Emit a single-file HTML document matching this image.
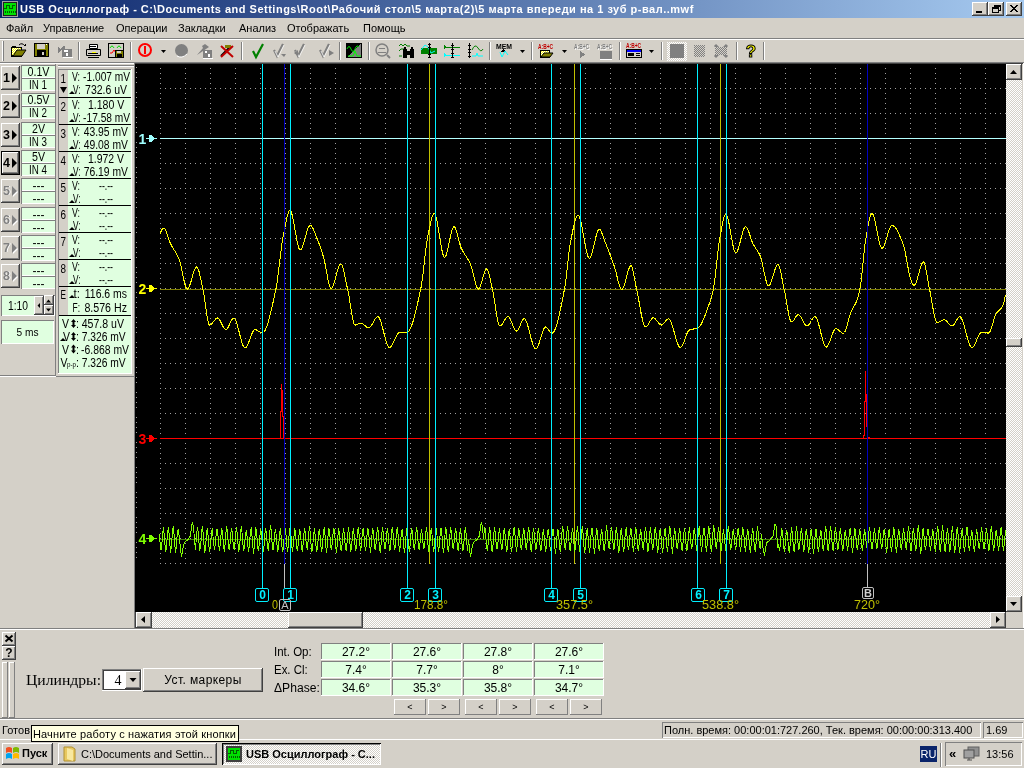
<!DOCTYPE html>
<html><head><meta charset="utf-8"><style>
*{margin:0;padding:0;box-sizing:border-box}
html,body{width:1024px;height:768px;overflow:hidden}
body{background:#D4D0C8;font-family:"Liberation Sans",sans-serif;font-size:11px;color:#000;position:relative}
.a{position:absolute}
.r{position:absolute;background:#D4D0C8;box-shadow:inset -1px -1px #404040,inset 1px 1px #fff,inset -2px -2px #808080}
.s{position:absolute;box-shadow:inset 1px 1px #808080,inset -1px -1px #fff}
.t{position:absolute;white-space:nowrap;line-height:13px}
.chk{background-color:#fff;background-image:conic-gradient(#D4D0C8 25%,#fff 0 50%,#D4D0C8 0 75%,#fff 0);background-size:2px 2px}
svg{overflow:visible}
body>*{will-change:transform}
</style></head><body>
<div class="a" style="left:0px;top:0px;width:1024px;height:18px;background:linear-gradient(to right,#0A246A,#A6CAF0)"></div>
<svg class="a" style="left:2px;top:1px" width="16" height="16" shape-rendering="crispEdges"><rect x="0" y="0" width="16" height="16" fill="#808080"/><rect x="0.5" y="0.5" width="15" height="15" fill="#202020" stroke="#A0A0A0"/><rect x="2" y="2" width="12" height="12" fill="#00E000"/><polyline points="2,7 4,7 4,4 7,4 7,7 10,7 10,4 13,4" fill="none" stroke="#006000"/><path d="M3 12v-2M5 12v-2M7 12v-2M9 12v-2M11 12v-2M13 12v-2" stroke="#006000"/></svg>
<div class="t" style="left:20px;top:2px;color:#fff;font-weight:bold;font-size:11px;line-height:14px;letter-spacing:0.5px">USB Осциллограф - C:\Documents and Settings\Root\Рабочий стол\5 марта(2)\5 марта впереди на 1 зуб р-вал..mwf</div>
<div class="r" style="left:972px;top:2px;width:16px;height:14px;"></div>
<div class="r" style="left:988px;top:2px;width:16px;height:14px;"></div>
<div class="r" style="left:1006px;top:2px;width:16px;height:14px;"></div>
<svg class="a" style="left:972px;top:2px" width="50" height="14" shape-rendering="crispEdges"><rect x="4" y="9" width="6" height="2" fill="#000"/><path d="M20.5 5.5h6v5h-6z M22.5 5.5v-2h6v5h-2" fill="none" stroke="#000"/><rect x="20" y="6" width="6" height="1" fill="#000"/><rect x="22" y="4" width="6" height="1" fill="#000"/><path d="M38 3l7 7M45 3l-7 7M39 3l7 7M46 3l-7 7" stroke="#000" stroke-width="1" fill="none"/></svg>
<div class="t" style="left:6px;top:22px;font-size:11px">Файл</div>
<div class="t" style="left:43px;top:22px;font-size:11px">Управление</div>
<div class="t" style="left:116px;top:22px;font-size:11px">Операции</div>
<div class="t" style="left:178px;top:22px;font-size:11px">Закладки</div>
<div class="t" style="left:239px;top:22px;font-size:11px">Анализ</div>
<div class="t" style="left:287px;top:22px;font-size:11px">Отображать</div>
<div class="t" style="left:363px;top:22px;font-size:11px">Помощь</div>
<div class="a" style="left:0px;top:38px;width:1024px;height:1px;background:#808080"></div>
<div class="a" style="left:0px;top:39px;width:1024px;height:1px;background:#fff"></div>
<div class="a" style="left:0px;top:62px;width:1024px;height:1px;background:#808080"></div>
<div class="a" style="left:0px;top:63px;width:134px;height:1px;background:#fff"></div>
<div class="a" style="left:2px;top:41px;width:1px;height:20px;background:#fff"></div>
<div class="a" style="left:3px;top:41px;width:1px;height:20px;background:#808080"></div>
<div class="a" style="left:78px;top:42px;width:1px;height:18px;background:#808080"></div>
<div class="a" style="left:79px;top:42px;width:1px;height:18px;background:#fff"></div>
<div class="a" style="left:130px;top:42px;width:1px;height:18px;background:#808080"></div>
<div class="a" style="left:131px;top:42px;width:1px;height:18px;background:#fff"></div>
<div class="a" style="left:241px;top:42px;width:1px;height:18px;background:#808080"></div>
<div class="a" style="left:242px;top:42px;width:1px;height:18px;background:#fff"></div>
<div class="a" style="left:339px;top:42px;width:1px;height:18px;background:#808080"></div>
<div class="a" style="left:340px;top:42px;width:1px;height:18px;background:#fff"></div>
<div class="a" style="left:368px;top:42px;width:1px;height:18px;background:#808080"></div>
<div class="a" style="left:369px;top:42px;width:1px;height:18px;background:#fff"></div>
<div class="a" style="left:489px;top:42px;width:1px;height:18px;background:#808080"></div>
<div class="a" style="left:490px;top:42px;width:1px;height:18px;background:#fff"></div>
<div class="a" style="left:531px;top:42px;width:1px;height:18px;background:#808080"></div>
<div class="a" style="left:532px;top:42px;width:1px;height:18px;background:#fff"></div>
<div class="a" style="left:619px;top:42px;width:1px;height:18px;background:#808080"></div>
<div class="a" style="left:620px;top:42px;width:1px;height:18px;background:#fff"></div>
<div class="a" style="left:661px;top:42px;width:1px;height:18px;background:#808080"></div>
<div class="a" style="left:662px;top:42px;width:1px;height:18px;background:#fff"></div>
<div class="a" style="left:736px;top:42px;width:1px;height:18px;background:#808080"></div>
<div class="a" style="left:737px;top:42px;width:1px;height:18px;background:#fff"></div>
<div class="a" style="left:763px;top:42px;width:1px;height:18px;background:#808080"></div>
<div class="a" style="left:764px;top:42px;width:1px;height:18px;background:#fff"></div>
<svg class="a" style="left:0;top:0" width="780" height="64" shape-rendering="crispEdges">
<rect x="11" y="47" width="11" height="10" fill="#000"/>
<rect x="12" y="48" width="9" height="7" fill="#fff"/><path d="M12 48h1v1h-1zM14 48h1v1h-1zM16 48h1v1h-1zM18 48h1v1h-1zM20 48h1v1h-1zM13 49h1v1h-1zM15 49h1v1h-1zM17 49h1v1h-1zM19 49h1v1h-1zM12 50h1v1h-1zM14 50h1v1h-1zM16 50h1v1h-1zM18 50h1v1h-1zM20 50h1v1h-1zM13 51h1v1h-1zM15 51h1v1h-1zM17 51h1v1h-1zM19 51h1v1h-1zM12 52h1v1h-1zM14 52h1v1h-1zM16 52h1v1h-1zM18 52h1v1h-1zM20 52h1v1h-1zM13 53h1v1h-1zM15 53h1v1h-1zM17 53h1v1h-1zM19 53h1v1h-1zM12 54h1v1h-1zM14 54h1v1h-1zM16 54h1v1h-1zM18 54h1v1h-1zM20 54h1v1h-1z" fill="#FFFF00"/>
<rect x="12" y="46" width="4" height="1" fill="#000"/>
<path d="M13 56L17 50H26L22 56z" fill="#808000" stroke="#000" stroke-width="1" shape-rendering="auto"/>
<path d="M19 45q3-3 6 1" fill="none" stroke="#000" shape-rendering="auto"/><path d="M23 46h3v-3z" fill="#000"/>
<rect x="34" y="43" width="15" height="14" fill="#000"/>
<rect x="35" y="44" width="13" height="12" fill="#808000"/>
<rect x="37" y="44" width="8" height="5" fill="#D4D0C8"/>
<rect x="37" y="50" width="9" height="6" fill="#000"/>
<rect x="42" y="52" width="2" height="3" fill="#D4D0C8"/>
<rect x="46" y="44" width="1" height="1" fill="#fff"/>
<path d="M58 47l3 2 2-3h2v3h-3l-3 4h-1z" fill="#808080"/>
<rect x="62" y="49" width="10" height="8" fill="#808080"/>
<rect x="64" y="50" width="4" height="2" fill="#fff"/>
<rect x="66" y="53" width="2" height="3" fill="#fff"/>
<rect x="63" y="57" width="10" height="1" fill="#fff"/>
<path d="M89.5 44.5h8v4h-8z" fill="#fff" stroke="#000" shape-rendering="auto"/>
<path d="M86.5 49.5h14v6h-14z" fill="#D4D0C8" stroke="#000" shape-rendering="auto"/>
<rect x="88" y="53" width="10" height="1" fill="#000"/>
<rect x="92" y="52" width="4" height="1" fill="#FFFF00"/>
<rect x="88" y="57" width="11" height="1" fill="#000"/>
<rect x="90" y="46" width="6" height="1" fill="#000"/>
<rect x="108" y="43" width="16" height="15" fill="#000"/>
<rect x="109" y="44" width="14" height="13" fill="#D4D0C8"/>
<path d="M110 48q2-4 4 0 M117 48q2-4 4 0" fill="none" stroke="#00E000" shape-rendering="auto"/><path d="M110 53h2l2-3 2 3" fill="none" stroke="#FF0000" shape-rendering="auto"/>
<rect x="115" y="50" width="9" height="8" fill="#000"/>
<rect x="116" y="51" width="7" height="6" fill="#808000"/>
<rect x="117" y="51" width="4" height="2" fill="#D4D0C8"/>
<rect x="117" y="54" width="5" height="3" fill="#000"/>
<circle cx="145" cy="50" r="6" fill="none" stroke="#FF0000" stroke-width="2" shape-rendering="auto"/>
<rect x="144" y="46" width="2" height="8" fill="#FF0000"/>
<path d="M161 50h5l-2.5 3z" fill="#000" shape-rendering="auto"/>
<circle cx="181.5" cy="50.5" r="6.5" fill="#808080" shape-rendering="auto"/>
<path d="M177 56q5 3 10-2" stroke="#fff" fill="none" shape-rendering="auto"/>
<path d="M197 55l6-7 -1-2 3-2 4 3-3 2z" fill="#808080" shape-rendering="auto"/>
<rect x="203" y="50" width="9" height="8" fill="#808080"/>
<rect x="205" y="51" width="2" height="2" fill="#fff"/>
<rect x="208" y="54" width="2" height="3" fill="#fff"/>
<rect x="203" y="58" width="10" height="1" fill="#fff"/>
<path d="M221 56l10-10" stroke="#000" stroke-width="2" shape-rendering="auto"/><path d="M225 45h6v3h-6z" fill="#808000"/><path d="M221 46l12 11M233 46l-12 11" stroke="#C00000" stroke-width="2" shape-rendering="auto"/>
<path d="M253 51l3 6 7-13" fill="none" stroke="#008000" stroke-width="2.2" shape-rendering="auto"/>
<path d="M274 50l3 6 6-12" fill="none" stroke="#808080" stroke-width="2.2" shape-rendering="auto"/><path d="M275 51l3 6 6-12" fill="none" stroke="#fff" stroke-width="1" opacity="0.8" shape-rendering="auto"/><path d="M281 54l5 0-2 3z" fill="#808080" shape-rendering="auto"/>
<path d="M295 50l3 6 6-12" fill="none" stroke="#808080" stroke-width="2.2" shape-rendering="auto"/><path d="M296 51l3 6 6-12" fill="none" stroke="#fff" stroke-width="1" opacity="0.8" shape-rendering="auto"/><path d="M294 53l4-3v6z" fill="#808080" shape-rendering="auto"/>
<path d="M320 50l3 6 6-12" fill="none" stroke="#808080" stroke-width="2.2" shape-rendering="auto"/><path d="M321 51l3 6 6-12" fill="none" stroke="#fff" stroke-width="1" opacity="0.8" shape-rendering="auto"/><path d="M329 50l5 3-5 3z" fill="#808080" shape-rendering="auto"/>
<rect x="346" y="43" width="16" height="15" fill="#000"/>
<path d="M347 57L361 44V57z" fill="#808080"/>
<path d="M347 49q2-5 4 0t4 0 4-2" fill="none" stroke="#00E000" shape-rendering="auto"/><path d="M348 56h5l2-5 2 5h4" fill="none" stroke="#00FF00" shape-rendering="auto"/>
<circle cx="382" cy="50" r="6" fill="none" stroke="#808080" stroke-width="1.5" shape-rendering="auto"/><path d="M378 52h8M379 48h6" stroke="#808080"/><path d="M387 55l3 3" stroke="#808080" stroke-width="2" shape-rendering="auto"/>
<path d="M399 46l2-2 2 2 2-2 2 2h3M399 51l2-2h3M399 56h3" fill="none" stroke="#008000" shape-rendering="auto"/>
<rect x="403" y="49" width="4" height="9" fill="#000"/>
<rect x="410" y="49" width="4" height="9" fill="#000"/>
<rect x="405" y="51" width="6" height="4" fill="#000"/>
<rect x="404" y="47" width="2" height="2" fill="#000"/>
<rect x="411" y="47" width="2" height="2" fill="#000"/>
<rect x="421" y="48" width="16" height="6" fill="#008000"/>
<path d="M421 50l4-5 3 2 3 6 4-2" fill="none" stroke="#00FFFF" shape-rendering="auto"/>
<rect x="429" y="43" width="1" height="15" fill="#000"/>
<path d="M428 44h3M428 57h3M428 47h3M428 54h3" stroke="#000"/>
<rect x="446" y="47" width="14" height="1" fill="#008000"/>
<rect x="446" y="55" width="14" height="1" fill="#00FFFF"/>
<path d="M444 45v4l3-2z" fill="#008000"/><path d="M444 53v4l3-2z" fill="#00FFFF"/>
<rect x="452" y="43" width="1" height="15" fill="#000"/>
<path d="M451 45h3M451 49h3M451 53h3M451 57h3" stroke="#000"/>
<rect x="469" y="43" width="1" height="15" fill="#000"/>
<path d="M468 45h3M468 49h3M468 52h3M468 56h3" stroke="#000"/>
<path d="M472 50q3-7 6-2t5 1" fill="none" stroke="#008000" shape-rendering="auto"/><path d="M472 56h4l1-3 1 3h5" fill="none" stroke="#00FFFF" shape-rendering="auto"/>
<text x="496" y="49" font-family="Liberation Sans" font-size="7.5" font-weight="bold" fill="#000" textLength="16" lengthAdjust="spacingAndGlyphs">MEM</text>
<path d="M501 52l2.5-3 2.5 3z" fill="#000"/><path d="M500 52l2 5 3-6 3 4" fill="none" stroke="#00FFFF" shape-rendering="auto"/>
<path d="M520 50h5l-2.5 3z" fill="#000" shape-rendering="auto"/>
<text x="538" y="49" font-family="Liberation Sans" font-size="7" font-weight="bold" fill="#C00000" textLength="15" lengthAdjust="spacingAndGlyphs">A:B+C</text>
<rect x="540" y="50" width="10" height="8" fill="#000"/>
<rect x="541" y="51" width="8" height="5" fill="#fff"/><path d="M541 51h1v1h-1zM543 51h1v1h-1zM545 51h1v1h-1zM547 51h1v1h-1zM542 52h1v1h-1zM544 52h1v1h-1zM546 52h1v1h-1zM548 52h1v1h-1zM541 53h1v1h-1zM543 53h1v1h-1zM545 53h1v1h-1zM547 53h1v1h-1zM542 54h1v1h-1zM544 54h1v1h-1zM546 54h1v1h-1zM548 54h1v1h-1zM541 55h1v1h-1zM543 55h1v1h-1zM545 55h1v1h-1zM547 55h1v1h-1z" fill="#FFFF00"/>
<path d="M541 57l3-4h9l-3 4z" fill="#808000" stroke="#000" shape-rendering="auto"/>
<path d="M562 50h5l-2.5 3z" fill="#000" shape-rendering="auto"/>
<text x="575" y="50" font-family="Liberation Sans" font-size="7" font-weight="bold" fill="#fff" textLength="15" lengthAdjust="spacingAndGlyphs">A:B+C</text><text x="574" y="49" font-family="Liberation Sans" font-size="7" font-weight="bold" fill="#808080" textLength="15" lengthAdjust="spacingAndGlyphs">A:B+C</text>
<path d="M580 51v7l5-3.5z" fill="#808080"/>
<text x="598" y="50" font-family="Liberation Sans" font-size="7" font-weight="bold" fill="#fff" textLength="15" lengthAdjust="spacingAndGlyphs">A:B+C</text><text x="597" y="49" font-family="Liberation Sans" font-size="7" font-weight="bold" fill="#808080" textLength="15" lengthAdjust="spacingAndGlyphs">A:B+C</text>
<rect x="600" y="51" width="12" height="8" fill="#808080"/>
<rect x="600" y="59" width="12" height="1" fill="#fff"/>
<text x="626" y="48" font-family="Liberation Sans" font-size="7" font-weight="bold" fill="#C00000" textLength="15" lengthAdjust="spacingAndGlyphs">A:B+C</text>
<rect x="626" y="49" width="16" height="9" fill="#000"/>
<rect x="627" y="50" width="14" height="2" fill="#0000FF"/>
<rect x="627" y="52" width="14" height="5" fill="#D4D0C8"/>
<rect x="628" y="53" width="6" height="3" fill="#000"/>
<path d="M636 53h4M636 55h4" stroke="#000"/>
<path d="M649 50h5l-2.5 3z" fill="#000" shape-rendering="auto"/>
<rect x="667" y="42" width="20" height="19" fill="#fff"/><path d="M668 42h1v1h-1zM670 42h1v1h-1zM672 42h1v1h-1zM674 42h1v1h-1zM676 42h1v1h-1zM678 42h1v1h-1zM680 42h1v1h-1zM682 42h1v1h-1zM684 42h1v1h-1zM686 42h1v1h-1zM667 43h1v1h-1zM669 43h1v1h-1zM671 43h1v1h-1zM673 43h1v1h-1zM675 43h1v1h-1zM677 43h1v1h-1zM679 43h1v1h-1zM681 43h1v1h-1zM683 43h1v1h-1zM685 43h1v1h-1zM668 44h1v1h-1zM670 44h1v1h-1zM672 44h1v1h-1zM674 44h1v1h-1zM676 44h1v1h-1zM678 44h1v1h-1zM680 44h1v1h-1zM682 44h1v1h-1zM684 44h1v1h-1zM686 44h1v1h-1zM667 45h1v1h-1zM669 45h1v1h-1zM671 45h1v1h-1zM673 45h1v1h-1zM675 45h1v1h-1zM677 45h1v1h-1zM679 45h1v1h-1zM681 45h1v1h-1zM683 45h1v1h-1zM685 45h1v1h-1zM668 46h1v1h-1zM670 46h1v1h-1zM672 46h1v1h-1zM674 46h1v1h-1zM676 46h1v1h-1zM678 46h1v1h-1zM680 46h1v1h-1zM682 46h1v1h-1zM684 46h1v1h-1zM686 46h1v1h-1zM667 47h1v1h-1zM669 47h1v1h-1zM671 47h1v1h-1zM673 47h1v1h-1zM675 47h1v1h-1zM677 47h1v1h-1zM679 47h1v1h-1zM681 47h1v1h-1zM683 47h1v1h-1zM685 47h1v1h-1zM668 48h1v1h-1zM670 48h1v1h-1zM672 48h1v1h-1zM674 48h1v1h-1zM676 48h1v1h-1zM678 48h1v1h-1zM680 48h1v1h-1zM682 48h1v1h-1zM684 48h1v1h-1zM686 48h1v1h-1zM667 49h1v1h-1zM669 49h1v1h-1zM671 49h1v1h-1zM673 49h1v1h-1zM675 49h1v1h-1zM677 49h1v1h-1zM679 49h1v1h-1zM681 49h1v1h-1zM683 49h1v1h-1zM685 49h1v1h-1zM668 50h1v1h-1zM670 50h1v1h-1zM672 50h1v1h-1zM674 50h1v1h-1zM676 50h1v1h-1zM678 50h1v1h-1zM680 50h1v1h-1zM682 50h1v1h-1zM684 50h1v1h-1zM686 50h1v1h-1zM667 51h1v1h-1zM669 51h1v1h-1zM671 51h1v1h-1zM673 51h1v1h-1zM675 51h1v1h-1zM677 51h1v1h-1zM679 51h1v1h-1zM681 51h1v1h-1zM683 51h1v1h-1zM685 51h1v1h-1zM668 52h1v1h-1zM670 52h1v1h-1zM672 52h1v1h-1zM674 52h1v1h-1zM676 52h1v1h-1zM678 52h1v1h-1zM680 52h1v1h-1zM682 52h1v1h-1zM684 52h1v1h-1zM686 52h1v1h-1zM667 53h1v1h-1zM669 53h1v1h-1zM671 53h1v1h-1zM673 53h1v1h-1zM675 53h1v1h-1zM677 53h1v1h-1zM679 53h1v1h-1zM681 53h1v1h-1zM683 53h1v1h-1zM685 53h1v1h-1zM668 54h1v1h-1zM670 54h1v1h-1zM672 54h1v1h-1zM674 54h1v1h-1zM676 54h1v1h-1zM678 54h1v1h-1zM680 54h1v1h-1zM682 54h1v1h-1zM684 54h1v1h-1zM686 54h1v1h-1zM667 55h1v1h-1zM669 55h1v1h-1zM671 55h1v1h-1zM673 55h1v1h-1zM675 55h1v1h-1zM677 55h1v1h-1zM679 55h1v1h-1zM681 55h1v1h-1zM683 55h1v1h-1zM685 55h1v1h-1zM668 56h1v1h-1zM670 56h1v1h-1zM672 56h1v1h-1zM674 56h1v1h-1zM676 56h1v1h-1zM678 56h1v1h-1zM680 56h1v1h-1zM682 56h1v1h-1zM684 56h1v1h-1zM686 56h1v1h-1zM667 57h1v1h-1zM669 57h1v1h-1zM671 57h1v1h-1zM673 57h1v1h-1zM675 57h1v1h-1zM677 57h1v1h-1zM679 57h1v1h-1zM681 57h1v1h-1zM683 57h1v1h-1zM685 57h1v1h-1zM668 58h1v1h-1zM670 58h1v1h-1zM672 58h1v1h-1zM674 58h1v1h-1zM676 58h1v1h-1zM678 58h1v1h-1zM680 58h1v1h-1zM682 58h1v1h-1zM684 58h1v1h-1zM686 58h1v1h-1zM667 59h1v1h-1zM669 59h1v1h-1zM671 59h1v1h-1zM673 59h1v1h-1zM675 59h1v1h-1zM677 59h1v1h-1zM679 59h1v1h-1zM681 59h1v1h-1zM683 59h1v1h-1zM685 59h1v1h-1zM668 60h1v1h-1zM670 60h1v1h-1zM672 60h1v1h-1zM674 60h1v1h-1zM676 60h1v1h-1zM678 60h1v1h-1zM680 60h1v1h-1zM682 60h1v1h-1zM684 60h1v1h-1zM686 60h1v1h-1z" fill="#D4D0C8"/>
<rect x="670" y="44" width="14" height="14" fill="#808080"/>
<rect x="694" y="45" width="11" height="12" fill="#808080"/><path d="M695 45h1v1h-1zM697 45h1v1h-1zM699 45h1v1h-1zM701 45h1v1h-1zM703 45h1v1h-1zM694 46h1v1h-1zM696 46h1v1h-1zM698 46h1v1h-1zM700 46h1v1h-1zM702 46h1v1h-1zM704 46h1v1h-1zM695 47h1v1h-1zM697 47h1v1h-1zM699 47h1v1h-1zM701 47h1v1h-1zM703 47h1v1h-1zM694 48h1v1h-1zM696 48h1v1h-1zM698 48h1v1h-1zM700 48h1v1h-1zM702 48h1v1h-1zM704 48h1v1h-1zM695 49h1v1h-1zM697 49h1v1h-1zM699 49h1v1h-1zM701 49h1v1h-1zM703 49h1v1h-1zM694 50h1v1h-1zM696 50h1v1h-1zM698 50h1v1h-1zM700 50h1v1h-1zM702 50h1v1h-1zM704 50h1v1h-1zM695 51h1v1h-1zM697 51h1v1h-1zM699 51h1v1h-1zM701 51h1v1h-1zM703 51h1v1h-1zM694 52h1v1h-1zM696 52h1v1h-1zM698 52h1v1h-1zM700 52h1v1h-1zM702 52h1v1h-1zM704 52h1v1h-1zM695 53h1v1h-1zM697 53h1v1h-1zM699 53h1v1h-1zM701 53h1v1h-1zM703 53h1v1h-1zM694 54h1v1h-1zM696 54h1v1h-1zM698 54h1v1h-1zM700 54h1v1h-1zM702 54h1v1h-1zM704 54h1v1h-1zM695 55h1v1h-1zM697 55h1v1h-1zM699 55h1v1h-1zM701 55h1v1h-1zM703 55h1v1h-1zM694 56h1v1h-1zM696 56h1v1h-1zM698 56h1v1h-1zM700 56h1v1h-1zM702 56h1v1h-1zM704 56h1v1h-1z" fill="#D4D0C8"/>
<path d="M715 45l12 12M727 45l-12 12" stroke="#808080" stroke-width="3" shape-rendering="auto"/>
<rect x="715" y="47" width="12" height="8" fill="#808080"/><path d="M715 47h1v1h-1zM717 47h1v1h-1zM719 47h1v1h-1zM721 47h1v1h-1zM723 47h1v1h-1zM725 47h1v1h-1zM716 48h1v1h-1zM718 48h1v1h-1zM720 48h1v1h-1zM722 48h1v1h-1zM724 48h1v1h-1zM726 48h1v1h-1zM715 49h1v1h-1zM717 49h1v1h-1zM719 49h1v1h-1zM721 49h1v1h-1zM723 49h1v1h-1zM725 49h1v1h-1zM716 50h1v1h-1zM718 50h1v1h-1zM720 50h1v1h-1zM722 50h1v1h-1zM724 50h1v1h-1zM726 50h1v1h-1zM715 51h1v1h-1zM717 51h1v1h-1zM719 51h1v1h-1zM721 51h1v1h-1zM723 51h1v1h-1zM725 51h1v1h-1zM716 52h1v1h-1zM718 52h1v1h-1zM720 52h1v1h-1zM722 52h1v1h-1zM724 52h1v1h-1zM726 52h1v1h-1zM715 53h1v1h-1zM717 53h1v1h-1zM719 53h1v1h-1zM721 53h1v1h-1zM723 53h1v1h-1zM725 53h1v1h-1zM716 54h1v1h-1zM718 54h1v1h-1zM720 54h1v1h-1zM722 54h1v1h-1zM724 54h1v1h-1zM726 54h1v1h-1z" fill="#D4D0C8"/>
<text x="751" y="57" font-family="Liberation Sans" font-size="17" font-weight="bold" fill="#FFFF00" stroke="#000" stroke-width="1" text-anchor="middle" shape-rendering="auto">?</text>
</svg>
<div class="r" style="left:1px;top:66px;width:19px;height:24px;"></div>
<div class="s" style="left:21px;top:65px;width:35px;height:13px;background:#E0FFE0"></div>
<div class="s" style="left:21px;top:78px;width:35px;height:13px;background:#E0FFE0"></div>
<div class="r" style="left:1px;top:94px;width:19px;height:24px;"></div>
<div class="s" style="left:21px;top:93px;width:35px;height:13px;background:#E0FFE0"></div>
<div class="s" style="left:21px;top:106px;width:35px;height:13px;background:#E0FFE0"></div>
<div class="r" style="left:1px;top:123px;width:19px;height:24px;"></div>
<div class="s" style="left:21px;top:122px;width:35px;height:13px;background:#E0FFE0"></div>
<div class="s" style="left:21px;top:135px;width:35px;height:13px;background:#E0FFE0"></div>
<div class="r" style="left:1px;top:151px;width:19px;height:24px;box-shadow:inset -1px -1px #000,inset 1px 1px #000,inset -2px -2px #404040,inset 2px 2px #fff,inset -3px -3px #808080"></div>
<div class="s" style="left:21px;top:150px;width:35px;height:13px;background:#E0FFE0"></div>
<div class="s" style="left:21px;top:163px;width:35px;height:13px;background:#E0FFE0"></div>
<div class="r" style="left:1px;top:179px;width:19px;height:24px;"></div>
<div class="s" style="left:21px;top:178px;width:35px;height:13px;background:#E0FFE0"></div>
<div class="s" style="left:21px;top:191px;width:35px;height:13px;background:#E0FFE0"></div>
<div class="r" style="left:1px;top:208px;width:19px;height:24px;"></div>
<div class="s" style="left:21px;top:207px;width:35px;height:13px;background:#E0FFE0"></div>
<div class="s" style="left:21px;top:220px;width:35px;height:13px;background:#E0FFE0"></div>
<div class="r" style="left:1px;top:236px;width:19px;height:24px;"></div>
<div class="s" style="left:21px;top:235px;width:35px;height:13px;background:#E0FFE0"></div>
<div class="s" style="left:21px;top:248px;width:35px;height:13px;background:#E0FFE0"></div>
<div class="r" style="left:1px;top:264px;width:19px;height:24px;"></div>
<div class="s" style="left:21px;top:263px;width:35px;height:13px;background:#E0FFE0"></div>
<div class="s" style="left:21px;top:276px;width:35px;height:13px;background:#E0FFE0"></div>
<div class="s" style="left:1px;top:295px;width:54px;height:21px;background:#E0FFE0"></div>
<div class="r" style="left:34px;top:296px;width:10px;height:19px;"></div>
<div class="r" style="left:44px;top:295px;width:10px;height:10px;"></div>
<div class="r" style="left:44px;top:305px;width:10px;height:10px;"></div>
<div class="s" style="left:1px;top:320px;width:53px;height:24px;background:#E0FFE0"></div>
<div class="a" style="left:0px;top:375px;width:56px;height:1px;background:#808080"></div>
<div class="a" style="left:0px;top:376px;width:56px;height:1px;background:#fff"></div>
<div class="a" style="left:56px;top:376px;width:78px;height:1px;background:#808080"></div>
<div class="a" style="left:55px;top:64px;width:1px;height:312px;background:#808080"></div>
<div class="a" style="left:58px;top:65px;width:77px;height:1px;background:#808080"></div>
<div class="a" style="left:58px;top:66px;width:77px;height:1px;background:#fff"></div>
<div class="a" style="left:58px;top:69px;width:74px;height:304px;background:#808080"></div>
<div class="a" style="left:59px;top:70px;width:72px;height:303px;background:#E0FFE0"></div>
<div class="a" style="left:59px;top:70px;width:9px;height:245px;background:#D4D0C8"></div>
<div class="a" style="left:131px;top:69px;width:1px;height:305px;background:#fff"></div>
<div class="a" style="left:58px;top:373px;width:74px;height:1px;background:#fff"></div>
<div class="a" style="left:59px;top:97px;width:72px;height:1px;background:#000"></div>
<div class="a" style="left:59px;top:124px;width:72px;height:1px;background:#000"></div>
<div class="a" style="left:59px;top:151px;width:72px;height:1px;background:#000"></div>
<div class="a" style="left:59px;top:178px;width:72px;height:1px;background:#000"></div>
<div class="a" style="left:59px;top:205px;width:72px;height:1px;background:#000"></div>
<div class="a" style="left:59px;top:232px;width:72px;height:1px;background:#000"></div>
<div class="a" style="left:59px;top:259px;width:72px;height:1px;background:#000"></div>
<div class="a" style="left:59px;top:286px;width:72px;height:1px;background:#000"></div>
<div class="a" style="left:59px;top:315px;width:72px;height:1px;background:#000"></div>
<svg class="a" style="left:0;top:0" width="140" height="380">
<text x="3" y="82" font-family="Liberation Sans" font-size="12.5" font-weight="bold" fill="#000" text-anchor="start">1</text>
<path d="M12 73L17 78L12 83z" fill="#000"/>
<text x="38.5" y="76" font-family="Liberation Sans" font-size="12" font-weight="normal" fill="#000" text-anchor="middle" textLength="22" lengthAdjust="spacingAndGlyphs">0.1V</text>
<text x="38" y="89" font-family="Liberation Sans" font-size="12" font-weight="normal" fill="#000" text-anchor="middle" textLength="18" lengthAdjust="spacingAndGlyphs">IN 1</text>
<text x="3" y="110" font-family="Liberation Sans" font-size="12.5" font-weight="bold" fill="#000" text-anchor="start">2</text>
<path d="M12 101L17 106L12 111z" fill="#000"/>
<text x="38.5" y="104" font-family="Liberation Sans" font-size="12" font-weight="normal" fill="#000" text-anchor="middle" textLength="22" lengthAdjust="spacingAndGlyphs">0.5V</text>
<text x="38" y="117" font-family="Liberation Sans" font-size="12" font-weight="normal" fill="#000" text-anchor="middle" textLength="18" lengthAdjust="spacingAndGlyphs">IN 2</text>
<text x="3" y="139" font-family="Liberation Sans" font-size="12.5" font-weight="bold" fill="#000" text-anchor="start">3</text>
<path d="M12 130L17 135L12 140z" fill="#000"/>
<text x="38.5" y="133" font-family="Liberation Sans" font-size="12" font-weight="normal" fill="#000" text-anchor="middle" textLength="13" lengthAdjust="spacingAndGlyphs">2V</text>
<text x="38" y="146" font-family="Liberation Sans" font-size="12" font-weight="normal" fill="#000" text-anchor="middle" textLength="18" lengthAdjust="spacingAndGlyphs">IN 3</text>
<text x="3" y="167" font-family="Liberation Sans" font-size="12.5" font-weight="bold" fill="#000" text-anchor="start">4</text>
<path d="M12 158L17 163L12 168z" fill="#000"/>
<text x="38.5" y="161" font-family="Liberation Sans" font-size="12" font-weight="normal" fill="#000" text-anchor="middle" textLength="13" lengthAdjust="spacingAndGlyphs">5V</text>
<text x="38" y="174" font-family="Liberation Sans" font-size="12" font-weight="normal" fill="#000" text-anchor="middle" textLength="18" lengthAdjust="spacingAndGlyphs">IN 4</text>
<text x="4" y="195" font-family="Liberation Sans" font-size="12.5" font-weight="bold" fill="#fff" text-anchor="start">5</text>
<path d="M13 187L18 192L13 197z" fill="#fff"/>
<text x="3" y="195" font-family="Liberation Sans" font-size="12.5" font-weight="bold" fill="#808080" text-anchor="start">5</text>
<path d="M12 186L17 191L12 196z" fill="#808080"/>
<text x="38.5" y="190" font-family="Liberation Sans" font-size="12" font-weight="normal" fill="#000" text-anchor="middle">---</text>
<text x="38.5" y="203" font-family="Liberation Sans" font-size="12" font-weight="normal" fill="#000" text-anchor="middle">---</text>
<text x="4" y="224" font-family="Liberation Sans" font-size="12.5" font-weight="bold" fill="#fff" text-anchor="start">6</text>
<path d="M13 216L18 221L13 226z" fill="#fff"/>
<text x="3" y="224" font-family="Liberation Sans" font-size="12.5" font-weight="bold" fill="#808080" text-anchor="start">6</text>
<path d="M12 215L17 220L12 225z" fill="#808080"/>
<text x="38.5" y="219" font-family="Liberation Sans" font-size="12" font-weight="normal" fill="#000" text-anchor="middle">---</text>
<text x="38.5" y="232" font-family="Liberation Sans" font-size="12" font-weight="normal" fill="#000" text-anchor="middle">---</text>
<text x="4" y="252" font-family="Liberation Sans" font-size="12.5" font-weight="bold" fill="#fff" text-anchor="start">7</text>
<path d="M13 244L18 249L13 254z" fill="#fff"/>
<text x="3" y="252" font-family="Liberation Sans" font-size="12.5" font-weight="bold" fill="#808080" text-anchor="start">7</text>
<path d="M12 243L17 248L12 253z" fill="#808080"/>
<text x="38.5" y="247" font-family="Liberation Sans" font-size="12" font-weight="normal" fill="#000" text-anchor="middle">---</text>
<text x="38.5" y="260" font-family="Liberation Sans" font-size="12" font-weight="normal" fill="#000" text-anchor="middle">---</text>
<text x="4" y="280" font-family="Liberation Sans" font-size="12.5" font-weight="bold" fill="#fff" text-anchor="start">8</text>
<path d="M13 272L18 277L13 282z" fill="#fff"/>
<text x="3" y="280" font-family="Liberation Sans" font-size="12.5" font-weight="bold" fill="#808080" text-anchor="start">8</text>
<path d="M12 271L17 276L12 281z" fill="#808080"/>
<text x="38.5" y="275" font-family="Liberation Sans" font-size="12" font-weight="normal" fill="#000" text-anchor="middle">---</text>
<text x="38.5" y="288" font-family="Liberation Sans" font-size="12" font-weight="normal" fill="#000" text-anchor="middle">---</text>
<text x="8" y="309.5" font-family="Liberation Sans" font-size="12" font-weight="normal" fill="#000" text-anchor="start" textLength="20" lengthAdjust="spacingAndGlyphs">1:10</text>
<path d="M37.5 305.5l2.5-2.5v5z M46 302.5l2.5-3 2.5 3z M46 308.5h5l-2.5 3z" fill="#000"/>
<text x="27.5" y="335.5" font-family="Liberation Sans" font-size="11" font-weight="normal" fill="#000" text-anchor="middle" textLength="22" lengthAdjust="spacingAndGlyphs">5 ms</text>
<text x="60.5" y="83" font-family="Liberation Sans" font-size="12" font-weight="normal" fill="#000" text-anchor="start" textLength="5.5" lengthAdjust="spacingAndGlyphs">1</text>
<text x="72" y="81" font-family="Liberation Sans" font-size="12" font-weight="normal" fill="#000" text-anchor="start" textLength="8" lengthAdjust="spacingAndGlyphs">V:</text>
<path d="M69 94l3-3 3 3z" fill="#000"/>
<text x="73" y="94" font-family="Liberation Sans" font-size="12" font-weight="normal" fill="#000" text-anchor="start" textLength="7.5" lengthAdjust="spacingAndGlyphs">V:</text>
<text x="83.1" y="81" font-family="Liberation Sans" font-size="12" font-weight="normal" fill="#000" text-anchor="start" textLength="47" lengthAdjust="spacingAndGlyphs">-1.007 mV</text>
<text x="85.1" y="94" font-family="Liberation Sans" font-size="12" font-weight="normal" fill="#000" text-anchor="start" textLength="42" lengthAdjust="spacingAndGlyphs">732.6 uV</text>
<text x="60.5" y="111" font-family="Liberation Sans" font-size="12" font-weight="normal" fill="#000" text-anchor="start" textLength="5.5" lengthAdjust="spacingAndGlyphs">2</text>
<text x="72" y="109" font-family="Liberation Sans" font-size="12" font-weight="normal" fill="#000" text-anchor="start" textLength="8" lengthAdjust="spacingAndGlyphs">V:</text>
<path d="M69 122l3-3 3 3z" fill="#000"/>
<text x="73" y="122" font-family="Liberation Sans" font-size="12" font-weight="normal" fill="#000" text-anchor="start" textLength="7.5" lengthAdjust="spacingAndGlyphs">V:</text>
<text x="87.9" y="109" font-family="Liberation Sans" font-size="12" font-weight="normal" fill="#000" text-anchor="start" textLength="36.5" lengthAdjust="spacingAndGlyphs">1.180 V</text>
<text x="83.1" y="122" font-family="Liberation Sans" font-size="12" font-weight="normal" fill="#000" text-anchor="start" textLength="47" lengthAdjust="spacingAndGlyphs">-17.58 mV</text>
<text x="60.5" y="138" font-family="Liberation Sans" font-size="12" font-weight="normal" fill="#000" text-anchor="start" textLength="5.5" lengthAdjust="spacingAndGlyphs">3</text>
<text x="72" y="136" font-family="Liberation Sans" font-size="12" font-weight="normal" fill="#000" text-anchor="start" textLength="8" lengthAdjust="spacingAndGlyphs">V:</text>
<path d="M69 149l3-3 3 3z" fill="#000"/>
<text x="73" y="149" font-family="Liberation Sans" font-size="12" font-weight="normal" fill="#000" text-anchor="start" textLength="7.5" lengthAdjust="spacingAndGlyphs">V:</text>
<text x="83.7" y="136" font-family="Liberation Sans" font-size="12" font-weight="normal" fill="#000" text-anchor="start" textLength="44.2" lengthAdjust="spacingAndGlyphs">43.95 mV</text>
<text x="83.7" y="149" font-family="Liberation Sans" font-size="12" font-weight="normal" fill="#000" text-anchor="start" textLength="44.2" lengthAdjust="spacingAndGlyphs">49.08 mV</text>
<text x="60.5" y="165" font-family="Liberation Sans" font-size="12" font-weight="normal" fill="#000" text-anchor="start" textLength="5.5" lengthAdjust="spacingAndGlyphs">4</text>
<text x="72" y="163" font-family="Liberation Sans" font-size="12" font-weight="normal" fill="#000" text-anchor="start" textLength="8" lengthAdjust="spacingAndGlyphs">V:</text>
<path d="M69 176l3-3 3 3z" fill="#000"/>
<text x="73" y="176" font-family="Liberation Sans" font-size="12" font-weight="normal" fill="#000" text-anchor="start" textLength="7.5" lengthAdjust="spacingAndGlyphs">V:</text>
<text x="88" y="163" font-family="Liberation Sans" font-size="12" font-weight="normal" fill="#000" text-anchor="start" textLength="36" lengthAdjust="spacingAndGlyphs">1.972 V</text>
<text x="83.7" y="176" font-family="Liberation Sans" font-size="12" font-weight="normal" fill="#000" text-anchor="start" textLength="44.2" lengthAdjust="spacingAndGlyphs">76.19 mV</text>
<text x="60.5" y="192" font-family="Liberation Sans" font-size="12" font-weight="normal" fill="#000" text-anchor="start" textLength="5.5" lengthAdjust="spacingAndGlyphs">5</text>
<text x="72" y="190" font-family="Liberation Sans" font-size="12" font-weight="normal" fill="#000" text-anchor="start" textLength="8" lengthAdjust="spacingAndGlyphs">V:</text>
<path d="M69 203l3-3 3 3z" fill="#000"/>
<text x="73" y="203" font-family="Liberation Sans" font-size="12" font-weight="normal" fill="#000" text-anchor="start" textLength="7.5" lengthAdjust="spacingAndGlyphs">V:</text>
<text x="99" y="190" font-family="Liberation Sans" font-size="12" font-weight="normal" fill="#000" text-anchor="start" textLength="14" lengthAdjust="spacingAndGlyphs">--.--</text>
<text x="99" y="203" font-family="Liberation Sans" font-size="12" font-weight="normal" fill="#000" text-anchor="start" textLength="14" lengthAdjust="spacingAndGlyphs">--.--</text>
<text x="60.5" y="219" font-family="Liberation Sans" font-size="12" font-weight="normal" fill="#000" text-anchor="start" textLength="5.5" lengthAdjust="spacingAndGlyphs">6</text>
<text x="72" y="217" font-family="Liberation Sans" font-size="12" font-weight="normal" fill="#000" text-anchor="start" textLength="8" lengthAdjust="spacingAndGlyphs">V:</text>
<path d="M69 230l3-3 3 3z" fill="#000"/>
<text x="73" y="230" font-family="Liberation Sans" font-size="12" font-weight="normal" fill="#000" text-anchor="start" textLength="7.5" lengthAdjust="spacingAndGlyphs">V:</text>
<text x="99" y="217" font-family="Liberation Sans" font-size="12" font-weight="normal" fill="#000" text-anchor="start" textLength="14" lengthAdjust="spacingAndGlyphs">--.--</text>
<text x="99" y="230" font-family="Liberation Sans" font-size="12" font-weight="normal" fill="#000" text-anchor="start" textLength="14" lengthAdjust="spacingAndGlyphs">--.--</text>
<text x="60.5" y="246" font-family="Liberation Sans" font-size="12" font-weight="normal" fill="#000" text-anchor="start" textLength="5.5" lengthAdjust="spacingAndGlyphs">7</text>
<text x="72" y="244" font-family="Liberation Sans" font-size="12" font-weight="normal" fill="#000" text-anchor="start" textLength="8" lengthAdjust="spacingAndGlyphs">V:</text>
<path d="M69 257l3-3 3 3z" fill="#000"/>
<text x="73" y="257" font-family="Liberation Sans" font-size="12" font-weight="normal" fill="#000" text-anchor="start" textLength="7.5" lengthAdjust="spacingAndGlyphs">V:</text>
<text x="99" y="244" font-family="Liberation Sans" font-size="12" font-weight="normal" fill="#000" text-anchor="start" textLength="14" lengthAdjust="spacingAndGlyphs">--.--</text>
<text x="99" y="257" font-family="Liberation Sans" font-size="12" font-weight="normal" fill="#000" text-anchor="start" textLength="14" lengthAdjust="spacingAndGlyphs">--.--</text>
<text x="60.5" y="273" font-family="Liberation Sans" font-size="12" font-weight="normal" fill="#000" text-anchor="start" textLength="5.5" lengthAdjust="spacingAndGlyphs">8</text>
<text x="72" y="271" font-family="Liberation Sans" font-size="12" font-weight="normal" fill="#000" text-anchor="start" textLength="8" lengthAdjust="spacingAndGlyphs">V:</text>
<path d="M69 284l3-3 3 3z" fill="#000"/>
<text x="73" y="284" font-family="Liberation Sans" font-size="12" font-weight="normal" fill="#000" text-anchor="start" textLength="7.5" lengthAdjust="spacingAndGlyphs">V:</text>
<text x="99" y="271" font-family="Liberation Sans" font-size="12" font-weight="normal" fill="#000" text-anchor="start" textLength="14" lengthAdjust="spacingAndGlyphs">--.--</text>
<text x="99" y="284" font-family="Liberation Sans" font-size="12" font-weight="normal" fill="#000" text-anchor="start" textLength="14" lengthAdjust="spacingAndGlyphs">--.--</text>
<path d="M60 87h7l-3.5 6z" fill="#000"/>
<text x="60.5" y="299" font-family="Liberation Sans" font-size="12" font-weight="normal" fill="#000" text-anchor="start" textLength="5.5" lengthAdjust="spacingAndGlyphs">E</text>
<path d="M69 298l3-3 3 3z" fill="#000"/>
<text x="73.5" y="298" font-family="Liberation Sans" font-size="12" font-weight="normal" fill="#000" text-anchor="start" textLength="6.5" lengthAdjust="spacingAndGlyphs">t:</text>
<text x="84.8" y="298" font-family="Liberation Sans" font-size="12" font-weight="normal" fill="#000" text-anchor="start" textLength="42.2" lengthAdjust="spacingAndGlyphs">116.6 ms</text>
<text x="72.5" y="311.5" font-family="Liberation Sans" font-size="12" font-weight="normal" fill="#000" text-anchor="start" textLength="7.5" lengthAdjust="spacingAndGlyphs">F:</text>
<text x="84.4" y="311.5" font-family="Liberation Sans" font-size="12" font-weight="normal" fill="#000" text-anchor="start" textLength="42.6" lengthAdjust="spacingAndGlyphs">8.576 Hz</text>
<text x="62" y="328" font-family="Liberation Sans" font-size="12" font-weight="normal" fill="#000" text-anchor="start" textLength="7" lengthAdjust="spacingAndGlyphs">V</text>
<path d="M73.5 319l2.5 3h-1.5v3h1.5l-2.5 3-2.5-3h1.5v-3h-1.5z" fill="#000"/>
<text x="76" y="328" font-family="Liberation Sans" font-size="12" font-weight="normal" fill="#000" text-anchor="start" textLength="3" lengthAdjust="spacingAndGlyphs">:</text>
<text x="81.7" y="328" font-family="Liberation Sans" font-size="12" font-weight="normal" fill="#000" text-anchor="start" textLength="42.3" lengthAdjust="spacingAndGlyphs">457.8 uV</text>
<path d="M60 341l3-3 3 3z" fill="#000"/>
<text x="63" y="341" font-family="Liberation Sans" font-size="12" font-weight="normal" fill="#000" text-anchor="start" textLength="7" lengthAdjust="spacingAndGlyphs">V</text>
<path d="M73.5 332l2.5 3h-1.5v3h1.5l-2.5 3-2.5-3h1.5v-3h-1.5z" fill="#000"/>
<text x="76" y="341" font-family="Liberation Sans" font-size="12" font-weight="normal" fill="#000" text-anchor="start" textLength="3" lengthAdjust="spacingAndGlyphs">:</text>
<text x="81.7" y="341" font-family="Liberation Sans" font-size="12" font-weight="normal" fill="#000" text-anchor="start" textLength="44" lengthAdjust="spacingAndGlyphs">7.326 mV</text>
<text x="62" y="353.5" font-family="Liberation Sans" font-size="12" font-weight="normal" fill="#000" text-anchor="start" textLength="7" lengthAdjust="spacingAndGlyphs">V</text>
<path d="M73.5 344.5l2.5 3h-1.5v3h1.5l-2.5 3-2.5-3h1.5v-3h-1.5z" fill="#000"/>
<text x="76" y="353.5" font-family="Liberation Sans" font-size="12" font-weight="normal" fill="#000" text-anchor="start" textLength="3" lengthAdjust="spacingAndGlyphs">:</text>
<text x="81" y="353.5" font-family="Liberation Sans" font-size="12" font-weight="normal" fill="#000" text-anchor="start" textLength="48" lengthAdjust="spacingAndGlyphs">-6.868 mV</text>
<text x="60.5" y="366.5" font-family="Liberation Sans" font-size="12" font-weight="normal" fill="#000" text-anchor="start" textLength="7" lengthAdjust="spacingAndGlyphs">V</text>
<text x="67" y="366.5" font-family="Liberation Sans" font-size="8" font-weight="normal" fill="#000" text-anchor="start" textLength="9" lengthAdjust="spacingAndGlyphs">p-p</text>
<text x="76" y="366.5" font-family="Liberation Sans" font-size="12" font-weight="normal" fill="#000" text-anchor="start" textLength="3" lengthAdjust="spacingAndGlyphs">:</text>
<text x="81.7" y="366.5" font-family="Liberation Sans" font-size="12" font-weight="normal" fill="#000" text-anchor="start" textLength="44" lengthAdjust="spacingAndGlyphs">7.326 mV</text>
</svg>
<div class="a chk" style="left:1006px;top:80px;width:16px;height:516px;"></div>
<div class="r" style="left:1006px;top:64px;width:16px;height:16px;"></div>
<div class="r" style="left:1006px;top:596px;width:16px;height:16px;"></div>
<div class="r" style="left:1006px;top:338px;width:16px;height:9px;"></div>
<div class="a chk" style="left:152px;top:612px;width:838px;height:16px;"></div>
<div class="r" style="left:136px;top:612px;width:16px;height:16px;"></div>
<div class="r" style="left:990px;top:612px;width:16px;height:16px;"></div>
<div class="r" style="left:288px;top:612px;width:75px;height:16px;"></div>
<svg class="a" style="left:0;top:0" width="1024" height="640"><path d="M1010 74h7l-3.5-4z M1010 602h7l-3.5 4z M145 616v7l-4-3.5z M996 616v7l4-3.5z" fill="#000"/></svg>
<div class="a" style="left:1022px;top:62px;width:1px;height:567px;background:#D4D0C8"></div>
<div class="a" style="left:1023px;top:62px;width:1px;height:567px;background:#fff"></div>
<div class="a" style="left:134px;top:628px;width:890px;height:1px;background:#fff"></div>
<div class="a" style="left:0px;top:628px;width:1024px;height:1px;background:#808080"></div>
<div class="a" style="left:0px;top:629px;width:1024px;height:1px;background:#fff"></div>
<div class="r" style="left:2px;top:632px;width:14px;height:14px;"></div>
<div class="r" style="left:2px;top:646px;width:14px;height:14px;"></div>
<svg class="a" style="left:0;top:620px" width="1024" height="120">
<path d="M5.5 15.5l7 6M12.5 15.5l-7 6" stroke="#000" stroke-width="2" fill="none"/>
<text x="9" y="37" font-family="Liberation Sans" font-size="12" font-weight="bold" fill="#000" text-anchor="middle">?</text>
<rect x="2" y="42" width="6" height="56" fill="#808080"/><rect x="2" y="42" width="5" height="55" fill="#fff"/><rect x="3" y="43" width="4" height="54" fill="#D4D0C8"/>
<rect x="9" y="42" width="6" height="56" fill="#808080"/><rect x="9" y="42" width="5" height="55" fill="#fff"/><rect x="10" y="43" width="4" height="54" fill="#D4D0C8"/>
<text x="26" y="65" font-family="Liberation Serif" font-size="15.5" font-weight="normal" fill="#000" text-anchor="start" textLength="75" lengthAdjust="spacingAndGlyphs">Цилиндры:</text>
<rect x="102" y="49" width="40" height="22" fill="#808080"/><rect x="103" y="50" width="38" height="20" fill="#404040"/><rect x="102" y="70" width="40" height="1" fill="#fff"/><rect x="141" y="49" width="1" height="22" fill="#fff"/><rect x="104" y="51" width="37" height="18" fill="#fff"/>
<text x="118" y="65" font-family="Liberation Serif" font-size="14" font-weight="normal" fill="#000" text-anchor="middle">4</text>
</svg>
<div class="r" style="left:125px;top:671px;width:16px;height:18px;"></div>
<div class="r" style="left:143px;top:668px;width:120px;height:24px;"></div>
<div class="t" style="left:143px;top:673px;width:120px;text-align:center;font-size:12px;line-height:14px;letter-spacing:0.4px">Уст. маркеры</div>
<div class="r" style="left:394px;top:699px;width:32px;height:16px;box-shadow:inset -1px -1px #808080,inset 1px 1px #fff"></div>
<div class="r" style="left:428px;top:699px;width:32px;height:16px;box-shadow:inset -1px -1px #808080,inset 1px 1px #fff"></div>
<div class="r" style="left:465px;top:699px;width:32px;height:16px;box-shadow:inset -1px -1px #808080,inset 1px 1px #fff"></div>
<div class="r" style="left:499px;top:699px;width:32px;height:16px;box-shadow:inset -1px -1px #808080,inset 1px 1px #fff"></div>
<div class="r" style="left:536px;top:699px;width:32px;height:16px;box-shadow:inset -1px -1px #808080,inset 1px 1px #fff"></div>
<div class="r" style="left:570px;top:699px;width:32px;height:16px;box-shadow:inset -1px -1px #808080,inset 1px 1px #fff"></div>
<svg class="a" style="left:0;top:620px" width="1024" height="120">
<path d="M129.5 58h7l-3.5 4z" fill="#000"/>
<text x="274" y="36" font-family="Liberation Sans" font-size="12" font-weight="normal" fill="#000" text-anchor="start" textLength="37.7" lengthAdjust="spacingAndGlyphs">Int. Op:</text>
<text x="274" y="54" font-family="Liberation Sans" font-size="12" font-weight="normal" fill="#000" text-anchor="start" textLength="33.7" lengthAdjust="spacingAndGlyphs">Ex. Cl:</text>
<text x="274" y="71.5" font-family="Liberation Sans" font-size="12" font-weight="normal" fill="#000" text-anchor="start" textLength="45.8" lengthAdjust="spacingAndGlyphs">ΔPhase:</text>
<rect x="321" y="23" width="70" height="17" fill="#fff"/><rect x="321" y="23" width="69" height="16" fill="#808080"/><rect x="322" y="24" width="68" height="15" fill="#E0FFE0"/>
<text x="356" y="36" font-family="Liberation Sans" font-size="12" font-weight="normal" fill="#000" text-anchor="middle">27.2°</text>
<rect x="392" y="23" width="70" height="17" fill="#fff"/><rect x="392" y="23" width="69" height="16" fill="#808080"/><rect x="393" y="24" width="68" height="15" fill="#E0FFE0"/>
<text x="427" y="36" font-family="Liberation Sans" font-size="12" font-weight="normal" fill="#000" text-anchor="middle">27.6°</text>
<rect x="463" y="23" width="70" height="17" fill="#fff"/><rect x="463" y="23" width="69" height="16" fill="#808080"/><rect x="464" y="24" width="68" height="15" fill="#E0FFE0"/>
<text x="498" y="36" font-family="Liberation Sans" font-size="12" font-weight="normal" fill="#000" text-anchor="middle">27.8°</text>
<rect x="534" y="23" width="70" height="17" fill="#fff"/><rect x="534" y="23" width="69" height="16" fill="#808080"/><rect x="535" y="24" width="68" height="15" fill="#E0FFE0"/>
<text x="569" y="36" font-family="Liberation Sans" font-size="12" font-weight="normal" fill="#000" text-anchor="middle">27.6°</text>
<rect x="321" y="41" width="70" height="17" fill="#fff"/><rect x="321" y="41" width="69" height="16" fill="#808080"/><rect x="322" y="42" width="68" height="15" fill="#E0FFE0"/>
<text x="356" y="54" font-family="Liberation Sans" font-size="12" font-weight="normal" fill="#000" text-anchor="middle">7.4°</text>
<rect x="392" y="41" width="70" height="17" fill="#fff"/><rect x="392" y="41" width="69" height="16" fill="#808080"/><rect x="393" y="42" width="68" height="15" fill="#E0FFE0"/>
<text x="427" y="54" font-family="Liberation Sans" font-size="12" font-weight="normal" fill="#000" text-anchor="middle">7.7°</text>
<rect x="463" y="41" width="70" height="17" fill="#fff"/><rect x="463" y="41" width="69" height="16" fill="#808080"/><rect x="464" y="42" width="68" height="15" fill="#E0FFE0"/>
<text x="498" y="54" font-family="Liberation Sans" font-size="12" font-weight="normal" fill="#000" text-anchor="middle">8°</text>
<rect x="534" y="41" width="70" height="17" fill="#fff"/><rect x="534" y="41" width="69" height="16" fill="#808080"/><rect x="535" y="42" width="68" height="15" fill="#E0FFE0"/>
<text x="569" y="54" font-family="Liberation Sans" font-size="12" font-weight="normal" fill="#000" text-anchor="middle">7.1°</text>
<rect x="321" y="59" width="70" height="17" fill="#fff"/><rect x="321" y="59" width="69" height="16" fill="#808080"/><rect x="322" y="60" width="68" height="15" fill="#E0FFE0"/>
<text x="356" y="72" font-family="Liberation Sans" font-size="12" font-weight="normal" fill="#000" text-anchor="middle">34.6°</text>
<rect x="392" y="59" width="70" height="17" fill="#fff"/><rect x="392" y="59" width="69" height="16" fill="#808080"/><rect x="393" y="60" width="68" height="15" fill="#E0FFE0"/>
<text x="427" y="72" font-family="Liberation Sans" font-size="12" font-weight="normal" fill="#000" text-anchor="middle">35.3°</text>
<rect x="463" y="59" width="70" height="17" fill="#fff"/><rect x="463" y="59" width="69" height="16" fill="#808080"/><rect x="464" y="60" width="68" height="15" fill="#E0FFE0"/>
<text x="498" y="72" font-family="Liberation Sans" font-size="12" font-weight="normal" fill="#000" text-anchor="middle">35.8°</text>
<rect x="534" y="59" width="70" height="17" fill="#fff"/><rect x="534" y="59" width="69" height="16" fill="#808080"/><rect x="535" y="60" width="68" height="15" fill="#E0FFE0"/>
<text x="569" y="72" font-family="Liberation Sans" font-size="12" font-weight="normal" fill="#000" text-anchor="middle">34.7°</text>
</svg>
<div class="t" style="left:394px;top:700px;width:32px;text-align:center;font-size:9px;line-height:13px;top:701px">&lt;</div>
<div class="t" style="left:428px;top:700px;width:32px;text-align:center;font-size:9px;line-height:13px;top:701px">&gt;</div>
<div class="t" style="left:465px;top:700px;width:32px;text-align:center;font-size:9px;line-height:13px;top:701px">&lt;</div>
<div class="t" style="left:499px;top:700px;width:32px;text-align:center;font-size:9px;line-height:13px;top:701px">&gt;</div>
<div class="t" style="left:536px;top:700px;width:32px;text-align:center;font-size:9px;line-height:13px;top:701px">&lt;</div>
<div class="t" style="left:570px;top:700px;width:32px;text-align:center;font-size:9px;line-height:13px;top:701px">&gt;</div>
<div class="a" style="left:0px;top:718px;width:1024px;height:1px;background:#808080"></div>
<div class="a" style="left:0px;top:719px;width:1024px;height:1px;background:#fff"></div>
<div class="t" style="left:2px;top:724px;font-size:11px">Готов</div>
<div class="s" style="left:662px;top:722px;width:319px;height:16px;"></div>
<div class="t" style="left:664px;top:724px;font-size:11px">Полн. время: 00:00:01:727.260, Тек. время: 00:00:00:313.400</div>
<div class="s" style="left:983px;top:722px;width:40px;height:16px;"></div>
<div class="t" style="left:986px;top:724px;font-size:11px">1.69</div>
<div class="a" style="left:31px;top:725px;width:208px;height:17px;background:#FFFFE1;border:1px solid #000;z-index:5"></div>
<div class="t" style="left:33px;top:728px;font-size:11px;z-index:6;letter-spacing:0.15px">Начните работу с нажатия этой кнопки</div>
<div class="a" style="left:0px;top:738px;width:1024px;height:30px;background:#D4D0C8"></div>
<div class="a" style="left:0px;top:739px;width:1024px;height:1px;background:#fff"></div>
<div class="r" style="left:2px;top:743px;width:51px;height:22px;"></div>
<svg class="a" style="left:5px;top:746px" width="16" height="14" shape-rendering="auto"><path d="M1 2q3-2 6 0v5q-3-2-6 0z" fill="#F25022"/><path d="M8 2q3-2 6 0v5q-3-2-6 0z" fill="#7FBA00"/><path d="M1 8q3-2 6 0v5q-3-2-6 0z" fill="#00A4EF"/><path d="M8 8q3-2 6 0v5q-3-2-6 0z" fill="#FFB900"/></svg>
<div class="t" style="left:22px;top:746px;font-size:11px;font-weight:bold;line-height:14px">Пуск</div>
<div class="r" style="left:58px;top:743px;width:159px;height:22px;"></div>
<svg class="a" style="left:63px;top:745px" width="14" height="17" shape-rendering="auto"><path d="M1 2h8l3 2v12H1z" fill="#E8C860" stroke="#B09030" stroke-width="1"/><path d="M4 3l6 2v11l-6-2z" fill="#F8E8A0"/></svg>
<div class="t" style="left:81px;top:747px;font-size:11px;line-height:14px">C:\Documents and Settin...</div>
<div class="a chk" style="left:222px;top:743px;width:159px;height:22px;box-shadow:inset 1px 1px #000,inset -1px -1px #fff,inset 2px 2px #808080"></div>
<svg class="a" style="left:226px;top:746px" width="16" height="16" shape-rendering="crispEdges"><rect x="0" y="0" width="16" height="16" fill="#404040"/><rect x="2" y="2" width="12" height="12" fill="#00E000"/><polyline points="2,7 4,7 4,4 7,4 7,7 10,7 10,4 13,4" fill="none" stroke="#006000"/><path d="M3 12v-2M5 12v-2M7 12v-2M9 12v-2M11 12v-2M13 12v-2" stroke="#006000"/></svg>
<div class="t" style="left:246px;top:747px;font-size:11px;font-weight:bold;line-height:14px">USB Осциллограф - C...</div>
<div class="a" style="left:920px;top:746px;width:17px;height:16px;background:#0A246A"></div>
<div class="t" style="left:920px;top:747px;width:17px;text-align:center;color:#fff;font-size:11px;line-height:14px">RU</div>
<div class="a" style="left:940px;top:743px;width:1px;height:24px;background:#808080"></div>
<div class="a" style="left:941px;top:743px;width:1px;height:24px;background:#fff"></div>
<div class="s" style="left:945px;top:742px;width:77px;height:24px;"></div>
<div class="t" style="left:949px;top:747px;font-size:13px;font-weight:bold;line-height:14px">«</div>
<svg class="a" style="left:963px;top:746px" width="18" height="16" shape-rendering="auto"><rect x="5" y="1" width="11" height="9" fill="#909090" stroke="#606060"/><rect x="1" y="4" width="10" height="8" fill="#A0A0A0" stroke="#505050"/><path d="M4 14h5M6 12v2" stroke="#505050"/></svg>
<div class="t" style="left:986px;top:747px;font-size:11px;line-height:14px">13:56</div>
<svg width="890" height="567" style="position:absolute;left:134px;top:62px" shape-rendering="crispEdges">
<rect x="0" y="0" width="890" height="1" fill="#808080"/>
<rect x="0" y="0" width="1" height="567" fill="#808080"/>
<rect x="1" y="1" width="888" height="1" fill="#404040"/>
<rect x="1" y="1" width="1" height="565" fill="#404040"/>
<rect x="1" y="2" width="871" height="548" fill="#000"/>
<path d="M26 6h1v1h-1zM26 11h1v1h-1zM26 16h1v1h-1zM26 21h1v1h-1zM26 26h1v1h-1zM26 31h1v1h-1zM26 36h1v1h-1zM26 41h1v1h-1zM26 46h1v1h-1zM26 51h1v1h-1zM26 56h1v1h-1zM26 61h1v1h-1zM26 66h1v1h-1zM26 71h1v1h-1zM26 76h1v1h-1zM26 81h1v1h-1zM26 86h1v1h-1zM26 91h1v1h-1zM26 96h1v1h-1zM26 101h1v1h-1zM26 106h1v1h-1zM26 111h1v1h-1zM26 116h1v1h-1zM26 121h1v1h-1zM26 126h1v1h-1zM26 131h1v1h-1zM26 136h1v1h-1zM26 141h1v1h-1zM26 146h1v1h-1zM26 151h1v1h-1zM26 156h1v1h-1zM26 161h1v1h-1zM26 166h1v1h-1zM26 171h1v1h-1zM26 176h1v1h-1zM26 181h1v1h-1zM26 186h1v1h-1zM26 191h1v1h-1zM26 196h1v1h-1zM26 201h1v1h-1zM26 206h1v1h-1zM26 211h1v1h-1zM26 216h1v1h-1zM26 221h1v1h-1zM26 226h1v1h-1zM26 231h1v1h-1zM26 236h1v1h-1zM26 241h1v1h-1zM26 246h1v1h-1zM26 251h1v1h-1zM26 256h1v1h-1zM26 261h1v1h-1zM26 266h1v1h-1zM26 271h1v1h-1zM26 276h1v1h-1zM26 281h1v1h-1zM26 286h1v1h-1zM26 291h1v1h-1zM26 296h1v1h-1zM26 301h1v1h-1zM26 306h1v1h-1zM26 311h1v1h-1zM26 316h1v1h-1zM26 321h1v1h-1zM26 326h1v1h-1zM26 331h1v1h-1zM26 336h1v1h-1zM26 341h1v1h-1zM26 346h1v1h-1zM26 351h1v1h-1zM26 356h1v1h-1zM26 361h1v1h-1zM26 366h1v1h-1zM26 371h1v1h-1zM26 376h1v1h-1zM26 381h1v1h-1zM26 386h1v1h-1zM26 391h1v1h-1zM26 396h1v1h-1zM26 401h1v1h-1zM26 406h1v1h-1zM26 411h1v1h-1zM26 416h1v1h-1zM26 421h1v1h-1zM26 426h1v1h-1zM26 431h1v1h-1zM26 436h1v1h-1zM26 441h1v1h-1zM26 446h1v1h-1zM26 451h1v1h-1zM26 456h1v1h-1zM26 461h1v1h-1zM26 466h1v1h-1zM26 471h1v1h-1zM26 476h1v1h-1zM26 481h1v1h-1zM26 486h1v1h-1zM26 491h1v1h-1zM26 496h1v1h-1zM26 501h1v1h-1zM51 6h1v1h-1zM51 11h1v1h-1zM51 16h1v1h-1zM51 21h1v1h-1zM51 26h1v1h-1zM51 31h1v1h-1zM51 36h1v1h-1zM51 41h1v1h-1zM51 46h1v1h-1zM51 51h1v1h-1zM51 56h1v1h-1zM51 61h1v1h-1zM51 66h1v1h-1zM51 71h1v1h-1zM51 76h1v1h-1zM51 81h1v1h-1zM51 86h1v1h-1zM51 91h1v1h-1zM51 96h1v1h-1zM51 101h1v1h-1zM51 106h1v1h-1zM51 111h1v1h-1zM51 116h1v1h-1zM51 121h1v1h-1zM51 126h1v1h-1zM51 131h1v1h-1zM51 136h1v1h-1zM51 141h1v1h-1zM51 146h1v1h-1zM51 151h1v1h-1zM51 156h1v1h-1zM51 161h1v1h-1zM51 166h1v1h-1zM51 171h1v1h-1zM51 176h1v1h-1zM51 181h1v1h-1zM51 186h1v1h-1zM51 191h1v1h-1zM51 196h1v1h-1zM51 201h1v1h-1zM51 206h1v1h-1zM51 211h1v1h-1zM51 216h1v1h-1zM51 221h1v1h-1zM51 226h1v1h-1zM51 231h1v1h-1zM51 236h1v1h-1zM51 241h1v1h-1zM51 246h1v1h-1zM51 251h1v1h-1zM51 256h1v1h-1zM51 261h1v1h-1zM51 266h1v1h-1zM51 271h1v1h-1zM51 276h1v1h-1zM51 281h1v1h-1zM51 286h1v1h-1zM51 291h1v1h-1zM51 296h1v1h-1zM51 301h1v1h-1zM51 306h1v1h-1zM51 311h1v1h-1zM51 316h1v1h-1zM51 321h1v1h-1zM51 326h1v1h-1zM51 331h1v1h-1zM51 336h1v1h-1zM51 341h1v1h-1zM51 346h1v1h-1zM51 351h1v1h-1zM51 356h1v1h-1zM51 361h1v1h-1zM51 366h1v1h-1zM51 371h1v1h-1zM51 376h1v1h-1zM51 381h1v1h-1zM51 386h1v1h-1zM51 391h1v1h-1zM51 396h1v1h-1zM51 401h1v1h-1zM51 406h1v1h-1zM51 411h1v1h-1zM51 416h1v1h-1zM51 421h1v1h-1zM51 426h1v1h-1zM51 431h1v1h-1zM51 436h1v1h-1zM51 441h1v1h-1zM51 446h1v1h-1zM51 451h1v1h-1zM51 456h1v1h-1zM51 461h1v1h-1zM51 466h1v1h-1zM51 471h1v1h-1zM51 476h1v1h-1zM51 481h1v1h-1zM51 486h1v1h-1zM51 491h1v1h-1zM51 496h1v1h-1zM51 501h1v1h-1zM76 6h1v1h-1zM76 11h1v1h-1zM76 16h1v1h-1zM76 21h1v1h-1zM76 26h1v1h-1zM76 31h1v1h-1zM76 36h1v1h-1zM76 41h1v1h-1zM76 46h1v1h-1zM76 51h1v1h-1zM76 56h1v1h-1zM76 61h1v1h-1zM76 66h1v1h-1zM76 71h1v1h-1zM76 76h1v1h-1zM76 81h1v1h-1zM76 86h1v1h-1zM76 91h1v1h-1zM76 96h1v1h-1zM76 101h1v1h-1zM76 106h1v1h-1zM76 111h1v1h-1zM76 116h1v1h-1zM76 121h1v1h-1zM76 126h1v1h-1zM76 131h1v1h-1zM76 136h1v1h-1zM76 141h1v1h-1zM76 146h1v1h-1zM76 151h1v1h-1zM76 156h1v1h-1zM76 161h1v1h-1zM76 166h1v1h-1zM76 171h1v1h-1zM76 176h1v1h-1zM76 181h1v1h-1zM76 186h1v1h-1zM76 191h1v1h-1zM76 196h1v1h-1zM76 201h1v1h-1zM76 206h1v1h-1zM76 211h1v1h-1zM76 216h1v1h-1zM76 221h1v1h-1zM76 226h1v1h-1zM76 231h1v1h-1zM76 236h1v1h-1zM76 241h1v1h-1zM76 246h1v1h-1zM76 251h1v1h-1zM76 256h1v1h-1zM76 261h1v1h-1zM76 266h1v1h-1zM76 271h1v1h-1zM76 276h1v1h-1zM76 281h1v1h-1zM76 286h1v1h-1zM76 291h1v1h-1zM76 296h1v1h-1zM76 301h1v1h-1zM76 306h1v1h-1zM76 311h1v1h-1zM76 316h1v1h-1zM76 321h1v1h-1zM76 326h1v1h-1zM76 331h1v1h-1zM76 336h1v1h-1zM76 341h1v1h-1zM76 346h1v1h-1zM76 351h1v1h-1zM76 356h1v1h-1zM76 361h1v1h-1zM76 366h1v1h-1zM76 371h1v1h-1zM76 376h1v1h-1zM76 381h1v1h-1zM76 386h1v1h-1zM76 391h1v1h-1zM76 396h1v1h-1zM76 401h1v1h-1zM76 406h1v1h-1zM76 411h1v1h-1zM76 416h1v1h-1zM76 421h1v1h-1zM76 426h1v1h-1zM76 431h1v1h-1zM76 436h1v1h-1zM76 441h1v1h-1zM76 446h1v1h-1zM76 451h1v1h-1zM76 456h1v1h-1zM76 461h1v1h-1zM76 466h1v1h-1zM76 471h1v1h-1zM76 476h1v1h-1zM76 481h1v1h-1zM76 486h1v1h-1zM76 491h1v1h-1zM76 496h1v1h-1zM76 501h1v1h-1zM101 6h1v1h-1zM101 11h1v1h-1zM101 16h1v1h-1zM101 21h1v1h-1zM101 26h1v1h-1zM101 31h1v1h-1zM101 36h1v1h-1zM101 41h1v1h-1zM101 46h1v1h-1zM101 51h1v1h-1zM101 56h1v1h-1zM101 61h1v1h-1zM101 66h1v1h-1zM101 71h1v1h-1zM101 76h1v1h-1zM101 81h1v1h-1zM101 86h1v1h-1zM101 91h1v1h-1zM101 96h1v1h-1zM101 101h1v1h-1zM101 106h1v1h-1zM101 111h1v1h-1zM101 116h1v1h-1zM101 121h1v1h-1zM101 126h1v1h-1zM101 131h1v1h-1zM101 136h1v1h-1zM101 141h1v1h-1zM101 146h1v1h-1zM101 151h1v1h-1zM101 156h1v1h-1zM101 161h1v1h-1zM101 166h1v1h-1zM101 171h1v1h-1zM101 176h1v1h-1zM101 181h1v1h-1zM101 186h1v1h-1zM101 191h1v1h-1zM101 196h1v1h-1zM101 201h1v1h-1zM101 206h1v1h-1zM101 211h1v1h-1zM101 216h1v1h-1zM101 221h1v1h-1zM101 226h1v1h-1zM101 231h1v1h-1zM101 236h1v1h-1zM101 241h1v1h-1zM101 246h1v1h-1zM101 251h1v1h-1zM101 256h1v1h-1zM101 261h1v1h-1zM101 266h1v1h-1zM101 271h1v1h-1zM101 276h1v1h-1zM101 281h1v1h-1zM101 286h1v1h-1zM101 291h1v1h-1zM101 296h1v1h-1zM101 301h1v1h-1zM101 306h1v1h-1zM101 311h1v1h-1zM101 316h1v1h-1zM101 321h1v1h-1zM101 326h1v1h-1zM101 331h1v1h-1zM101 336h1v1h-1zM101 341h1v1h-1zM101 346h1v1h-1zM101 351h1v1h-1zM101 356h1v1h-1zM101 361h1v1h-1zM101 366h1v1h-1zM101 371h1v1h-1zM101 376h1v1h-1zM101 381h1v1h-1zM101 386h1v1h-1zM101 391h1v1h-1zM101 396h1v1h-1zM101 401h1v1h-1zM101 406h1v1h-1zM101 411h1v1h-1zM101 416h1v1h-1zM101 421h1v1h-1zM101 426h1v1h-1zM101 431h1v1h-1zM101 436h1v1h-1zM101 441h1v1h-1zM101 446h1v1h-1zM101 451h1v1h-1zM101 456h1v1h-1zM101 461h1v1h-1zM101 466h1v1h-1zM101 471h1v1h-1zM101 476h1v1h-1zM101 481h1v1h-1zM101 486h1v1h-1zM101 491h1v1h-1zM101 496h1v1h-1zM101 501h1v1h-1zM126 6h1v1h-1zM126 11h1v1h-1zM126 16h1v1h-1zM126 21h1v1h-1zM126 26h1v1h-1zM126 31h1v1h-1zM126 36h1v1h-1zM126 41h1v1h-1zM126 46h1v1h-1zM126 51h1v1h-1zM126 56h1v1h-1zM126 61h1v1h-1zM126 66h1v1h-1zM126 71h1v1h-1zM126 76h1v1h-1zM126 81h1v1h-1zM126 86h1v1h-1zM126 91h1v1h-1zM126 96h1v1h-1zM126 101h1v1h-1zM126 106h1v1h-1zM126 111h1v1h-1zM126 116h1v1h-1zM126 121h1v1h-1zM126 126h1v1h-1zM126 131h1v1h-1zM126 136h1v1h-1zM126 141h1v1h-1zM126 146h1v1h-1zM126 151h1v1h-1zM126 156h1v1h-1zM126 161h1v1h-1zM126 166h1v1h-1zM126 171h1v1h-1zM126 176h1v1h-1zM126 181h1v1h-1zM126 186h1v1h-1zM126 191h1v1h-1zM126 196h1v1h-1zM126 201h1v1h-1zM126 206h1v1h-1zM126 211h1v1h-1zM126 216h1v1h-1zM126 221h1v1h-1zM126 226h1v1h-1zM126 231h1v1h-1zM126 236h1v1h-1zM126 241h1v1h-1zM126 246h1v1h-1zM126 251h1v1h-1zM126 256h1v1h-1zM126 261h1v1h-1zM126 266h1v1h-1zM126 271h1v1h-1zM126 276h1v1h-1zM126 281h1v1h-1zM126 286h1v1h-1zM126 291h1v1h-1zM126 296h1v1h-1zM126 301h1v1h-1zM126 306h1v1h-1zM126 311h1v1h-1zM126 316h1v1h-1zM126 321h1v1h-1zM126 326h1v1h-1zM126 331h1v1h-1zM126 336h1v1h-1zM126 341h1v1h-1zM126 346h1v1h-1zM126 351h1v1h-1zM126 356h1v1h-1zM126 361h1v1h-1zM126 366h1v1h-1zM126 371h1v1h-1zM126 376h1v1h-1zM126 381h1v1h-1zM126 386h1v1h-1zM126 391h1v1h-1zM126 396h1v1h-1zM126 401h1v1h-1zM126 406h1v1h-1zM126 411h1v1h-1zM126 416h1v1h-1zM126 421h1v1h-1zM126 426h1v1h-1zM126 431h1v1h-1zM126 436h1v1h-1zM126 441h1v1h-1zM126 446h1v1h-1zM126 451h1v1h-1zM126 456h1v1h-1zM126 461h1v1h-1zM126 466h1v1h-1zM126 471h1v1h-1zM126 476h1v1h-1zM126 481h1v1h-1zM126 486h1v1h-1zM126 491h1v1h-1zM126 496h1v1h-1zM126 501h1v1h-1zM151 6h1v1h-1zM151 11h1v1h-1zM151 16h1v1h-1zM151 21h1v1h-1zM151 26h1v1h-1zM151 31h1v1h-1zM151 36h1v1h-1zM151 41h1v1h-1zM151 46h1v1h-1zM151 51h1v1h-1zM151 56h1v1h-1zM151 61h1v1h-1zM151 66h1v1h-1zM151 71h1v1h-1zM151 76h1v1h-1zM151 81h1v1h-1zM151 86h1v1h-1zM151 91h1v1h-1zM151 96h1v1h-1zM151 101h1v1h-1zM151 106h1v1h-1zM151 111h1v1h-1zM151 116h1v1h-1zM151 121h1v1h-1zM151 126h1v1h-1zM151 131h1v1h-1zM151 136h1v1h-1zM151 141h1v1h-1zM151 146h1v1h-1zM151 151h1v1h-1zM151 156h1v1h-1zM151 161h1v1h-1zM151 166h1v1h-1zM151 171h1v1h-1zM151 176h1v1h-1zM151 181h1v1h-1zM151 186h1v1h-1zM151 191h1v1h-1zM151 196h1v1h-1zM151 201h1v1h-1zM151 206h1v1h-1zM151 211h1v1h-1zM151 216h1v1h-1zM151 221h1v1h-1zM151 226h1v1h-1zM151 231h1v1h-1zM151 236h1v1h-1zM151 241h1v1h-1zM151 246h1v1h-1zM151 251h1v1h-1zM151 256h1v1h-1zM151 261h1v1h-1zM151 266h1v1h-1zM151 271h1v1h-1zM151 276h1v1h-1zM151 281h1v1h-1zM151 286h1v1h-1zM151 291h1v1h-1zM151 296h1v1h-1zM151 301h1v1h-1zM151 306h1v1h-1zM151 311h1v1h-1zM151 316h1v1h-1zM151 321h1v1h-1zM151 326h1v1h-1zM151 331h1v1h-1zM151 336h1v1h-1zM151 341h1v1h-1zM151 346h1v1h-1zM151 351h1v1h-1zM151 356h1v1h-1zM151 361h1v1h-1zM151 366h1v1h-1zM151 371h1v1h-1zM151 376h1v1h-1zM151 381h1v1h-1zM151 386h1v1h-1zM151 391h1v1h-1zM151 396h1v1h-1zM151 401h1v1h-1zM151 406h1v1h-1zM151 411h1v1h-1zM151 416h1v1h-1zM151 421h1v1h-1zM151 426h1v1h-1zM151 431h1v1h-1zM151 436h1v1h-1zM151 441h1v1h-1zM151 446h1v1h-1zM151 451h1v1h-1zM151 456h1v1h-1zM151 461h1v1h-1zM151 466h1v1h-1zM151 471h1v1h-1zM151 476h1v1h-1zM151 481h1v1h-1zM151 486h1v1h-1zM151 491h1v1h-1zM151 496h1v1h-1zM151 501h1v1h-1zM176 6h1v1h-1zM176 11h1v1h-1zM176 16h1v1h-1zM176 21h1v1h-1zM176 26h1v1h-1zM176 31h1v1h-1zM176 36h1v1h-1zM176 41h1v1h-1zM176 46h1v1h-1zM176 51h1v1h-1zM176 56h1v1h-1zM176 61h1v1h-1zM176 66h1v1h-1zM176 71h1v1h-1zM176 76h1v1h-1zM176 81h1v1h-1zM176 86h1v1h-1zM176 91h1v1h-1zM176 96h1v1h-1zM176 101h1v1h-1zM176 106h1v1h-1zM176 111h1v1h-1zM176 116h1v1h-1zM176 121h1v1h-1zM176 126h1v1h-1zM176 131h1v1h-1zM176 136h1v1h-1zM176 141h1v1h-1zM176 146h1v1h-1zM176 151h1v1h-1zM176 156h1v1h-1zM176 161h1v1h-1zM176 166h1v1h-1zM176 171h1v1h-1zM176 176h1v1h-1zM176 181h1v1h-1zM176 186h1v1h-1zM176 191h1v1h-1zM176 196h1v1h-1zM176 201h1v1h-1zM176 206h1v1h-1zM176 211h1v1h-1zM176 216h1v1h-1zM176 221h1v1h-1zM176 226h1v1h-1zM176 231h1v1h-1zM176 236h1v1h-1zM176 241h1v1h-1zM176 246h1v1h-1zM176 251h1v1h-1zM176 256h1v1h-1zM176 261h1v1h-1zM176 266h1v1h-1zM176 271h1v1h-1zM176 276h1v1h-1zM176 281h1v1h-1zM176 286h1v1h-1zM176 291h1v1h-1zM176 296h1v1h-1zM176 301h1v1h-1zM176 306h1v1h-1zM176 311h1v1h-1zM176 316h1v1h-1zM176 321h1v1h-1zM176 326h1v1h-1zM176 331h1v1h-1zM176 336h1v1h-1zM176 341h1v1h-1zM176 346h1v1h-1zM176 351h1v1h-1zM176 356h1v1h-1zM176 361h1v1h-1zM176 366h1v1h-1zM176 371h1v1h-1zM176 376h1v1h-1zM176 381h1v1h-1zM176 386h1v1h-1zM176 391h1v1h-1zM176 396h1v1h-1zM176 401h1v1h-1zM176 406h1v1h-1zM176 411h1v1h-1zM176 416h1v1h-1zM176 421h1v1h-1zM176 426h1v1h-1zM176 431h1v1h-1zM176 436h1v1h-1zM176 441h1v1h-1zM176 446h1v1h-1zM176 451h1v1h-1zM176 456h1v1h-1zM176 461h1v1h-1zM176 466h1v1h-1zM176 471h1v1h-1zM176 476h1v1h-1zM176 481h1v1h-1zM176 486h1v1h-1zM176 491h1v1h-1zM176 496h1v1h-1zM176 501h1v1h-1zM201 6h1v1h-1zM201 11h1v1h-1zM201 16h1v1h-1zM201 21h1v1h-1zM201 26h1v1h-1zM201 31h1v1h-1zM201 36h1v1h-1zM201 41h1v1h-1zM201 46h1v1h-1zM201 51h1v1h-1zM201 56h1v1h-1zM201 61h1v1h-1zM201 66h1v1h-1zM201 71h1v1h-1zM201 76h1v1h-1zM201 81h1v1h-1zM201 86h1v1h-1zM201 91h1v1h-1zM201 96h1v1h-1zM201 101h1v1h-1zM201 106h1v1h-1zM201 111h1v1h-1zM201 116h1v1h-1zM201 121h1v1h-1zM201 126h1v1h-1zM201 131h1v1h-1zM201 136h1v1h-1zM201 141h1v1h-1zM201 146h1v1h-1zM201 151h1v1h-1zM201 156h1v1h-1zM201 161h1v1h-1zM201 166h1v1h-1zM201 171h1v1h-1zM201 176h1v1h-1zM201 181h1v1h-1zM201 186h1v1h-1zM201 191h1v1h-1zM201 196h1v1h-1zM201 201h1v1h-1zM201 206h1v1h-1zM201 211h1v1h-1zM201 216h1v1h-1zM201 221h1v1h-1zM201 226h1v1h-1zM201 231h1v1h-1zM201 236h1v1h-1zM201 241h1v1h-1zM201 246h1v1h-1zM201 251h1v1h-1zM201 256h1v1h-1zM201 261h1v1h-1zM201 266h1v1h-1zM201 271h1v1h-1zM201 276h1v1h-1zM201 281h1v1h-1zM201 286h1v1h-1zM201 291h1v1h-1zM201 296h1v1h-1zM201 301h1v1h-1zM201 306h1v1h-1zM201 311h1v1h-1zM201 316h1v1h-1zM201 321h1v1h-1zM201 326h1v1h-1zM201 331h1v1h-1zM201 336h1v1h-1zM201 341h1v1h-1zM201 346h1v1h-1zM201 351h1v1h-1zM201 356h1v1h-1zM201 361h1v1h-1zM201 366h1v1h-1zM201 371h1v1h-1zM201 376h1v1h-1zM201 381h1v1h-1zM201 386h1v1h-1zM201 391h1v1h-1zM201 396h1v1h-1zM201 401h1v1h-1zM201 406h1v1h-1zM201 411h1v1h-1zM201 416h1v1h-1zM201 421h1v1h-1zM201 426h1v1h-1zM201 431h1v1h-1zM201 436h1v1h-1zM201 441h1v1h-1zM201 446h1v1h-1zM201 451h1v1h-1zM201 456h1v1h-1zM201 461h1v1h-1zM201 466h1v1h-1zM201 471h1v1h-1zM201 476h1v1h-1zM201 481h1v1h-1zM201 486h1v1h-1zM201 491h1v1h-1zM201 496h1v1h-1zM201 501h1v1h-1zM226 6h1v1h-1zM226 11h1v1h-1zM226 16h1v1h-1zM226 21h1v1h-1zM226 26h1v1h-1zM226 31h1v1h-1zM226 36h1v1h-1zM226 41h1v1h-1zM226 46h1v1h-1zM226 51h1v1h-1zM226 56h1v1h-1zM226 61h1v1h-1zM226 66h1v1h-1zM226 71h1v1h-1zM226 76h1v1h-1zM226 81h1v1h-1zM226 86h1v1h-1zM226 91h1v1h-1zM226 96h1v1h-1zM226 101h1v1h-1zM226 106h1v1h-1zM226 111h1v1h-1zM226 116h1v1h-1zM226 121h1v1h-1zM226 126h1v1h-1zM226 131h1v1h-1zM226 136h1v1h-1zM226 141h1v1h-1zM226 146h1v1h-1zM226 151h1v1h-1zM226 156h1v1h-1zM226 161h1v1h-1zM226 166h1v1h-1zM226 171h1v1h-1zM226 176h1v1h-1zM226 181h1v1h-1zM226 186h1v1h-1zM226 191h1v1h-1zM226 196h1v1h-1zM226 201h1v1h-1zM226 206h1v1h-1zM226 211h1v1h-1zM226 216h1v1h-1zM226 221h1v1h-1zM226 226h1v1h-1zM226 231h1v1h-1zM226 236h1v1h-1zM226 241h1v1h-1zM226 246h1v1h-1zM226 251h1v1h-1zM226 256h1v1h-1zM226 261h1v1h-1zM226 266h1v1h-1zM226 271h1v1h-1zM226 276h1v1h-1zM226 281h1v1h-1zM226 286h1v1h-1zM226 291h1v1h-1zM226 296h1v1h-1zM226 301h1v1h-1zM226 306h1v1h-1zM226 311h1v1h-1zM226 316h1v1h-1zM226 321h1v1h-1zM226 326h1v1h-1zM226 331h1v1h-1zM226 336h1v1h-1zM226 341h1v1h-1zM226 346h1v1h-1zM226 351h1v1h-1zM226 356h1v1h-1zM226 361h1v1h-1zM226 366h1v1h-1zM226 371h1v1h-1zM226 376h1v1h-1zM226 381h1v1h-1zM226 386h1v1h-1zM226 391h1v1h-1zM226 396h1v1h-1zM226 401h1v1h-1zM226 406h1v1h-1zM226 411h1v1h-1zM226 416h1v1h-1zM226 421h1v1h-1zM226 426h1v1h-1zM226 431h1v1h-1zM226 436h1v1h-1zM226 441h1v1h-1zM226 446h1v1h-1zM226 451h1v1h-1zM226 456h1v1h-1zM226 461h1v1h-1zM226 466h1v1h-1zM226 471h1v1h-1zM226 476h1v1h-1zM226 481h1v1h-1zM226 486h1v1h-1zM226 491h1v1h-1zM226 496h1v1h-1zM226 501h1v1h-1zM251 6h1v1h-1zM251 11h1v1h-1zM251 16h1v1h-1zM251 21h1v1h-1zM251 26h1v1h-1zM251 31h1v1h-1zM251 36h1v1h-1zM251 41h1v1h-1zM251 46h1v1h-1zM251 51h1v1h-1zM251 56h1v1h-1zM251 61h1v1h-1zM251 66h1v1h-1zM251 71h1v1h-1zM251 76h1v1h-1zM251 81h1v1h-1zM251 86h1v1h-1zM251 91h1v1h-1zM251 96h1v1h-1zM251 101h1v1h-1zM251 106h1v1h-1zM251 111h1v1h-1zM251 116h1v1h-1zM251 121h1v1h-1zM251 126h1v1h-1zM251 131h1v1h-1zM251 136h1v1h-1zM251 141h1v1h-1zM251 146h1v1h-1zM251 151h1v1h-1zM251 156h1v1h-1zM251 161h1v1h-1zM251 166h1v1h-1zM251 171h1v1h-1zM251 176h1v1h-1zM251 181h1v1h-1zM251 186h1v1h-1zM251 191h1v1h-1zM251 196h1v1h-1zM251 201h1v1h-1zM251 206h1v1h-1zM251 211h1v1h-1zM251 216h1v1h-1zM251 221h1v1h-1zM251 226h1v1h-1zM251 231h1v1h-1zM251 236h1v1h-1zM251 241h1v1h-1zM251 246h1v1h-1zM251 251h1v1h-1zM251 256h1v1h-1zM251 261h1v1h-1zM251 266h1v1h-1zM251 271h1v1h-1zM251 276h1v1h-1zM251 281h1v1h-1zM251 286h1v1h-1zM251 291h1v1h-1zM251 296h1v1h-1zM251 301h1v1h-1zM251 306h1v1h-1zM251 311h1v1h-1zM251 316h1v1h-1zM251 321h1v1h-1zM251 326h1v1h-1zM251 331h1v1h-1zM251 336h1v1h-1zM251 341h1v1h-1zM251 346h1v1h-1zM251 351h1v1h-1zM251 356h1v1h-1zM251 361h1v1h-1zM251 366h1v1h-1zM251 371h1v1h-1zM251 376h1v1h-1zM251 381h1v1h-1zM251 386h1v1h-1zM251 391h1v1h-1zM251 396h1v1h-1zM251 401h1v1h-1zM251 406h1v1h-1zM251 411h1v1h-1zM251 416h1v1h-1zM251 421h1v1h-1zM251 426h1v1h-1zM251 431h1v1h-1zM251 436h1v1h-1zM251 441h1v1h-1zM251 446h1v1h-1zM251 451h1v1h-1zM251 456h1v1h-1zM251 461h1v1h-1zM251 466h1v1h-1zM251 471h1v1h-1zM251 476h1v1h-1zM251 481h1v1h-1zM251 486h1v1h-1zM251 491h1v1h-1zM251 496h1v1h-1zM251 501h1v1h-1zM276 6h1v1h-1zM276 11h1v1h-1zM276 16h1v1h-1zM276 21h1v1h-1zM276 26h1v1h-1zM276 31h1v1h-1zM276 36h1v1h-1zM276 41h1v1h-1zM276 46h1v1h-1zM276 51h1v1h-1zM276 56h1v1h-1zM276 61h1v1h-1zM276 66h1v1h-1zM276 71h1v1h-1zM276 76h1v1h-1zM276 81h1v1h-1zM276 86h1v1h-1zM276 91h1v1h-1zM276 96h1v1h-1zM276 101h1v1h-1zM276 106h1v1h-1zM276 111h1v1h-1zM276 116h1v1h-1zM276 121h1v1h-1zM276 126h1v1h-1zM276 131h1v1h-1zM276 136h1v1h-1zM276 141h1v1h-1zM276 146h1v1h-1zM276 151h1v1h-1zM276 156h1v1h-1zM276 161h1v1h-1zM276 166h1v1h-1zM276 171h1v1h-1zM276 176h1v1h-1zM276 181h1v1h-1zM276 186h1v1h-1zM276 191h1v1h-1zM276 196h1v1h-1zM276 201h1v1h-1zM276 206h1v1h-1zM276 211h1v1h-1zM276 216h1v1h-1zM276 221h1v1h-1zM276 226h1v1h-1zM276 231h1v1h-1zM276 236h1v1h-1zM276 241h1v1h-1zM276 246h1v1h-1zM276 251h1v1h-1zM276 256h1v1h-1zM276 261h1v1h-1zM276 266h1v1h-1zM276 271h1v1h-1zM276 276h1v1h-1zM276 281h1v1h-1zM276 286h1v1h-1zM276 291h1v1h-1zM276 296h1v1h-1zM276 301h1v1h-1zM276 306h1v1h-1zM276 311h1v1h-1zM276 316h1v1h-1zM276 321h1v1h-1zM276 326h1v1h-1zM276 331h1v1h-1zM276 336h1v1h-1zM276 341h1v1h-1zM276 346h1v1h-1zM276 351h1v1h-1zM276 356h1v1h-1zM276 361h1v1h-1zM276 366h1v1h-1zM276 371h1v1h-1zM276 376h1v1h-1zM276 381h1v1h-1zM276 386h1v1h-1zM276 391h1v1h-1zM276 396h1v1h-1zM276 401h1v1h-1zM276 406h1v1h-1zM276 411h1v1h-1zM276 416h1v1h-1zM276 421h1v1h-1zM276 426h1v1h-1zM276 431h1v1h-1zM276 436h1v1h-1zM276 441h1v1h-1zM276 446h1v1h-1zM276 451h1v1h-1zM276 456h1v1h-1zM276 461h1v1h-1zM276 466h1v1h-1zM276 471h1v1h-1zM276 476h1v1h-1zM276 481h1v1h-1zM276 486h1v1h-1zM276 491h1v1h-1zM276 496h1v1h-1zM276 501h1v1h-1zM301 6h1v1h-1zM301 11h1v1h-1zM301 16h1v1h-1zM301 21h1v1h-1zM301 26h1v1h-1zM301 31h1v1h-1zM301 36h1v1h-1zM301 41h1v1h-1zM301 46h1v1h-1zM301 51h1v1h-1zM301 56h1v1h-1zM301 61h1v1h-1zM301 66h1v1h-1zM301 71h1v1h-1zM301 76h1v1h-1zM301 81h1v1h-1zM301 86h1v1h-1zM301 91h1v1h-1zM301 96h1v1h-1zM301 101h1v1h-1zM301 106h1v1h-1zM301 111h1v1h-1zM301 116h1v1h-1zM301 121h1v1h-1zM301 126h1v1h-1zM301 131h1v1h-1zM301 136h1v1h-1zM301 141h1v1h-1zM301 146h1v1h-1zM301 151h1v1h-1zM301 156h1v1h-1zM301 161h1v1h-1zM301 166h1v1h-1zM301 171h1v1h-1zM301 176h1v1h-1zM301 181h1v1h-1zM301 186h1v1h-1zM301 191h1v1h-1zM301 196h1v1h-1zM301 201h1v1h-1zM301 206h1v1h-1zM301 211h1v1h-1zM301 216h1v1h-1zM301 221h1v1h-1zM301 226h1v1h-1zM301 231h1v1h-1zM301 236h1v1h-1zM301 241h1v1h-1zM301 246h1v1h-1zM301 251h1v1h-1zM301 256h1v1h-1zM301 261h1v1h-1zM301 266h1v1h-1zM301 271h1v1h-1zM301 276h1v1h-1zM301 281h1v1h-1zM301 286h1v1h-1zM301 291h1v1h-1zM301 296h1v1h-1zM301 301h1v1h-1zM301 306h1v1h-1zM301 311h1v1h-1zM301 316h1v1h-1zM301 321h1v1h-1zM301 326h1v1h-1zM301 331h1v1h-1zM301 336h1v1h-1zM301 341h1v1h-1zM301 346h1v1h-1zM301 351h1v1h-1zM301 356h1v1h-1zM301 361h1v1h-1zM301 366h1v1h-1zM301 371h1v1h-1zM301 376h1v1h-1zM301 381h1v1h-1zM301 386h1v1h-1zM301 391h1v1h-1zM301 396h1v1h-1zM301 401h1v1h-1zM301 406h1v1h-1zM301 411h1v1h-1zM301 416h1v1h-1zM301 421h1v1h-1zM301 426h1v1h-1zM301 431h1v1h-1zM301 436h1v1h-1zM301 441h1v1h-1zM301 446h1v1h-1zM301 451h1v1h-1zM301 456h1v1h-1zM301 461h1v1h-1zM301 466h1v1h-1zM301 471h1v1h-1zM301 476h1v1h-1zM301 481h1v1h-1zM301 486h1v1h-1zM301 491h1v1h-1zM301 496h1v1h-1zM301 501h1v1h-1zM326 6h1v1h-1zM326 11h1v1h-1zM326 16h1v1h-1zM326 21h1v1h-1zM326 26h1v1h-1zM326 31h1v1h-1zM326 36h1v1h-1zM326 41h1v1h-1zM326 46h1v1h-1zM326 51h1v1h-1zM326 56h1v1h-1zM326 61h1v1h-1zM326 66h1v1h-1zM326 71h1v1h-1zM326 76h1v1h-1zM326 81h1v1h-1zM326 86h1v1h-1zM326 91h1v1h-1zM326 96h1v1h-1zM326 101h1v1h-1zM326 106h1v1h-1zM326 111h1v1h-1zM326 116h1v1h-1zM326 121h1v1h-1zM326 126h1v1h-1zM326 131h1v1h-1zM326 136h1v1h-1zM326 141h1v1h-1zM326 146h1v1h-1zM326 151h1v1h-1zM326 156h1v1h-1zM326 161h1v1h-1zM326 166h1v1h-1zM326 171h1v1h-1zM326 176h1v1h-1zM326 181h1v1h-1zM326 186h1v1h-1zM326 191h1v1h-1zM326 196h1v1h-1zM326 201h1v1h-1zM326 206h1v1h-1zM326 211h1v1h-1zM326 216h1v1h-1zM326 221h1v1h-1zM326 226h1v1h-1zM326 231h1v1h-1zM326 236h1v1h-1zM326 241h1v1h-1zM326 246h1v1h-1zM326 251h1v1h-1zM326 256h1v1h-1zM326 261h1v1h-1zM326 266h1v1h-1zM326 271h1v1h-1zM326 276h1v1h-1zM326 281h1v1h-1zM326 286h1v1h-1zM326 291h1v1h-1zM326 296h1v1h-1zM326 301h1v1h-1zM326 306h1v1h-1zM326 311h1v1h-1zM326 316h1v1h-1zM326 321h1v1h-1zM326 326h1v1h-1zM326 331h1v1h-1zM326 336h1v1h-1zM326 341h1v1h-1zM326 346h1v1h-1zM326 351h1v1h-1zM326 356h1v1h-1zM326 361h1v1h-1zM326 366h1v1h-1zM326 371h1v1h-1zM326 376h1v1h-1zM326 381h1v1h-1zM326 386h1v1h-1zM326 391h1v1h-1zM326 396h1v1h-1zM326 401h1v1h-1zM326 406h1v1h-1zM326 411h1v1h-1zM326 416h1v1h-1zM326 421h1v1h-1zM326 426h1v1h-1zM326 431h1v1h-1zM326 436h1v1h-1zM326 441h1v1h-1zM326 446h1v1h-1zM326 451h1v1h-1zM326 456h1v1h-1zM326 461h1v1h-1zM326 466h1v1h-1zM326 471h1v1h-1zM326 476h1v1h-1zM326 481h1v1h-1zM326 486h1v1h-1zM326 491h1v1h-1zM326 496h1v1h-1zM326 501h1v1h-1zM351 6h1v1h-1zM351 11h1v1h-1zM351 16h1v1h-1zM351 21h1v1h-1zM351 26h1v1h-1zM351 31h1v1h-1zM351 36h1v1h-1zM351 41h1v1h-1zM351 46h1v1h-1zM351 51h1v1h-1zM351 56h1v1h-1zM351 61h1v1h-1zM351 66h1v1h-1zM351 71h1v1h-1zM351 76h1v1h-1zM351 81h1v1h-1zM351 86h1v1h-1zM351 91h1v1h-1zM351 96h1v1h-1zM351 101h1v1h-1zM351 106h1v1h-1zM351 111h1v1h-1zM351 116h1v1h-1zM351 121h1v1h-1zM351 126h1v1h-1zM351 131h1v1h-1zM351 136h1v1h-1zM351 141h1v1h-1zM351 146h1v1h-1zM351 151h1v1h-1zM351 156h1v1h-1zM351 161h1v1h-1zM351 166h1v1h-1zM351 171h1v1h-1zM351 176h1v1h-1zM351 181h1v1h-1zM351 186h1v1h-1zM351 191h1v1h-1zM351 196h1v1h-1zM351 201h1v1h-1zM351 206h1v1h-1zM351 211h1v1h-1zM351 216h1v1h-1zM351 221h1v1h-1zM351 226h1v1h-1zM351 231h1v1h-1zM351 236h1v1h-1zM351 241h1v1h-1zM351 246h1v1h-1zM351 251h1v1h-1zM351 256h1v1h-1zM351 261h1v1h-1zM351 266h1v1h-1zM351 271h1v1h-1zM351 276h1v1h-1zM351 281h1v1h-1zM351 286h1v1h-1zM351 291h1v1h-1zM351 296h1v1h-1zM351 301h1v1h-1zM351 306h1v1h-1zM351 311h1v1h-1zM351 316h1v1h-1zM351 321h1v1h-1zM351 326h1v1h-1zM351 331h1v1h-1zM351 336h1v1h-1zM351 341h1v1h-1zM351 346h1v1h-1zM351 351h1v1h-1zM351 356h1v1h-1zM351 361h1v1h-1zM351 366h1v1h-1zM351 371h1v1h-1zM351 376h1v1h-1zM351 381h1v1h-1zM351 386h1v1h-1zM351 391h1v1h-1zM351 396h1v1h-1zM351 401h1v1h-1zM351 406h1v1h-1zM351 411h1v1h-1zM351 416h1v1h-1zM351 421h1v1h-1zM351 426h1v1h-1zM351 431h1v1h-1zM351 436h1v1h-1zM351 441h1v1h-1zM351 446h1v1h-1zM351 451h1v1h-1zM351 456h1v1h-1zM351 461h1v1h-1zM351 466h1v1h-1zM351 471h1v1h-1zM351 476h1v1h-1zM351 481h1v1h-1zM351 486h1v1h-1zM351 491h1v1h-1zM351 496h1v1h-1zM351 501h1v1h-1zM376 6h1v1h-1zM376 11h1v1h-1zM376 16h1v1h-1zM376 21h1v1h-1zM376 26h1v1h-1zM376 31h1v1h-1zM376 36h1v1h-1zM376 41h1v1h-1zM376 46h1v1h-1zM376 51h1v1h-1zM376 56h1v1h-1zM376 61h1v1h-1zM376 66h1v1h-1zM376 71h1v1h-1zM376 76h1v1h-1zM376 81h1v1h-1zM376 86h1v1h-1zM376 91h1v1h-1zM376 96h1v1h-1zM376 101h1v1h-1zM376 106h1v1h-1zM376 111h1v1h-1zM376 116h1v1h-1zM376 121h1v1h-1zM376 126h1v1h-1zM376 131h1v1h-1zM376 136h1v1h-1zM376 141h1v1h-1zM376 146h1v1h-1zM376 151h1v1h-1zM376 156h1v1h-1zM376 161h1v1h-1zM376 166h1v1h-1zM376 171h1v1h-1zM376 176h1v1h-1zM376 181h1v1h-1zM376 186h1v1h-1zM376 191h1v1h-1zM376 196h1v1h-1zM376 201h1v1h-1zM376 206h1v1h-1zM376 211h1v1h-1zM376 216h1v1h-1zM376 221h1v1h-1zM376 226h1v1h-1zM376 231h1v1h-1zM376 236h1v1h-1zM376 241h1v1h-1zM376 246h1v1h-1zM376 251h1v1h-1zM376 256h1v1h-1zM376 261h1v1h-1zM376 266h1v1h-1zM376 271h1v1h-1zM376 276h1v1h-1zM376 281h1v1h-1zM376 286h1v1h-1zM376 291h1v1h-1zM376 296h1v1h-1zM376 301h1v1h-1zM376 306h1v1h-1zM376 311h1v1h-1zM376 316h1v1h-1zM376 321h1v1h-1zM376 326h1v1h-1zM376 331h1v1h-1zM376 336h1v1h-1zM376 341h1v1h-1zM376 346h1v1h-1zM376 351h1v1h-1zM376 356h1v1h-1zM376 361h1v1h-1zM376 366h1v1h-1zM376 371h1v1h-1zM376 376h1v1h-1zM376 381h1v1h-1zM376 386h1v1h-1zM376 391h1v1h-1zM376 396h1v1h-1zM376 401h1v1h-1zM376 406h1v1h-1zM376 411h1v1h-1zM376 416h1v1h-1zM376 421h1v1h-1zM376 426h1v1h-1zM376 431h1v1h-1zM376 436h1v1h-1zM376 441h1v1h-1zM376 446h1v1h-1zM376 451h1v1h-1zM376 456h1v1h-1zM376 461h1v1h-1zM376 466h1v1h-1zM376 471h1v1h-1zM376 476h1v1h-1zM376 481h1v1h-1zM376 486h1v1h-1zM376 491h1v1h-1zM376 496h1v1h-1zM376 501h1v1h-1zM401 6h1v1h-1zM401 11h1v1h-1zM401 16h1v1h-1zM401 21h1v1h-1zM401 26h1v1h-1zM401 31h1v1h-1zM401 36h1v1h-1zM401 41h1v1h-1zM401 46h1v1h-1zM401 51h1v1h-1zM401 56h1v1h-1zM401 61h1v1h-1zM401 66h1v1h-1zM401 71h1v1h-1zM401 76h1v1h-1zM401 81h1v1h-1zM401 86h1v1h-1zM401 91h1v1h-1zM401 96h1v1h-1zM401 101h1v1h-1zM401 106h1v1h-1zM401 111h1v1h-1zM401 116h1v1h-1zM401 121h1v1h-1zM401 126h1v1h-1zM401 131h1v1h-1zM401 136h1v1h-1zM401 141h1v1h-1zM401 146h1v1h-1zM401 151h1v1h-1zM401 156h1v1h-1zM401 161h1v1h-1zM401 166h1v1h-1zM401 171h1v1h-1zM401 176h1v1h-1zM401 181h1v1h-1zM401 186h1v1h-1zM401 191h1v1h-1zM401 196h1v1h-1zM401 201h1v1h-1zM401 206h1v1h-1zM401 211h1v1h-1zM401 216h1v1h-1zM401 221h1v1h-1zM401 226h1v1h-1zM401 231h1v1h-1zM401 236h1v1h-1zM401 241h1v1h-1zM401 246h1v1h-1zM401 251h1v1h-1zM401 256h1v1h-1zM401 261h1v1h-1zM401 266h1v1h-1zM401 271h1v1h-1zM401 276h1v1h-1zM401 281h1v1h-1zM401 286h1v1h-1zM401 291h1v1h-1zM401 296h1v1h-1zM401 301h1v1h-1zM401 306h1v1h-1zM401 311h1v1h-1zM401 316h1v1h-1zM401 321h1v1h-1zM401 326h1v1h-1zM401 331h1v1h-1zM401 336h1v1h-1zM401 341h1v1h-1zM401 346h1v1h-1zM401 351h1v1h-1zM401 356h1v1h-1zM401 361h1v1h-1zM401 366h1v1h-1zM401 371h1v1h-1zM401 376h1v1h-1zM401 381h1v1h-1zM401 386h1v1h-1zM401 391h1v1h-1zM401 396h1v1h-1zM401 401h1v1h-1zM401 406h1v1h-1zM401 411h1v1h-1zM401 416h1v1h-1zM401 421h1v1h-1zM401 426h1v1h-1zM401 431h1v1h-1zM401 436h1v1h-1zM401 441h1v1h-1zM401 446h1v1h-1zM401 451h1v1h-1zM401 456h1v1h-1zM401 461h1v1h-1zM401 466h1v1h-1zM401 471h1v1h-1zM401 476h1v1h-1zM401 481h1v1h-1zM401 486h1v1h-1zM401 491h1v1h-1zM401 496h1v1h-1zM401 501h1v1h-1zM426 6h1v1h-1zM426 11h1v1h-1zM426 16h1v1h-1zM426 21h1v1h-1zM426 26h1v1h-1zM426 31h1v1h-1zM426 36h1v1h-1zM426 41h1v1h-1zM426 46h1v1h-1zM426 51h1v1h-1zM426 56h1v1h-1zM426 61h1v1h-1zM426 66h1v1h-1zM426 71h1v1h-1zM426 76h1v1h-1zM426 81h1v1h-1zM426 86h1v1h-1zM426 91h1v1h-1zM426 96h1v1h-1zM426 101h1v1h-1zM426 106h1v1h-1zM426 111h1v1h-1zM426 116h1v1h-1zM426 121h1v1h-1zM426 126h1v1h-1zM426 131h1v1h-1zM426 136h1v1h-1zM426 141h1v1h-1zM426 146h1v1h-1zM426 151h1v1h-1zM426 156h1v1h-1zM426 161h1v1h-1zM426 166h1v1h-1zM426 171h1v1h-1zM426 176h1v1h-1zM426 181h1v1h-1zM426 186h1v1h-1zM426 191h1v1h-1zM426 196h1v1h-1zM426 201h1v1h-1zM426 206h1v1h-1zM426 211h1v1h-1zM426 216h1v1h-1zM426 221h1v1h-1zM426 226h1v1h-1zM426 231h1v1h-1zM426 236h1v1h-1zM426 241h1v1h-1zM426 246h1v1h-1zM426 251h1v1h-1zM426 256h1v1h-1zM426 261h1v1h-1zM426 266h1v1h-1zM426 271h1v1h-1zM426 276h1v1h-1zM426 281h1v1h-1zM426 286h1v1h-1zM426 291h1v1h-1zM426 296h1v1h-1zM426 301h1v1h-1zM426 306h1v1h-1zM426 311h1v1h-1zM426 316h1v1h-1zM426 321h1v1h-1zM426 326h1v1h-1zM426 331h1v1h-1zM426 336h1v1h-1zM426 341h1v1h-1zM426 346h1v1h-1zM426 351h1v1h-1zM426 356h1v1h-1zM426 361h1v1h-1zM426 366h1v1h-1zM426 371h1v1h-1zM426 376h1v1h-1zM426 381h1v1h-1zM426 386h1v1h-1zM426 391h1v1h-1zM426 396h1v1h-1zM426 401h1v1h-1zM426 406h1v1h-1zM426 411h1v1h-1zM426 416h1v1h-1zM426 421h1v1h-1zM426 426h1v1h-1zM426 431h1v1h-1zM426 436h1v1h-1zM426 441h1v1h-1zM426 446h1v1h-1zM426 451h1v1h-1zM426 456h1v1h-1zM426 461h1v1h-1zM426 466h1v1h-1zM426 471h1v1h-1zM426 476h1v1h-1zM426 481h1v1h-1zM426 486h1v1h-1zM426 491h1v1h-1zM426 496h1v1h-1zM426 501h1v1h-1zM451 6h1v1h-1zM451 11h1v1h-1zM451 16h1v1h-1zM451 21h1v1h-1zM451 26h1v1h-1zM451 31h1v1h-1zM451 36h1v1h-1zM451 41h1v1h-1zM451 46h1v1h-1zM451 51h1v1h-1zM451 56h1v1h-1zM451 61h1v1h-1zM451 66h1v1h-1zM451 71h1v1h-1zM451 76h1v1h-1zM451 81h1v1h-1zM451 86h1v1h-1zM451 91h1v1h-1zM451 96h1v1h-1zM451 101h1v1h-1zM451 106h1v1h-1zM451 111h1v1h-1zM451 116h1v1h-1zM451 121h1v1h-1zM451 126h1v1h-1zM451 131h1v1h-1zM451 136h1v1h-1zM451 141h1v1h-1zM451 146h1v1h-1zM451 151h1v1h-1zM451 156h1v1h-1zM451 161h1v1h-1zM451 166h1v1h-1zM451 171h1v1h-1zM451 176h1v1h-1zM451 181h1v1h-1zM451 186h1v1h-1zM451 191h1v1h-1zM451 196h1v1h-1zM451 201h1v1h-1zM451 206h1v1h-1zM451 211h1v1h-1zM451 216h1v1h-1zM451 221h1v1h-1zM451 226h1v1h-1zM451 231h1v1h-1zM451 236h1v1h-1zM451 241h1v1h-1zM451 246h1v1h-1zM451 251h1v1h-1zM451 256h1v1h-1zM451 261h1v1h-1zM451 266h1v1h-1zM451 271h1v1h-1zM451 276h1v1h-1zM451 281h1v1h-1zM451 286h1v1h-1zM451 291h1v1h-1zM451 296h1v1h-1zM451 301h1v1h-1zM451 306h1v1h-1zM451 311h1v1h-1zM451 316h1v1h-1zM451 321h1v1h-1zM451 326h1v1h-1zM451 331h1v1h-1zM451 336h1v1h-1zM451 341h1v1h-1zM451 346h1v1h-1zM451 351h1v1h-1zM451 356h1v1h-1zM451 361h1v1h-1zM451 366h1v1h-1zM451 371h1v1h-1zM451 376h1v1h-1zM451 381h1v1h-1zM451 386h1v1h-1zM451 391h1v1h-1zM451 396h1v1h-1zM451 401h1v1h-1zM451 406h1v1h-1zM451 411h1v1h-1zM451 416h1v1h-1zM451 421h1v1h-1zM451 426h1v1h-1zM451 431h1v1h-1zM451 436h1v1h-1zM451 441h1v1h-1zM451 446h1v1h-1zM451 451h1v1h-1zM451 456h1v1h-1zM451 461h1v1h-1zM451 466h1v1h-1zM451 471h1v1h-1zM451 476h1v1h-1zM451 481h1v1h-1zM451 486h1v1h-1zM451 491h1v1h-1zM451 496h1v1h-1zM451 501h1v1h-1zM476 6h1v1h-1zM476 11h1v1h-1zM476 16h1v1h-1zM476 21h1v1h-1zM476 26h1v1h-1zM476 31h1v1h-1zM476 36h1v1h-1zM476 41h1v1h-1zM476 46h1v1h-1zM476 51h1v1h-1zM476 56h1v1h-1zM476 61h1v1h-1zM476 66h1v1h-1zM476 71h1v1h-1zM476 76h1v1h-1zM476 81h1v1h-1zM476 86h1v1h-1zM476 91h1v1h-1zM476 96h1v1h-1zM476 101h1v1h-1zM476 106h1v1h-1zM476 111h1v1h-1zM476 116h1v1h-1zM476 121h1v1h-1zM476 126h1v1h-1zM476 131h1v1h-1zM476 136h1v1h-1zM476 141h1v1h-1zM476 146h1v1h-1zM476 151h1v1h-1zM476 156h1v1h-1zM476 161h1v1h-1zM476 166h1v1h-1zM476 171h1v1h-1zM476 176h1v1h-1zM476 181h1v1h-1zM476 186h1v1h-1zM476 191h1v1h-1zM476 196h1v1h-1zM476 201h1v1h-1zM476 206h1v1h-1zM476 211h1v1h-1zM476 216h1v1h-1zM476 221h1v1h-1zM476 226h1v1h-1zM476 231h1v1h-1zM476 236h1v1h-1zM476 241h1v1h-1zM476 246h1v1h-1zM476 251h1v1h-1zM476 256h1v1h-1zM476 261h1v1h-1zM476 266h1v1h-1zM476 271h1v1h-1zM476 276h1v1h-1zM476 281h1v1h-1zM476 286h1v1h-1zM476 291h1v1h-1zM476 296h1v1h-1zM476 301h1v1h-1zM476 306h1v1h-1zM476 311h1v1h-1zM476 316h1v1h-1zM476 321h1v1h-1zM476 326h1v1h-1zM476 331h1v1h-1zM476 336h1v1h-1zM476 341h1v1h-1zM476 346h1v1h-1zM476 351h1v1h-1zM476 356h1v1h-1zM476 361h1v1h-1zM476 366h1v1h-1zM476 371h1v1h-1zM476 376h1v1h-1zM476 381h1v1h-1zM476 386h1v1h-1zM476 391h1v1h-1zM476 396h1v1h-1zM476 401h1v1h-1zM476 406h1v1h-1zM476 411h1v1h-1zM476 416h1v1h-1zM476 421h1v1h-1zM476 426h1v1h-1zM476 431h1v1h-1zM476 436h1v1h-1zM476 441h1v1h-1zM476 446h1v1h-1zM476 451h1v1h-1zM476 456h1v1h-1zM476 461h1v1h-1zM476 466h1v1h-1zM476 471h1v1h-1zM476 476h1v1h-1zM476 481h1v1h-1zM476 486h1v1h-1zM476 491h1v1h-1zM476 496h1v1h-1zM476 501h1v1h-1zM501 6h1v1h-1zM501 11h1v1h-1zM501 16h1v1h-1zM501 21h1v1h-1zM501 26h1v1h-1zM501 31h1v1h-1zM501 36h1v1h-1zM501 41h1v1h-1zM501 46h1v1h-1zM501 51h1v1h-1zM501 56h1v1h-1zM501 61h1v1h-1zM501 66h1v1h-1zM501 71h1v1h-1zM501 76h1v1h-1zM501 81h1v1h-1zM501 86h1v1h-1zM501 91h1v1h-1zM501 96h1v1h-1zM501 101h1v1h-1zM501 106h1v1h-1zM501 111h1v1h-1zM501 116h1v1h-1zM501 121h1v1h-1zM501 126h1v1h-1zM501 131h1v1h-1zM501 136h1v1h-1zM501 141h1v1h-1zM501 146h1v1h-1zM501 151h1v1h-1zM501 156h1v1h-1zM501 161h1v1h-1zM501 166h1v1h-1zM501 171h1v1h-1zM501 176h1v1h-1zM501 181h1v1h-1zM501 186h1v1h-1zM501 191h1v1h-1zM501 196h1v1h-1zM501 201h1v1h-1zM501 206h1v1h-1zM501 211h1v1h-1zM501 216h1v1h-1zM501 221h1v1h-1zM501 226h1v1h-1zM501 231h1v1h-1zM501 236h1v1h-1zM501 241h1v1h-1zM501 246h1v1h-1zM501 251h1v1h-1zM501 256h1v1h-1zM501 261h1v1h-1zM501 266h1v1h-1zM501 271h1v1h-1zM501 276h1v1h-1zM501 281h1v1h-1zM501 286h1v1h-1zM501 291h1v1h-1zM501 296h1v1h-1zM501 301h1v1h-1zM501 306h1v1h-1zM501 311h1v1h-1zM501 316h1v1h-1zM501 321h1v1h-1zM501 326h1v1h-1zM501 331h1v1h-1zM501 336h1v1h-1zM501 341h1v1h-1zM501 346h1v1h-1zM501 351h1v1h-1zM501 356h1v1h-1zM501 361h1v1h-1zM501 366h1v1h-1zM501 371h1v1h-1zM501 376h1v1h-1zM501 381h1v1h-1zM501 386h1v1h-1zM501 391h1v1h-1zM501 396h1v1h-1zM501 401h1v1h-1zM501 406h1v1h-1zM501 411h1v1h-1zM501 416h1v1h-1zM501 421h1v1h-1zM501 426h1v1h-1zM501 431h1v1h-1zM501 436h1v1h-1zM501 441h1v1h-1zM501 446h1v1h-1zM501 451h1v1h-1zM501 456h1v1h-1zM501 461h1v1h-1zM501 466h1v1h-1zM501 471h1v1h-1zM501 476h1v1h-1zM501 481h1v1h-1zM501 486h1v1h-1zM501 491h1v1h-1zM501 496h1v1h-1zM501 501h1v1h-1zM526 6h1v1h-1zM526 11h1v1h-1zM526 16h1v1h-1zM526 21h1v1h-1zM526 26h1v1h-1zM526 31h1v1h-1zM526 36h1v1h-1zM526 41h1v1h-1zM526 46h1v1h-1zM526 51h1v1h-1zM526 56h1v1h-1zM526 61h1v1h-1zM526 66h1v1h-1zM526 71h1v1h-1zM526 76h1v1h-1zM526 81h1v1h-1zM526 86h1v1h-1zM526 91h1v1h-1zM526 96h1v1h-1zM526 101h1v1h-1zM526 106h1v1h-1zM526 111h1v1h-1zM526 116h1v1h-1zM526 121h1v1h-1zM526 126h1v1h-1zM526 131h1v1h-1zM526 136h1v1h-1zM526 141h1v1h-1zM526 146h1v1h-1zM526 151h1v1h-1zM526 156h1v1h-1zM526 161h1v1h-1zM526 166h1v1h-1zM526 171h1v1h-1zM526 176h1v1h-1zM526 181h1v1h-1zM526 186h1v1h-1zM526 191h1v1h-1zM526 196h1v1h-1zM526 201h1v1h-1zM526 206h1v1h-1zM526 211h1v1h-1zM526 216h1v1h-1zM526 221h1v1h-1zM526 226h1v1h-1zM526 231h1v1h-1zM526 236h1v1h-1zM526 241h1v1h-1zM526 246h1v1h-1zM526 251h1v1h-1zM526 256h1v1h-1zM526 261h1v1h-1zM526 266h1v1h-1zM526 271h1v1h-1zM526 276h1v1h-1zM526 281h1v1h-1zM526 286h1v1h-1zM526 291h1v1h-1zM526 296h1v1h-1zM526 301h1v1h-1zM526 306h1v1h-1zM526 311h1v1h-1zM526 316h1v1h-1zM526 321h1v1h-1zM526 326h1v1h-1zM526 331h1v1h-1zM526 336h1v1h-1zM526 341h1v1h-1zM526 346h1v1h-1zM526 351h1v1h-1zM526 356h1v1h-1zM526 361h1v1h-1zM526 366h1v1h-1zM526 371h1v1h-1zM526 376h1v1h-1zM526 381h1v1h-1zM526 386h1v1h-1zM526 391h1v1h-1zM526 396h1v1h-1zM526 401h1v1h-1zM526 406h1v1h-1zM526 411h1v1h-1zM526 416h1v1h-1zM526 421h1v1h-1zM526 426h1v1h-1zM526 431h1v1h-1zM526 436h1v1h-1zM526 441h1v1h-1zM526 446h1v1h-1zM526 451h1v1h-1zM526 456h1v1h-1zM526 461h1v1h-1zM526 466h1v1h-1zM526 471h1v1h-1zM526 476h1v1h-1zM526 481h1v1h-1zM526 486h1v1h-1zM526 491h1v1h-1zM526 496h1v1h-1zM526 501h1v1h-1zM551 6h1v1h-1zM551 11h1v1h-1zM551 16h1v1h-1zM551 21h1v1h-1zM551 26h1v1h-1zM551 31h1v1h-1zM551 36h1v1h-1zM551 41h1v1h-1zM551 46h1v1h-1zM551 51h1v1h-1zM551 56h1v1h-1zM551 61h1v1h-1zM551 66h1v1h-1zM551 71h1v1h-1zM551 76h1v1h-1zM551 81h1v1h-1zM551 86h1v1h-1zM551 91h1v1h-1zM551 96h1v1h-1zM551 101h1v1h-1zM551 106h1v1h-1zM551 111h1v1h-1zM551 116h1v1h-1zM551 121h1v1h-1zM551 126h1v1h-1zM551 131h1v1h-1zM551 136h1v1h-1zM551 141h1v1h-1zM551 146h1v1h-1zM551 151h1v1h-1zM551 156h1v1h-1zM551 161h1v1h-1zM551 166h1v1h-1zM551 171h1v1h-1zM551 176h1v1h-1zM551 181h1v1h-1zM551 186h1v1h-1zM551 191h1v1h-1zM551 196h1v1h-1zM551 201h1v1h-1zM551 206h1v1h-1zM551 211h1v1h-1zM551 216h1v1h-1zM551 221h1v1h-1zM551 226h1v1h-1zM551 231h1v1h-1zM551 236h1v1h-1zM551 241h1v1h-1zM551 246h1v1h-1zM551 251h1v1h-1zM551 256h1v1h-1zM551 261h1v1h-1zM551 266h1v1h-1zM551 271h1v1h-1zM551 276h1v1h-1zM551 281h1v1h-1zM551 286h1v1h-1zM551 291h1v1h-1zM551 296h1v1h-1zM551 301h1v1h-1zM551 306h1v1h-1zM551 311h1v1h-1zM551 316h1v1h-1zM551 321h1v1h-1zM551 326h1v1h-1zM551 331h1v1h-1zM551 336h1v1h-1zM551 341h1v1h-1zM551 346h1v1h-1zM551 351h1v1h-1zM551 356h1v1h-1zM551 361h1v1h-1zM551 366h1v1h-1zM551 371h1v1h-1zM551 376h1v1h-1zM551 381h1v1h-1zM551 386h1v1h-1zM551 391h1v1h-1zM551 396h1v1h-1zM551 401h1v1h-1zM551 406h1v1h-1zM551 411h1v1h-1zM551 416h1v1h-1zM551 421h1v1h-1zM551 426h1v1h-1zM551 431h1v1h-1zM551 436h1v1h-1zM551 441h1v1h-1zM551 446h1v1h-1zM551 451h1v1h-1zM551 456h1v1h-1zM551 461h1v1h-1zM551 466h1v1h-1zM551 471h1v1h-1zM551 476h1v1h-1zM551 481h1v1h-1zM551 486h1v1h-1zM551 491h1v1h-1zM551 496h1v1h-1zM551 501h1v1h-1zM576 6h1v1h-1zM576 11h1v1h-1zM576 16h1v1h-1zM576 21h1v1h-1zM576 26h1v1h-1zM576 31h1v1h-1zM576 36h1v1h-1zM576 41h1v1h-1zM576 46h1v1h-1zM576 51h1v1h-1zM576 56h1v1h-1zM576 61h1v1h-1zM576 66h1v1h-1zM576 71h1v1h-1zM576 76h1v1h-1zM576 81h1v1h-1zM576 86h1v1h-1zM576 91h1v1h-1zM576 96h1v1h-1zM576 101h1v1h-1zM576 106h1v1h-1zM576 111h1v1h-1zM576 116h1v1h-1zM576 121h1v1h-1zM576 126h1v1h-1zM576 131h1v1h-1zM576 136h1v1h-1zM576 141h1v1h-1zM576 146h1v1h-1zM576 151h1v1h-1zM576 156h1v1h-1zM576 161h1v1h-1zM576 166h1v1h-1zM576 171h1v1h-1zM576 176h1v1h-1zM576 181h1v1h-1zM576 186h1v1h-1zM576 191h1v1h-1zM576 196h1v1h-1zM576 201h1v1h-1zM576 206h1v1h-1zM576 211h1v1h-1zM576 216h1v1h-1zM576 221h1v1h-1zM576 226h1v1h-1zM576 231h1v1h-1zM576 236h1v1h-1zM576 241h1v1h-1zM576 246h1v1h-1zM576 251h1v1h-1zM576 256h1v1h-1zM576 261h1v1h-1zM576 266h1v1h-1zM576 271h1v1h-1zM576 276h1v1h-1zM576 281h1v1h-1zM576 286h1v1h-1zM576 291h1v1h-1zM576 296h1v1h-1zM576 301h1v1h-1zM576 306h1v1h-1zM576 311h1v1h-1zM576 316h1v1h-1zM576 321h1v1h-1zM576 326h1v1h-1zM576 331h1v1h-1zM576 336h1v1h-1zM576 341h1v1h-1zM576 346h1v1h-1zM576 351h1v1h-1zM576 356h1v1h-1zM576 361h1v1h-1zM576 366h1v1h-1zM576 371h1v1h-1zM576 376h1v1h-1zM576 381h1v1h-1zM576 386h1v1h-1zM576 391h1v1h-1zM576 396h1v1h-1zM576 401h1v1h-1zM576 406h1v1h-1zM576 411h1v1h-1zM576 416h1v1h-1zM576 421h1v1h-1zM576 426h1v1h-1zM576 431h1v1h-1zM576 436h1v1h-1zM576 441h1v1h-1zM576 446h1v1h-1zM576 451h1v1h-1zM576 456h1v1h-1zM576 461h1v1h-1zM576 466h1v1h-1zM576 471h1v1h-1zM576 476h1v1h-1zM576 481h1v1h-1zM576 486h1v1h-1zM576 491h1v1h-1zM576 496h1v1h-1zM576 501h1v1h-1zM601 6h1v1h-1zM601 11h1v1h-1zM601 16h1v1h-1zM601 21h1v1h-1zM601 26h1v1h-1zM601 31h1v1h-1zM601 36h1v1h-1zM601 41h1v1h-1zM601 46h1v1h-1zM601 51h1v1h-1zM601 56h1v1h-1zM601 61h1v1h-1zM601 66h1v1h-1zM601 71h1v1h-1zM601 76h1v1h-1zM601 81h1v1h-1zM601 86h1v1h-1zM601 91h1v1h-1zM601 96h1v1h-1zM601 101h1v1h-1zM601 106h1v1h-1zM601 111h1v1h-1zM601 116h1v1h-1zM601 121h1v1h-1zM601 126h1v1h-1zM601 131h1v1h-1zM601 136h1v1h-1zM601 141h1v1h-1zM601 146h1v1h-1zM601 151h1v1h-1zM601 156h1v1h-1zM601 161h1v1h-1zM601 166h1v1h-1zM601 171h1v1h-1zM601 176h1v1h-1zM601 181h1v1h-1zM601 186h1v1h-1zM601 191h1v1h-1zM601 196h1v1h-1zM601 201h1v1h-1zM601 206h1v1h-1zM601 211h1v1h-1zM601 216h1v1h-1zM601 221h1v1h-1zM601 226h1v1h-1zM601 231h1v1h-1zM601 236h1v1h-1zM601 241h1v1h-1zM601 246h1v1h-1zM601 251h1v1h-1zM601 256h1v1h-1zM601 261h1v1h-1zM601 266h1v1h-1zM601 271h1v1h-1zM601 276h1v1h-1zM601 281h1v1h-1zM601 286h1v1h-1zM601 291h1v1h-1zM601 296h1v1h-1zM601 301h1v1h-1zM601 306h1v1h-1zM601 311h1v1h-1zM601 316h1v1h-1zM601 321h1v1h-1zM601 326h1v1h-1zM601 331h1v1h-1zM601 336h1v1h-1zM601 341h1v1h-1zM601 346h1v1h-1zM601 351h1v1h-1zM601 356h1v1h-1zM601 361h1v1h-1zM601 366h1v1h-1zM601 371h1v1h-1zM601 376h1v1h-1zM601 381h1v1h-1zM601 386h1v1h-1zM601 391h1v1h-1zM601 396h1v1h-1zM601 401h1v1h-1zM601 406h1v1h-1zM601 411h1v1h-1zM601 416h1v1h-1zM601 421h1v1h-1zM601 426h1v1h-1zM601 431h1v1h-1zM601 436h1v1h-1zM601 441h1v1h-1zM601 446h1v1h-1zM601 451h1v1h-1zM601 456h1v1h-1zM601 461h1v1h-1zM601 466h1v1h-1zM601 471h1v1h-1zM601 476h1v1h-1zM601 481h1v1h-1zM601 486h1v1h-1zM601 491h1v1h-1zM601 496h1v1h-1zM601 501h1v1h-1zM626 6h1v1h-1zM626 11h1v1h-1zM626 16h1v1h-1zM626 21h1v1h-1zM626 26h1v1h-1zM626 31h1v1h-1zM626 36h1v1h-1zM626 41h1v1h-1zM626 46h1v1h-1zM626 51h1v1h-1zM626 56h1v1h-1zM626 61h1v1h-1zM626 66h1v1h-1zM626 71h1v1h-1zM626 76h1v1h-1zM626 81h1v1h-1zM626 86h1v1h-1zM626 91h1v1h-1zM626 96h1v1h-1zM626 101h1v1h-1zM626 106h1v1h-1zM626 111h1v1h-1zM626 116h1v1h-1zM626 121h1v1h-1zM626 126h1v1h-1zM626 131h1v1h-1zM626 136h1v1h-1zM626 141h1v1h-1zM626 146h1v1h-1zM626 151h1v1h-1zM626 156h1v1h-1zM626 161h1v1h-1zM626 166h1v1h-1zM626 171h1v1h-1zM626 176h1v1h-1zM626 181h1v1h-1zM626 186h1v1h-1zM626 191h1v1h-1zM626 196h1v1h-1zM626 201h1v1h-1zM626 206h1v1h-1zM626 211h1v1h-1zM626 216h1v1h-1zM626 221h1v1h-1zM626 226h1v1h-1zM626 231h1v1h-1zM626 236h1v1h-1zM626 241h1v1h-1zM626 246h1v1h-1zM626 251h1v1h-1zM626 256h1v1h-1zM626 261h1v1h-1zM626 266h1v1h-1zM626 271h1v1h-1zM626 276h1v1h-1zM626 281h1v1h-1zM626 286h1v1h-1zM626 291h1v1h-1zM626 296h1v1h-1zM626 301h1v1h-1zM626 306h1v1h-1zM626 311h1v1h-1zM626 316h1v1h-1zM626 321h1v1h-1zM626 326h1v1h-1zM626 331h1v1h-1zM626 336h1v1h-1zM626 341h1v1h-1zM626 346h1v1h-1zM626 351h1v1h-1zM626 356h1v1h-1zM626 361h1v1h-1zM626 366h1v1h-1zM626 371h1v1h-1zM626 376h1v1h-1zM626 381h1v1h-1zM626 386h1v1h-1zM626 391h1v1h-1zM626 396h1v1h-1zM626 401h1v1h-1zM626 406h1v1h-1zM626 411h1v1h-1zM626 416h1v1h-1zM626 421h1v1h-1zM626 426h1v1h-1zM626 431h1v1h-1zM626 436h1v1h-1zM626 441h1v1h-1zM626 446h1v1h-1zM626 451h1v1h-1zM626 456h1v1h-1zM626 461h1v1h-1zM626 466h1v1h-1zM626 471h1v1h-1zM626 476h1v1h-1zM626 481h1v1h-1zM626 486h1v1h-1zM626 491h1v1h-1zM626 496h1v1h-1zM626 501h1v1h-1zM651 6h1v1h-1zM651 11h1v1h-1zM651 16h1v1h-1zM651 21h1v1h-1zM651 26h1v1h-1zM651 31h1v1h-1zM651 36h1v1h-1zM651 41h1v1h-1zM651 46h1v1h-1zM651 51h1v1h-1zM651 56h1v1h-1zM651 61h1v1h-1zM651 66h1v1h-1zM651 71h1v1h-1zM651 76h1v1h-1zM651 81h1v1h-1zM651 86h1v1h-1zM651 91h1v1h-1zM651 96h1v1h-1zM651 101h1v1h-1zM651 106h1v1h-1zM651 111h1v1h-1zM651 116h1v1h-1zM651 121h1v1h-1zM651 126h1v1h-1zM651 131h1v1h-1zM651 136h1v1h-1zM651 141h1v1h-1zM651 146h1v1h-1zM651 151h1v1h-1zM651 156h1v1h-1zM651 161h1v1h-1zM651 166h1v1h-1zM651 171h1v1h-1zM651 176h1v1h-1zM651 181h1v1h-1zM651 186h1v1h-1zM651 191h1v1h-1zM651 196h1v1h-1zM651 201h1v1h-1zM651 206h1v1h-1zM651 211h1v1h-1zM651 216h1v1h-1zM651 221h1v1h-1zM651 226h1v1h-1zM651 231h1v1h-1zM651 236h1v1h-1zM651 241h1v1h-1zM651 246h1v1h-1zM651 251h1v1h-1zM651 256h1v1h-1zM651 261h1v1h-1zM651 266h1v1h-1zM651 271h1v1h-1zM651 276h1v1h-1zM651 281h1v1h-1zM651 286h1v1h-1zM651 291h1v1h-1zM651 296h1v1h-1zM651 301h1v1h-1zM651 306h1v1h-1zM651 311h1v1h-1zM651 316h1v1h-1zM651 321h1v1h-1zM651 326h1v1h-1zM651 331h1v1h-1zM651 336h1v1h-1zM651 341h1v1h-1zM651 346h1v1h-1zM651 351h1v1h-1zM651 356h1v1h-1zM651 361h1v1h-1zM651 366h1v1h-1zM651 371h1v1h-1zM651 376h1v1h-1zM651 381h1v1h-1zM651 386h1v1h-1zM651 391h1v1h-1zM651 396h1v1h-1zM651 401h1v1h-1zM651 406h1v1h-1zM651 411h1v1h-1zM651 416h1v1h-1zM651 421h1v1h-1zM651 426h1v1h-1zM651 431h1v1h-1zM651 436h1v1h-1zM651 441h1v1h-1zM651 446h1v1h-1zM651 451h1v1h-1zM651 456h1v1h-1zM651 461h1v1h-1zM651 466h1v1h-1zM651 471h1v1h-1zM651 476h1v1h-1zM651 481h1v1h-1zM651 486h1v1h-1zM651 491h1v1h-1zM651 496h1v1h-1zM651 501h1v1h-1zM676 6h1v1h-1zM676 11h1v1h-1zM676 16h1v1h-1zM676 21h1v1h-1zM676 26h1v1h-1zM676 31h1v1h-1zM676 36h1v1h-1zM676 41h1v1h-1zM676 46h1v1h-1zM676 51h1v1h-1zM676 56h1v1h-1zM676 61h1v1h-1zM676 66h1v1h-1zM676 71h1v1h-1zM676 76h1v1h-1zM676 81h1v1h-1zM676 86h1v1h-1zM676 91h1v1h-1zM676 96h1v1h-1zM676 101h1v1h-1zM676 106h1v1h-1zM676 111h1v1h-1zM676 116h1v1h-1zM676 121h1v1h-1zM676 126h1v1h-1zM676 131h1v1h-1zM676 136h1v1h-1zM676 141h1v1h-1zM676 146h1v1h-1zM676 151h1v1h-1zM676 156h1v1h-1zM676 161h1v1h-1zM676 166h1v1h-1zM676 171h1v1h-1zM676 176h1v1h-1zM676 181h1v1h-1zM676 186h1v1h-1zM676 191h1v1h-1zM676 196h1v1h-1zM676 201h1v1h-1zM676 206h1v1h-1zM676 211h1v1h-1zM676 216h1v1h-1zM676 221h1v1h-1zM676 226h1v1h-1zM676 231h1v1h-1zM676 236h1v1h-1zM676 241h1v1h-1zM676 246h1v1h-1zM676 251h1v1h-1zM676 256h1v1h-1zM676 261h1v1h-1zM676 266h1v1h-1zM676 271h1v1h-1zM676 276h1v1h-1zM676 281h1v1h-1zM676 286h1v1h-1zM676 291h1v1h-1zM676 296h1v1h-1zM676 301h1v1h-1zM676 306h1v1h-1zM676 311h1v1h-1zM676 316h1v1h-1zM676 321h1v1h-1zM676 326h1v1h-1zM676 331h1v1h-1zM676 336h1v1h-1zM676 341h1v1h-1zM676 346h1v1h-1zM676 351h1v1h-1zM676 356h1v1h-1zM676 361h1v1h-1zM676 366h1v1h-1zM676 371h1v1h-1zM676 376h1v1h-1zM676 381h1v1h-1zM676 386h1v1h-1zM676 391h1v1h-1zM676 396h1v1h-1zM676 401h1v1h-1zM676 406h1v1h-1zM676 411h1v1h-1zM676 416h1v1h-1zM676 421h1v1h-1zM676 426h1v1h-1zM676 431h1v1h-1zM676 436h1v1h-1zM676 441h1v1h-1zM676 446h1v1h-1zM676 451h1v1h-1zM676 456h1v1h-1zM676 461h1v1h-1zM676 466h1v1h-1zM676 471h1v1h-1zM676 476h1v1h-1zM676 481h1v1h-1zM676 486h1v1h-1zM676 491h1v1h-1zM676 496h1v1h-1zM676 501h1v1h-1zM701 6h1v1h-1zM701 11h1v1h-1zM701 16h1v1h-1zM701 21h1v1h-1zM701 26h1v1h-1zM701 31h1v1h-1zM701 36h1v1h-1zM701 41h1v1h-1zM701 46h1v1h-1zM701 51h1v1h-1zM701 56h1v1h-1zM701 61h1v1h-1zM701 66h1v1h-1zM701 71h1v1h-1zM701 76h1v1h-1zM701 81h1v1h-1zM701 86h1v1h-1zM701 91h1v1h-1zM701 96h1v1h-1zM701 101h1v1h-1zM701 106h1v1h-1zM701 111h1v1h-1zM701 116h1v1h-1zM701 121h1v1h-1zM701 126h1v1h-1zM701 131h1v1h-1zM701 136h1v1h-1zM701 141h1v1h-1zM701 146h1v1h-1zM701 151h1v1h-1zM701 156h1v1h-1zM701 161h1v1h-1zM701 166h1v1h-1zM701 171h1v1h-1zM701 176h1v1h-1zM701 181h1v1h-1zM701 186h1v1h-1zM701 191h1v1h-1zM701 196h1v1h-1zM701 201h1v1h-1zM701 206h1v1h-1zM701 211h1v1h-1zM701 216h1v1h-1zM701 221h1v1h-1zM701 226h1v1h-1zM701 231h1v1h-1zM701 236h1v1h-1zM701 241h1v1h-1zM701 246h1v1h-1zM701 251h1v1h-1zM701 256h1v1h-1zM701 261h1v1h-1zM701 266h1v1h-1zM701 271h1v1h-1zM701 276h1v1h-1zM701 281h1v1h-1zM701 286h1v1h-1zM701 291h1v1h-1zM701 296h1v1h-1zM701 301h1v1h-1zM701 306h1v1h-1zM701 311h1v1h-1zM701 316h1v1h-1zM701 321h1v1h-1zM701 326h1v1h-1zM701 331h1v1h-1zM701 336h1v1h-1zM701 341h1v1h-1zM701 346h1v1h-1zM701 351h1v1h-1zM701 356h1v1h-1zM701 361h1v1h-1zM701 366h1v1h-1zM701 371h1v1h-1zM701 376h1v1h-1zM701 381h1v1h-1zM701 386h1v1h-1zM701 391h1v1h-1zM701 396h1v1h-1zM701 401h1v1h-1zM701 406h1v1h-1zM701 411h1v1h-1zM701 416h1v1h-1zM701 421h1v1h-1zM701 426h1v1h-1zM701 431h1v1h-1zM701 436h1v1h-1zM701 441h1v1h-1zM701 446h1v1h-1zM701 451h1v1h-1zM701 456h1v1h-1zM701 461h1v1h-1zM701 466h1v1h-1zM701 471h1v1h-1zM701 476h1v1h-1zM701 481h1v1h-1zM701 486h1v1h-1zM701 491h1v1h-1zM701 496h1v1h-1zM701 501h1v1h-1zM726 6h1v1h-1zM726 11h1v1h-1zM726 16h1v1h-1zM726 21h1v1h-1zM726 26h1v1h-1zM726 31h1v1h-1zM726 36h1v1h-1zM726 41h1v1h-1zM726 46h1v1h-1zM726 51h1v1h-1zM726 56h1v1h-1zM726 61h1v1h-1zM726 66h1v1h-1zM726 71h1v1h-1zM726 76h1v1h-1zM726 81h1v1h-1zM726 86h1v1h-1zM726 91h1v1h-1zM726 96h1v1h-1zM726 101h1v1h-1zM726 106h1v1h-1zM726 111h1v1h-1zM726 116h1v1h-1zM726 121h1v1h-1zM726 126h1v1h-1zM726 131h1v1h-1zM726 136h1v1h-1zM726 141h1v1h-1zM726 146h1v1h-1zM726 151h1v1h-1zM726 156h1v1h-1zM726 161h1v1h-1zM726 166h1v1h-1zM726 171h1v1h-1zM726 176h1v1h-1zM726 181h1v1h-1zM726 186h1v1h-1zM726 191h1v1h-1zM726 196h1v1h-1zM726 201h1v1h-1zM726 206h1v1h-1zM726 211h1v1h-1zM726 216h1v1h-1zM726 221h1v1h-1zM726 226h1v1h-1zM726 231h1v1h-1zM726 236h1v1h-1zM726 241h1v1h-1zM726 246h1v1h-1zM726 251h1v1h-1zM726 256h1v1h-1zM726 261h1v1h-1zM726 266h1v1h-1zM726 271h1v1h-1zM726 276h1v1h-1zM726 281h1v1h-1zM726 286h1v1h-1zM726 291h1v1h-1zM726 296h1v1h-1zM726 301h1v1h-1zM726 306h1v1h-1zM726 311h1v1h-1zM726 316h1v1h-1zM726 321h1v1h-1zM726 326h1v1h-1zM726 331h1v1h-1zM726 336h1v1h-1zM726 341h1v1h-1zM726 346h1v1h-1zM726 351h1v1h-1zM726 356h1v1h-1zM726 361h1v1h-1zM726 366h1v1h-1zM726 371h1v1h-1zM726 376h1v1h-1zM726 381h1v1h-1zM726 386h1v1h-1zM726 391h1v1h-1zM726 396h1v1h-1zM726 401h1v1h-1zM726 406h1v1h-1zM726 411h1v1h-1zM726 416h1v1h-1zM726 421h1v1h-1zM726 426h1v1h-1zM726 431h1v1h-1zM726 436h1v1h-1zM726 441h1v1h-1zM726 446h1v1h-1zM726 451h1v1h-1zM726 456h1v1h-1zM726 461h1v1h-1zM726 466h1v1h-1zM726 471h1v1h-1zM726 476h1v1h-1zM726 481h1v1h-1zM726 486h1v1h-1zM726 491h1v1h-1zM726 496h1v1h-1zM726 501h1v1h-1zM751 6h1v1h-1zM751 11h1v1h-1zM751 16h1v1h-1zM751 21h1v1h-1zM751 26h1v1h-1zM751 31h1v1h-1zM751 36h1v1h-1zM751 41h1v1h-1zM751 46h1v1h-1zM751 51h1v1h-1zM751 56h1v1h-1zM751 61h1v1h-1zM751 66h1v1h-1zM751 71h1v1h-1zM751 76h1v1h-1zM751 81h1v1h-1zM751 86h1v1h-1zM751 91h1v1h-1zM751 96h1v1h-1zM751 101h1v1h-1zM751 106h1v1h-1zM751 111h1v1h-1zM751 116h1v1h-1zM751 121h1v1h-1zM751 126h1v1h-1zM751 131h1v1h-1zM751 136h1v1h-1zM751 141h1v1h-1zM751 146h1v1h-1zM751 151h1v1h-1zM751 156h1v1h-1zM751 161h1v1h-1zM751 166h1v1h-1zM751 171h1v1h-1zM751 176h1v1h-1zM751 181h1v1h-1zM751 186h1v1h-1zM751 191h1v1h-1zM751 196h1v1h-1zM751 201h1v1h-1zM751 206h1v1h-1zM751 211h1v1h-1zM751 216h1v1h-1zM751 221h1v1h-1zM751 226h1v1h-1zM751 231h1v1h-1zM751 236h1v1h-1zM751 241h1v1h-1zM751 246h1v1h-1zM751 251h1v1h-1zM751 256h1v1h-1zM751 261h1v1h-1zM751 266h1v1h-1zM751 271h1v1h-1zM751 276h1v1h-1zM751 281h1v1h-1zM751 286h1v1h-1zM751 291h1v1h-1zM751 296h1v1h-1zM751 301h1v1h-1zM751 306h1v1h-1zM751 311h1v1h-1zM751 316h1v1h-1zM751 321h1v1h-1zM751 326h1v1h-1zM751 331h1v1h-1zM751 336h1v1h-1zM751 341h1v1h-1zM751 346h1v1h-1zM751 351h1v1h-1zM751 356h1v1h-1zM751 361h1v1h-1zM751 366h1v1h-1zM751 371h1v1h-1zM751 376h1v1h-1zM751 381h1v1h-1zM751 386h1v1h-1zM751 391h1v1h-1zM751 396h1v1h-1zM751 401h1v1h-1zM751 406h1v1h-1zM751 411h1v1h-1zM751 416h1v1h-1zM751 421h1v1h-1zM751 426h1v1h-1zM751 431h1v1h-1zM751 436h1v1h-1zM751 441h1v1h-1zM751 446h1v1h-1zM751 451h1v1h-1zM751 456h1v1h-1zM751 461h1v1h-1zM751 466h1v1h-1zM751 471h1v1h-1zM751 476h1v1h-1zM751 481h1v1h-1zM751 486h1v1h-1zM751 491h1v1h-1zM751 496h1v1h-1zM751 501h1v1h-1zM776 6h1v1h-1zM776 11h1v1h-1zM776 16h1v1h-1zM776 21h1v1h-1zM776 26h1v1h-1zM776 31h1v1h-1zM776 36h1v1h-1zM776 41h1v1h-1zM776 46h1v1h-1zM776 51h1v1h-1zM776 56h1v1h-1zM776 61h1v1h-1zM776 66h1v1h-1zM776 71h1v1h-1zM776 76h1v1h-1zM776 81h1v1h-1zM776 86h1v1h-1zM776 91h1v1h-1zM776 96h1v1h-1zM776 101h1v1h-1zM776 106h1v1h-1zM776 111h1v1h-1zM776 116h1v1h-1zM776 121h1v1h-1zM776 126h1v1h-1zM776 131h1v1h-1zM776 136h1v1h-1zM776 141h1v1h-1zM776 146h1v1h-1zM776 151h1v1h-1zM776 156h1v1h-1zM776 161h1v1h-1zM776 166h1v1h-1zM776 171h1v1h-1zM776 176h1v1h-1zM776 181h1v1h-1zM776 186h1v1h-1zM776 191h1v1h-1zM776 196h1v1h-1zM776 201h1v1h-1zM776 206h1v1h-1zM776 211h1v1h-1zM776 216h1v1h-1zM776 221h1v1h-1zM776 226h1v1h-1zM776 231h1v1h-1zM776 236h1v1h-1zM776 241h1v1h-1zM776 246h1v1h-1zM776 251h1v1h-1zM776 256h1v1h-1zM776 261h1v1h-1zM776 266h1v1h-1zM776 271h1v1h-1zM776 276h1v1h-1zM776 281h1v1h-1zM776 286h1v1h-1zM776 291h1v1h-1zM776 296h1v1h-1zM776 301h1v1h-1zM776 306h1v1h-1zM776 311h1v1h-1zM776 316h1v1h-1zM776 321h1v1h-1zM776 326h1v1h-1zM776 331h1v1h-1zM776 336h1v1h-1zM776 341h1v1h-1zM776 346h1v1h-1zM776 351h1v1h-1zM776 356h1v1h-1zM776 361h1v1h-1zM776 366h1v1h-1zM776 371h1v1h-1zM776 376h1v1h-1zM776 381h1v1h-1zM776 386h1v1h-1zM776 391h1v1h-1zM776 396h1v1h-1zM776 401h1v1h-1zM776 406h1v1h-1zM776 411h1v1h-1zM776 416h1v1h-1zM776 421h1v1h-1zM776 426h1v1h-1zM776 431h1v1h-1zM776 436h1v1h-1zM776 441h1v1h-1zM776 446h1v1h-1zM776 451h1v1h-1zM776 456h1v1h-1zM776 461h1v1h-1zM776 466h1v1h-1zM776 471h1v1h-1zM776 476h1v1h-1zM776 481h1v1h-1zM776 486h1v1h-1zM776 491h1v1h-1zM776 496h1v1h-1zM776 501h1v1h-1zM801 6h1v1h-1zM801 11h1v1h-1zM801 16h1v1h-1zM801 21h1v1h-1zM801 26h1v1h-1zM801 31h1v1h-1zM801 36h1v1h-1zM801 41h1v1h-1zM801 46h1v1h-1zM801 51h1v1h-1zM801 56h1v1h-1zM801 61h1v1h-1zM801 66h1v1h-1zM801 71h1v1h-1zM801 76h1v1h-1zM801 81h1v1h-1zM801 86h1v1h-1zM801 91h1v1h-1zM801 96h1v1h-1zM801 101h1v1h-1zM801 106h1v1h-1zM801 111h1v1h-1zM801 116h1v1h-1zM801 121h1v1h-1zM801 126h1v1h-1zM801 131h1v1h-1zM801 136h1v1h-1zM801 141h1v1h-1zM801 146h1v1h-1zM801 151h1v1h-1zM801 156h1v1h-1zM801 161h1v1h-1zM801 166h1v1h-1zM801 171h1v1h-1zM801 176h1v1h-1zM801 181h1v1h-1zM801 186h1v1h-1zM801 191h1v1h-1zM801 196h1v1h-1zM801 201h1v1h-1zM801 206h1v1h-1zM801 211h1v1h-1zM801 216h1v1h-1zM801 221h1v1h-1zM801 226h1v1h-1zM801 231h1v1h-1zM801 236h1v1h-1zM801 241h1v1h-1zM801 246h1v1h-1zM801 251h1v1h-1zM801 256h1v1h-1zM801 261h1v1h-1zM801 266h1v1h-1zM801 271h1v1h-1zM801 276h1v1h-1zM801 281h1v1h-1zM801 286h1v1h-1zM801 291h1v1h-1zM801 296h1v1h-1zM801 301h1v1h-1zM801 306h1v1h-1zM801 311h1v1h-1zM801 316h1v1h-1zM801 321h1v1h-1zM801 326h1v1h-1zM801 331h1v1h-1zM801 336h1v1h-1zM801 341h1v1h-1zM801 346h1v1h-1zM801 351h1v1h-1zM801 356h1v1h-1zM801 361h1v1h-1zM801 366h1v1h-1zM801 371h1v1h-1zM801 376h1v1h-1zM801 381h1v1h-1zM801 386h1v1h-1zM801 391h1v1h-1zM801 396h1v1h-1zM801 401h1v1h-1zM801 406h1v1h-1zM801 411h1v1h-1zM801 416h1v1h-1zM801 421h1v1h-1zM801 426h1v1h-1zM801 431h1v1h-1zM801 436h1v1h-1zM801 441h1v1h-1zM801 446h1v1h-1zM801 451h1v1h-1zM801 456h1v1h-1zM801 461h1v1h-1zM801 466h1v1h-1zM801 471h1v1h-1zM801 476h1v1h-1zM801 481h1v1h-1zM801 486h1v1h-1zM801 491h1v1h-1zM801 496h1v1h-1zM801 501h1v1h-1zM826 6h1v1h-1zM826 11h1v1h-1zM826 16h1v1h-1zM826 21h1v1h-1zM826 26h1v1h-1zM826 31h1v1h-1zM826 36h1v1h-1zM826 41h1v1h-1zM826 46h1v1h-1zM826 51h1v1h-1zM826 56h1v1h-1zM826 61h1v1h-1zM826 66h1v1h-1zM826 71h1v1h-1zM826 76h1v1h-1zM826 81h1v1h-1zM826 86h1v1h-1zM826 91h1v1h-1zM826 96h1v1h-1zM826 101h1v1h-1zM826 106h1v1h-1zM826 111h1v1h-1zM826 116h1v1h-1zM826 121h1v1h-1zM826 126h1v1h-1zM826 131h1v1h-1zM826 136h1v1h-1zM826 141h1v1h-1zM826 146h1v1h-1zM826 151h1v1h-1zM826 156h1v1h-1zM826 161h1v1h-1zM826 166h1v1h-1zM826 171h1v1h-1zM826 176h1v1h-1zM826 181h1v1h-1zM826 186h1v1h-1zM826 191h1v1h-1zM826 196h1v1h-1zM826 201h1v1h-1zM826 206h1v1h-1zM826 211h1v1h-1zM826 216h1v1h-1zM826 221h1v1h-1zM826 226h1v1h-1zM826 231h1v1h-1zM826 236h1v1h-1zM826 241h1v1h-1zM826 246h1v1h-1zM826 251h1v1h-1zM826 256h1v1h-1zM826 261h1v1h-1zM826 266h1v1h-1zM826 271h1v1h-1zM826 276h1v1h-1zM826 281h1v1h-1zM826 286h1v1h-1zM826 291h1v1h-1zM826 296h1v1h-1zM826 301h1v1h-1zM826 306h1v1h-1zM826 311h1v1h-1zM826 316h1v1h-1zM826 321h1v1h-1zM826 326h1v1h-1zM826 331h1v1h-1zM826 336h1v1h-1zM826 341h1v1h-1zM826 346h1v1h-1zM826 351h1v1h-1zM826 356h1v1h-1zM826 361h1v1h-1zM826 366h1v1h-1zM826 371h1v1h-1zM826 376h1v1h-1zM826 381h1v1h-1zM826 386h1v1h-1zM826 391h1v1h-1zM826 396h1v1h-1zM826 401h1v1h-1zM826 406h1v1h-1zM826 411h1v1h-1zM826 416h1v1h-1zM826 421h1v1h-1zM826 426h1v1h-1zM826 431h1v1h-1zM826 436h1v1h-1zM826 441h1v1h-1zM826 446h1v1h-1zM826 451h1v1h-1zM826 456h1v1h-1zM826 461h1v1h-1zM826 466h1v1h-1zM826 471h1v1h-1zM826 476h1v1h-1zM826 481h1v1h-1zM826 486h1v1h-1zM826 491h1v1h-1zM826 496h1v1h-1zM826 501h1v1h-1zM851 6h1v1h-1zM851 11h1v1h-1zM851 16h1v1h-1zM851 21h1v1h-1zM851 26h1v1h-1zM851 31h1v1h-1zM851 36h1v1h-1zM851 41h1v1h-1zM851 46h1v1h-1zM851 51h1v1h-1zM851 56h1v1h-1zM851 61h1v1h-1zM851 66h1v1h-1zM851 71h1v1h-1zM851 76h1v1h-1zM851 81h1v1h-1zM851 86h1v1h-1zM851 91h1v1h-1zM851 96h1v1h-1zM851 101h1v1h-1zM851 106h1v1h-1zM851 111h1v1h-1zM851 116h1v1h-1zM851 121h1v1h-1zM851 126h1v1h-1zM851 131h1v1h-1zM851 136h1v1h-1zM851 141h1v1h-1zM851 146h1v1h-1zM851 151h1v1h-1zM851 156h1v1h-1zM851 161h1v1h-1zM851 166h1v1h-1zM851 171h1v1h-1zM851 176h1v1h-1zM851 181h1v1h-1zM851 186h1v1h-1zM851 191h1v1h-1zM851 196h1v1h-1zM851 201h1v1h-1zM851 206h1v1h-1zM851 211h1v1h-1zM851 216h1v1h-1zM851 221h1v1h-1zM851 226h1v1h-1zM851 231h1v1h-1zM851 236h1v1h-1zM851 241h1v1h-1zM851 246h1v1h-1zM851 251h1v1h-1zM851 256h1v1h-1zM851 261h1v1h-1zM851 266h1v1h-1zM851 271h1v1h-1zM851 276h1v1h-1zM851 281h1v1h-1zM851 286h1v1h-1zM851 291h1v1h-1zM851 296h1v1h-1zM851 301h1v1h-1zM851 306h1v1h-1zM851 311h1v1h-1zM851 316h1v1h-1zM851 321h1v1h-1zM851 326h1v1h-1zM851 331h1v1h-1zM851 336h1v1h-1zM851 341h1v1h-1zM851 346h1v1h-1zM851 351h1v1h-1zM851 356h1v1h-1zM851 361h1v1h-1zM851 366h1v1h-1zM851 371h1v1h-1zM851 376h1v1h-1zM851 381h1v1h-1zM851 386h1v1h-1zM851 391h1v1h-1zM851 396h1v1h-1zM851 401h1v1h-1zM851 406h1v1h-1zM851 411h1v1h-1zM851 416h1v1h-1zM851 421h1v1h-1zM851 426h1v1h-1zM851 431h1v1h-1zM851 436h1v1h-1zM851 441h1v1h-1zM851 446h1v1h-1zM851 451h1v1h-1zM851 456h1v1h-1zM851 461h1v1h-1zM851 466h1v1h-1zM851 471h1v1h-1zM851 476h1v1h-1zM851 481h1v1h-1zM851 486h1v1h-1zM851 491h1v1h-1zM851 496h1v1h-1zM851 501h1v1h-1zM26 26h1v1h-1zM31 26h1v1h-1zM36 26h1v1h-1zM41 26h1v1h-1zM46 26h1v1h-1zM51 26h1v1h-1zM56 26h1v1h-1zM61 26h1v1h-1zM66 26h1v1h-1zM71 26h1v1h-1zM76 26h1v1h-1zM81 26h1v1h-1zM86 26h1v1h-1zM91 26h1v1h-1zM96 26h1v1h-1zM101 26h1v1h-1zM106 26h1v1h-1zM111 26h1v1h-1zM116 26h1v1h-1zM121 26h1v1h-1zM126 26h1v1h-1zM131 26h1v1h-1zM136 26h1v1h-1zM141 26h1v1h-1zM146 26h1v1h-1zM151 26h1v1h-1zM156 26h1v1h-1zM161 26h1v1h-1zM166 26h1v1h-1zM171 26h1v1h-1zM176 26h1v1h-1zM181 26h1v1h-1zM186 26h1v1h-1zM191 26h1v1h-1zM196 26h1v1h-1zM201 26h1v1h-1zM206 26h1v1h-1zM211 26h1v1h-1zM216 26h1v1h-1zM221 26h1v1h-1zM226 26h1v1h-1zM231 26h1v1h-1zM236 26h1v1h-1zM241 26h1v1h-1zM246 26h1v1h-1zM251 26h1v1h-1zM256 26h1v1h-1zM261 26h1v1h-1zM266 26h1v1h-1zM271 26h1v1h-1zM276 26h1v1h-1zM281 26h1v1h-1zM286 26h1v1h-1zM291 26h1v1h-1zM296 26h1v1h-1zM301 26h1v1h-1zM306 26h1v1h-1zM311 26h1v1h-1zM316 26h1v1h-1zM321 26h1v1h-1zM326 26h1v1h-1zM331 26h1v1h-1zM336 26h1v1h-1zM341 26h1v1h-1zM346 26h1v1h-1zM351 26h1v1h-1zM356 26h1v1h-1zM361 26h1v1h-1zM366 26h1v1h-1zM371 26h1v1h-1zM376 26h1v1h-1zM381 26h1v1h-1zM386 26h1v1h-1zM391 26h1v1h-1zM396 26h1v1h-1zM401 26h1v1h-1zM406 26h1v1h-1zM411 26h1v1h-1zM416 26h1v1h-1zM421 26h1v1h-1zM426 26h1v1h-1zM431 26h1v1h-1zM436 26h1v1h-1zM441 26h1v1h-1zM446 26h1v1h-1zM451 26h1v1h-1zM456 26h1v1h-1zM461 26h1v1h-1zM466 26h1v1h-1zM471 26h1v1h-1zM476 26h1v1h-1zM481 26h1v1h-1zM486 26h1v1h-1zM491 26h1v1h-1zM496 26h1v1h-1zM501 26h1v1h-1zM506 26h1v1h-1zM511 26h1v1h-1zM516 26h1v1h-1zM521 26h1v1h-1zM526 26h1v1h-1zM531 26h1v1h-1zM536 26h1v1h-1zM541 26h1v1h-1zM546 26h1v1h-1zM551 26h1v1h-1zM556 26h1v1h-1zM561 26h1v1h-1zM566 26h1v1h-1zM571 26h1v1h-1zM576 26h1v1h-1zM581 26h1v1h-1zM586 26h1v1h-1zM591 26h1v1h-1zM596 26h1v1h-1zM601 26h1v1h-1zM606 26h1v1h-1zM611 26h1v1h-1zM616 26h1v1h-1zM621 26h1v1h-1zM626 26h1v1h-1zM631 26h1v1h-1zM636 26h1v1h-1zM641 26h1v1h-1zM646 26h1v1h-1zM651 26h1v1h-1zM656 26h1v1h-1zM661 26h1v1h-1zM666 26h1v1h-1zM671 26h1v1h-1zM676 26h1v1h-1zM681 26h1v1h-1zM686 26h1v1h-1zM691 26h1v1h-1zM696 26h1v1h-1zM701 26h1v1h-1zM706 26h1v1h-1zM711 26h1v1h-1zM716 26h1v1h-1zM721 26h1v1h-1zM726 26h1v1h-1zM731 26h1v1h-1zM736 26h1v1h-1zM741 26h1v1h-1zM746 26h1v1h-1zM751 26h1v1h-1zM756 26h1v1h-1zM761 26h1v1h-1zM766 26h1v1h-1zM771 26h1v1h-1zM776 26h1v1h-1zM781 26h1v1h-1zM786 26h1v1h-1zM791 26h1v1h-1zM796 26h1v1h-1zM801 26h1v1h-1zM806 26h1v1h-1zM811 26h1v1h-1zM816 26h1v1h-1zM821 26h1v1h-1zM826 26h1v1h-1zM831 26h1v1h-1zM836 26h1v1h-1zM841 26h1v1h-1zM846 26h1v1h-1zM851 26h1v1h-1zM856 26h1v1h-1zM861 26h1v1h-1zM866 26h1v1h-1zM871 26h1v1h-1zM26 51h1v1h-1zM31 51h1v1h-1zM36 51h1v1h-1zM41 51h1v1h-1zM46 51h1v1h-1zM51 51h1v1h-1zM56 51h1v1h-1zM61 51h1v1h-1zM66 51h1v1h-1zM71 51h1v1h-1zM76 51h1v1h-1zM81 51h1v1h-1zM86 51h1v1h-1zM91 51h1v1h-1zM96 51h1v1h-1zM101 51h1v1h-1zM106 51h1v1h-1zM111 51h1v1h-1zM116 51h1v1h-1zM121 51h1v1h-1zM126 51h1v1h-1zM131 51h1v1h-1zM136 51h1v1h-1zM141 51h1v1h-1zM146 51h1v1h-1zM151 51h1v1h-1zM156 51h1v1h-1zM161 51h1v1h-1zM166 51h1v1h-1zM171 51h1v1h-1zM176 51h1v1h-1zM181 51h1v1h-1zM186 51h1v1h-1zM191 51h1v1h-1zM196 51h1v1h-1zM201 51h1v1h-1zM206 51h1v1h-1zM211 51h1v1h-1zM216 51h1v1h-1zM221 51h1v1h-1zM226 51h1v1h-1zM231 51h1v1h-1zM236 51h1v1h-1zM241 51h1v1h-1zM246 51h1v1h-1zM251 51h1v1h-1zM256 51h1v1h-1zM261 51h1v1h-1zM266 51h1v1h-1zM271 51h1v1h-1zM276 51h1v1h-1zM281 51h1v1h-1zM286 51h1v1h-1zM291 51h1v1h-1zM296 51h1v1h-1zM301 51h1v1h-1zM306 51h1v1h-1zM311 51h1v1h-1zM316 51h1v1h-1zM321 51h1v1h-1zM326 51h1v1h-1zM331 51h1v1h-1zM336 51h1v1h-1zM341 51h1v1h-1zM346 51h1v1h-1zM351 51h1v1h-1zM356 51h1v1h-1zM361 51h1v1h-1zM366 51h1v1h-1zM371 51h1v1h-1zM376 51h1v1h-1zM381 51h1v1h-1zM386 51h1v1h-1zM391 51h1v1h-1zM396 51h1v1h-1zM401 51h1v1h-1zM406 51h1v1h-1zM411 51h1v1h-1zM416 51h1v1h-1zM421 51h1v1h-1zM426 51h1v1h-1zM431 51h1v1h-1zM436 51h1v1h-1zM441 51h1v1h-1zM446 51h1v1h-1zM451 51h1v1h-1zM456 51h1v1h-1zM461 51h1v1h-1zM466 51h1v1h-1zM471 51h1v1h-1zM476 51h1v1h-1zM481 51h1v1h-1zM486 51h1v1h-1zM491 51h1v1h-1zM496 51h1v1h-1zM501 51h1v1h-1zM506 51h1v1h-1zM511 51h1v1h-1zM516 51h1v1h-1zM521 51h1v1h-1zM526 51h1v1h-1zM531 51h1v1h-1zM536 51h1v1h-1zM541 51h1v1h-1zM546 51h1v1h-1zM551 51h1v1h-1zM556 51h1v1h-1zM561 51h1v1h-1zM566 51h1v1h-1zM571 51h1v1h-1zM576 51h1v1h-1zM581 51h1v1h-1zM586 51h1v1h-1zM591 51h1v1h-1zM596 51h1v1h-1zM601 51h1v1h-1zM606 51h1v1h-1zM611 51h1v1h-1zM616 51h1v1h-1zM621 51h1v1h-1zM626 51h1v1h-1zM631 51h1v1h-1zM636 51h1v1h-1zM641 51h1v1h-1zM646 51h1v1h-1zM651 51h1v1h-1zM656 51h1v1h-1zM661 51h1v1h-1zM666 51h1v1h-1zM671 51h1v1h-1zM676 51h1v1h-1zM681 51h1v1h-1zM686 51h1v1h-1zM691 51h1v1h-1zM696 51h1v1h-1zM701 51h1v1h-1zM706 51h1v1h-1zM711 51h1v1h-1zM716 51h1v1h-1zM721 51h1v1h-1zM726 51h1v1h-1zM731 51h1v1h-1zM736 51h1v1h-1zM741 51h1v1h-1zM746 51h1v1h-1zM751 51h1v1h-1zM756 51h1v1h-1zM761 51h1v1h-1zM766 51h1v1h-1zM771 51h1v1h-1zM776 51h1v1h-1zM781 51h1v1h-1zM786 51h1v1h-1zM791 51h1v1h-1zM796 51h1v1h-1zM801 51h1v1h-1zM806 51h1v1h-1zM811 51h1v1h-1zM816 51h1v1h-1zM821 51h1v1h-1zM826 51h1v1h-1zM831 51h1v1h-1zM836 51h1v1h-1zM841 51h1v1h-1zM846 51h1v1h-1zM851 51h1v1h-1zM856 51h1v1h-1zM861 51h1v1h-1zM866 51h1v1h-1zM871 51h1v1h-1zM26 76h1v1h-1zM31 76h1v1h-1zM36 76h1v1h-1zM41 76h1v1h-1zM46 76h1v1h-1zM51 76h1v1h-1zM56 76h1v1h-1zM61 76h1v1h-1zM66 76h1v1h-1zM71 76h1v1h-1zM76 76h1v1h-1zM81 76h1v1h-1zM86 76h1v1h-1zM91 76h1v1h-1zM96 76h1v1h-1zM101 76h1v1h-1zM106 76h1v1h-1zM111 76h1v1h-1zM116 76h1v1h-1zM121 76h1v1h-1zM126 76h1v1h-1zM131 76h1v1h-1zM136 76h1v1h-1zM141 76h1v1h-1zM146 76h1v1h-1zM151 76h1v1h-1zM156 76h1v1h-1zM161 76h1v1h-1zM166 76h1v1h-1zM171 76h1v1h-1zM176 76h1v1h-1zM181 76h1v1h-1zM186 76h1v1h-1zM191 76h1v1h-1zM196 76h1v1h-1zM201 76h1v1h-1zM206 76h1v1h-1zM211 76h1v1h-1zM216 76h1v1h-1zM221 76h1v1h-1zM226 76h1v1h-1zM231 76h1v1h-1zM236 76h1v1h-1zM241 76h1v1h-1zM246 76h1v1h-1zM251 76h1v1h-1zM256 76h1v1h-1zM261 76h1v1h-1zM266 76h1v1h-1zM271 76h1v1h-1zM276 76h1v1h-1zM281 76h1v1h-1zM286 76h1v1h-1zM291 76h1v1h-1zM296 76h1v1h-1zM301 76h1v1h-1zM306 76h1v1h-1zM311 76h1v1h-1zM316 76h1v1h-1zM321 76h1v1h-1zM326 76h1v1h-1zM331 76h1v1h-1zM336 76h1v1h-1zM341 76h1v1h-1zM346 76h1v1h-1zM351 76h1v1h-1zM356 76h1v1h-1zM361 76h1v1h-1zM366 76h1v1h-1zM371 76h1v1h-1zM376 76h1v1h-1zM381 76h1v1h-1zM386 76h1v1h-1zM391 76h1v1h-1zM396 76h1v1h-1zM401 76h1v1h-1zM406 76h1v1h-1zM411 76h1v1h-1zM416 76h1v1h-1zM421 76h1v1h-1zM426 76h1v1h-1zM431 76h1v1h-1zM436 76h1v1h-1zM441 76h1v1h-1zM446 76h1v1h-1zM451 76h1v1h-1zM456 76h1v1h-1zM461 76h1v1h-1zM466 76h1v1h-1zM471 76h1v1h-1zM476 76h1v1h-1zM481 76h1v1h-1zM486 76h1v1h-1zM491 76h1v1h-1zM496 76h1v1h-1zM501 76h1v1h-1zM506 76h1v1h-1zM511 76h1v1h-1zM516 76h1v1h-1zM521 76h1v1h-1zM526 76h1v1h-1zM531 76h1v1h-1zM536 76h1v1h-1zM541 76h1v1h-1zM546 76h1v1h-1zM551 76h1v1h-1zM556 76h1v1h-1zM561 76h1v1h-1zM566 76h1v1h-1zM571 76h1v1h-1zM576 76h1v1h-1zM581 76h1v1h-1zM586 76h1v1h-1zM591 76h1v1h-1zM596 76h1v1h-1zM601 76h1v1h-1zM606 76h1v1h-1zM611 76h1v1h-1zM616 76h1v1h-1zM621 76h1v1h-1zM626 76h1v1h-1zM631 76h1v1h-1zM636 76h1v1h-1zM641 76h1v1h-1zM646 76h1v1h-1zM651 76h1v1h-1zM656 76h1v1h-1zM661 76h1v1h-1zM666 76h1v1h-1zM671 76h1v1h-1zM676 76h1v1h-1zM681 76h1v1h-1zM686 76h1v1h-1zM691 76h1v1h-1zM696 76h1v1h-1zM701 76h1v1h-1zM706 76h1v1h-1zM711 76h1v1h-1zM716 76h1v1h-1zM721 76h1v1h-1zM726 76h1v1h-1zM731 76h1v1h-1zM736 76h1v1h-1zM741 76h1v1h-1zM746 76h1v1h-1zM751 76h1v1h-1zM756 76h1v1h-1zM761 76h1v1h-1zM766 76h1v1h-1zM771 76h1v1h-1zM776 76h1v1h-1zM781 76h1v1h-1zM786 76h1v1h-1zM791 76h1v1h-1zM796 76h1v1h-1zM801 76h1v1h-1zM806 76h1v1h-1zM811 76h1v1h-1zM816 76h1v1h-1zM821 76h1v1h-1zM826 76h1v1h-1zM831 76h1v1h-1zM836 76h1v1h-1zM841 76h1v1h-1zM846 76h1v1h-1zM851 76h1v1h-1zM856 76h1v1h-1zM861 76h1v1h-1zM866 76h1v1h-1zM871 76h1v1h-1zM26 101h1v1h-1zM31 101h1v1h-1zM36 101h1v1h-1zM41 101h1v1h-1zM46 101h1v1h-1zM51 101h1v1h-1zM56 101h1v1h-1zM61 101h1v1h-1zM66 101h1v1h-1zM71 101h1v1h-1zM76 101h1v1h-1zM81 101h1v1h-1zM86 101h1v1h-1zM91 101h1v1h-1zM96 101h1v1h-1zM101 101h1v1h-1zM106 101h1v1h-1zM111 101h1v1h-1zM116 101h1v1h-1zM121 101h1v1h-1zM126 101h1v1h-1zM131 101h1v1h-1zM136 101h1v1h-1zM141 101h1v1h-1zM146 101h1v1h-1zM151 101h1v1h-1zM156 101h1v1h-1zM161 101h1v1h-1zM166 101h1v1h-1zM171 101h1v1h-1zM176 101h1v1h-1zM181 101h1v1h-1zM186 101h1v1h-1zM191 101h1v1h-1zM196 101h1v1h-1zM201 101h1v1h-1zM206 101h1v1h-1zM211 101h1v1h-1zM216 101h1v1h-1zM221 101h1v1h-1zM226 101h1v1h-1zM231 101h1v1h-1zM236 101h1v1h-1zM241 101h1v1h-1zM246 101h1v1h-1zM251 101h1v1h-1zM256 101h1v1h-1zM261 101h1v1h-1zM266 101h1v1h-1zM271 101h1v1h-1zM276 101h1v1h-1zM281 101h1v1h-1zM286 101h1v1h-1zM291 101h1v1h-1zM296 101h1v1h-1zM301 101h1v1h-1zM306 101h1v1h-1zM311 101h1v1h-1zM316 101h1v1h-1zM321 101h1v1h-1zM326 101h1v1h-1zM331 101h1v1h-1zM336 101h1v1h-1zM341 101h1v1h-1zM346 101h1v1h-1zM351 101h1v1h-1zM356 101h1v1h-1zM361 101h1v1h-1zM366 101h1v1h-1zM371 101h1v1h-1zM376 101h1v1h-1zM381 101h1v1h-1zM386 101h1v1h-1zM391 101h1v1h-1zM396 101h1v1h-1zM401 101h1v1h-1zM406 101h1v1h-1zM411 101h1v1h-1zM416 101h1v1h-1zM421 101h1v1h-1zM426 101h1v1h-1zM431 101h1v1h-1zM436 101h1v1h-1zM441 101h1v1h-1zM446 101h1v1h-1zM451 101h1v1h-1zM456 101h1v1h-1zM461 101h1v1h-1zM466 101h1v1h-1zM471 101h1v1h-1zM476 101h1v1h-1zM481 101h1v1h-1zM486 101h1v1h-1zM491 101h1v1h-1zM496 101h1v1h-1zM501 101h1v1h-1zM506 101h1v1h-1zM511 101h1v1h-1zM516 101h1v1h-1zM521 101h1v1h-1zM526 101h1v1h-1zM531 101h1v1h-1zM536 101h1v1h-1zM541 101h1v1h-1zM546 101h1v1h-1zM551 101h1v1h-1zM556 101h1v1h-1zM561 101h1v1h-1zM566 101h1v1h-1zM571 101h1v1h-1zM576 101h1v1h-1zM581 101h1v1h-1zM586 101h1v1h-1zM591 101h1v1h-1zM596 101h1v1h-1zM601 101h1v1h-1zM606 101h1v1h-1zM611 101h1v1h-1zM616 101h1v1h-1zM621 101h1v1h-1zM626 101h1v1h-1zM631 101h1v1h-1zM636 101h1v1h-1zM641 101h1v1h-1zM646 101h1v1h-1zM651 101h1v1h-1zM656 101h1v1h-1zM661 101h1v1h-1zM666 101h1v1h-1zM671 101h1v1h-1zM676 101h1v1h-1zM681 101h1v1h-1zM686 101h1v1h-1zM691 101h1v1h-1zM696 101h1v1h-1zM701 101h1v1h-1zM706 101h1v1h-1zM711 101h1v1h-1zM716 101h1v1h-1zM721 101h1v1h-1zM726 101h1v1h-1zM731 101h1v1h-1zM736 101h1v1h-1zM741 101h1v1h-1zM746 101h1v1h-1zM751 101h1v1h-1zM756 101h1v1h-1zM761 101h1v1h-1zM766 101h1v1h-1zM771 101h1v1h-1zM776 101h1v1h-1zM781 101h1v1h-1zM786 101h1v1h-1zM791 101h1v1h-1zM796 101h1v1h-1zM801 101h1v1h-1zM806 101h1v1h-1zM811 101h1v1h-1zM816 101h1v1h-1zM821 101h1v1h-1zM826 101h1v1h-1zM831 101h1v1h-1zM836 101h1v1h-1zM841 101h1v1h-1zM846 101h1v1h-1zM851 101h1v1h-1zM856 101h1v1h-1zM861 101h1v1h-1zM866 101h1v1h-1zM871 101h1v1h-1zM26 126h1v1h-1zM31 126h1v1h-1zM36 126h1v1h-1zM41 126h1v1h-1zM46 126h1v1h-1zM51 126h1v1h-1zM56 126h1v1h-1zM61 126h1v1h-1zM66 126h1v1h-1zM71 126h1v1h-1zM76 126h1v1h-1zM81 126h1v1h-1zM86 126h1v1h-1zM91 126h1v1h-1zM96 126h1v1h-1zM101 126h1v1h-1zM106 126h1v1h-1zM111 126h1v1h-1zM116 126h1v1h-1zM121 126h1v1h-1zM126 126h1v1h-1zM131 126h1v1h-1zM136 126h1v1h-1zM141 126h1v1h-1zM146 126h1v1h-1zM151 126h1v1h-1zM156 126h1v1h-1zM161 126h1v1h-1zM166 126h1v1h-1zM171 126h1v1h-1zM176 126h1v1h-1zM181 126h1v1h-1zM186 126h1v1h-1zM191 126h1v1h-1zM196 126h1v1h-1zM201 126h1v1h-1zM206 126h1v1h-1zM211 126h1v1h-1zM216 126h1v1h-1zM221 126h1v1h-1zM226 126h1v1h-1zM231 126h1v1h-1zM236 126h1v1h-1zM241 126h1v1h-1zM246 126h1v1h-1zM251 126h1v1h-1zM256 126h1v1h-1zM261 126h1v1h-1zM266 126h1v1h-1zM271 126h1v1h-1zM276 126h1v1h-1zM281 126h1v1h-1zM286 126h1v1h-1zM291 126h1v1h-1zM296 126h1v1h-1zM301 126h1v1h-1zM306 126h1v1h-1zM311 126h1v1h-1zM316 126h1v1h-1zM321 126h1v1h-1zM326 126h1v1h-1zM331 126h1v1h-1zM336 126h1v1h-1zM341 126h1v1h-1zM346 126h1v1h-1zM351 126h1v1h-1zM356 126h1v1h-1zM361 126h1v1h-1zM366 126h1v1h-1zM371 126h1v1h-1zM376 126h1v1h-1zM381 126h1v1h-1zM386 126h1v1h-1zM391 126h1v1h-1zM396 126h1v1h-1zM401 126h1v1h-1zM406 126h1v1h-1zM411 126h1v1h-1zM416 126h1v1h-1zM421 126h1v1h-1zM426 126h1v1h-1zM431 126h1v1h-1zM436 126h1v1h-1zM441 126h1v1h-1zM446 126h1v1h-1zM451 126h1v1h-1zM456 126h1v1h-1zM461 126h1v1h-1zM466 126h1v1h-1zM471 126h1v1h-1zM476 126h1v1h-1zM481 126h1v1h-1zM486 126h1v1h-1zM491 126h1v1h-1zM496 126h1v1h-1zM501 126h1v1h-1zM506 126h1v1h-1zM511 126h1v1h-1zM516 126h1v1h-1zM521 126h1v1h-1zM526 126h1v1h-1zM531 126h1v1h-1zM536 126h1v1h-1zM541 126h1v1h-1zM546 126h1v1h-1zM551 126h1v1h-1zM556 126h1v1h-1zM561 126h1v1h-1zM566 126h1v1h-1zM571 126h1v1h-1zM576 126h1v1h-1zM581 126h1v1h-1zM586 126h1v1h-1zM591 126h1v1h-1zM596 126h1v1h-1zM601 126h1v1h-1zM606 126h1v1h-1zM611 126h1v1h-1zM616 126h1v1h-1zM621 126h1v1h-1zM626 126h1v1h-1zM631 126h1v1h-1zM636 126h1v1h-1zM641 126h1v1h-1zM646 126h1v1h-1zM651 126h1v1h-1zM656 126h1v1h-1zM661 126h1v1h-1zM666 126h1v1h-1zM671 126h1v1h-1zM676 126h1v1h-1zM681 126h1v1h-1zM686 126h1v1h-1zM691 126h1v1h-1zM696 126h1v1h-1zM701 126h1v1h-1zM706 126h1v1h-1zM711 126h1v1h-1zM716 126h1v1h-1zM721 126h1v1h-1zM726 126h1v1h-1zM731 126h1v1h-1zM736 126h1v1h-1zM741 126h1v1h-1zM746 126h1v1h-1zM751 126h1v1h-1zM756 126h1v1h-1zM761 126h1v1h-1zM766 126h1v1h-1zM771 126h1v1h-1zM776 126h1v1h-1zM781 126h1v1h-1zM786 126h1v1h-1zM791 126h1v1h-1zM796 126h1v1h-1zM801 126h1v1h-1zM806 126h1v1h-1zM811 126h1v1h-1zM816 126h1v1h-1zM821 126h1v1h-1zM826 126h1v1h-1zM831 126h1v1h-1zM836 126h1v1h-1zM841 126h1v1h-1zM846 126h1v1h-1zM851 126h1v1h-1zM856 126h1v1h-1zM861 126h1v1h-1zM866 126h1v1h-1zM871 126h1v1h-1zM26 151h1v1h-1zM31 151h1v1h-1zM36 151h1v1h-1zM41 151h1v1h-1zM46 151h1v1h-1zM51 151h1v1h-1zM56 151h1v1h-1zM61 151h1v1h-1zM66 151h1v1h-1zM71 151h1v1h-1zM76 151h1v1h-1zM81 151h1v1h-1zM86 151h1v1h-1zM91 151h1v1h-1zM96 151h1v1h-1zM101 151h1v1h-1zM106 151h1v1h-1zM111 151h1v1h-1zM116 151h1v1h-1zM121 151h1v1h-1zM126 151h1v1h-1zM131 151h1v1h-1zM136 151h1v1h-1zM141 151h1v1h-1zM146 151h1v1h-1zM151 151h1v1h-1zM156 151h1v1h-1zM161 151h1v1h-1zM166 151h1v1h-1zM171 151h1v1h-1zM176 151h1v1h-1zM181 151h1v1h-1zM186 151h1v1h-1zM191 151h1v1h-1zM196 151h1v1h-1zM201 151h1v1h-1zM206 151h1v1h-1zM211 151h1v1h-1zM216 151h1v1h-1zM221 151h1v1h-1zM226 151h1v1h-1zM231 151h1v1h-1zM236 151h1v1h-1zM241 151h1v1h-1zM246 151h1v1h-1zM251 151h1v1h-1zM256 151h1v1h-1zM261 151h1v1h-1zM266 151h1v1h-1zM271 151h1v1h-1zM276 151h1v1h-1zM281 151h1v1h-1zM286 151h1v1h-1zM291 151h1v1h-1zM296 151h1v1h-1zM301 151h1v1h-1zM306 151h1v1h-1zM311 151h1v1h-1zM316 151h1v1h-1zM321 151h1v1h-1zM326 151h1v1h-1zM331 151h1v1h-1zM336 151h1v1h-1zM341 151h1v1h-1zM346 151h1v1h-1zM351 151h1v1h-1zM356 151h1v1h-1zM361 151h1v1h-1zM366 151h1v1h-1zM371 151h1v1h-1zM376 151h1v1h-1zM381 151h1v1h-1zM386 151h1v1h-1zM391 151h1v1h-1zM396 151h1v1h-1zM401 151h1v1h-1zM406 151h1v1h-1zM411 151h1v1h-1zM416 151h1v1h-1zM421 151h1v1h-1zM426 151h1v1h-1zM431 151h1v1h-1zM436 151h1v1h-1zM441 151h1v1h-1zM446 151h1v1h-1zM451 151h1v1h-1zM456 151h1v1h-1zM461 151h1v1h-1zM466 151h1v1h-1zM471 151h1v1h-1zM476 151h1v1h-1zM481 151h1v1h-1zM486 151h1v1h-1zM491 151h1v1h-1zM496 151h1v1h-1zM501 151h1v1h-1zM506 151h1v1h-1zM511 151h1v1h-1zM516 151h1v1h-1zM521 151h1v1h-1zM526 151h1v1h-1zM531 151h1v1h-1zM536 151h1v1h-1zM541 151h1v1h-1zM546 151h1v1h-1zM551 151h1v1h-1zM556 151h1v1h-1zM561 151h1v1h-1zM566 151h1v1h-1zM571 151h1v1h-1zM576 151h1v1h-1zM581 151h1v1h-1zM586 151h1v1h-1zM591 151h1v1h-1zM596 151h1v1h-1zM601 151h1v1h-1zM606 151h1v1h-1zM611 151h1v1h-1zM616 151h1v1h-1zM621 151h1v1h-1zM626 151h1v1h-1zM631 151h1v1h-1zM636 151h1v1h-1zM641 151h1v1h-1zM646 151h1v1h-1zM651 151h1v1h-1zM656 151h1v1h-1zM661 151h1v1h-1zM666 151h1v1h-1zM671 151h1v1h-1zM676 151h1v1h-1zM681 151h1v1h-1zM686 151h1v1h-1zM691 151h1v1h-1zM696 151h1v1h-1zM701 151h1v1h-1zM706 151h1v1h-1zM711 151h1v1h-1zM716 151h1v1h-1zM721 151h1v1h-1zM726 151h1v1h-1zM731 151h1v1h-1zM736 151h1v1h-1zM741 151h1v1h-1zM746 151h1v1h-1zM751 151h1v1h-1zM756 151h1v1h-1zM761 151h1v1h-1zM766 151h1v1h-1zM771 151h1v1h-1zM776 151h1v1h-1zM781 151h1v1h-1zM786 151h1v1h-1zM791 151h1v1h-1zM796 151h1v1h-1zM801 151h1v1h-1zM806 151h1v1h-1zM811 151h1v1h-1zM816 151h1v1h-1zM821 151h1v1h-1zM826 151h1v1h-1zM831 151h1v1h-1zM836 151h1v1h-1zM841 151h1v1h-1zM846 151h1v1h-1zM851 151h1v1h-1zM856 151h1v1h-1zM861 151h1v1h-1zM866 151h1v1h-1zM871 151h1v1h-1zM26 176h1v1h-1zM31 176h1v1h-1zM36 176h1v1h-1zM41 176h1v1h-1zM46 176h1v1h-1zM51 176h1v1h-1zM56 176h1v1h-1zM61 176h1v1h-1zM66 176h1v1h-1zM71 176h1v1h-1zM76 176h1v1h-1zM81 176h1v1h-1zM86 176h1v1h-1zM91 176h1v1h-1zM96 176h1v1h-1zM101 176h1v1h-1zM106 176h1v1h-1zM111 176h1v1h-1zM116 176h1v1h-1zM121 176h1v1h-1zM126 176h1v1h-1zM131 176h1v1h-1zM136 176h1v1h-1zM141 176h1v1h-1zM146 176h1v1h-1zM151 176h1v1h-1zM156 176h1v1h-1zM161 176h1v1h-1zM166 176h1v1h-1zM171 176h1v1h-1zM176 176h1v1h-1zM181 176h1v1h-1zM186 176h1v1h-1zM191 176h1v1h-1zM196 176h1v1h-1zM201 176h1v1h-1zM206 176h1v1h-1zM211 176h1v1h-1zM216 176h1v1h-1zM221 176h1v1h-1zM226 176h1v1h-1zM231 176h1v1h-1zM236 176h1v1h-1zM241 176h1v1h-1zM246 176h1v1h-1zM251 176h1v1h-1zM256 176h1v1h-1zM261 176h1v1h-1zM266 176h1v1h-1zM271 176h1v1h-1zM276 176h1v1h-1zM281 176h1v1h-1zM286 176h1v1h-1zM291 176h1v1h-1zM296 176h1v1h-1zM301 176h1v1h-1zM306 176h1v1h-1zM311 176h1v1h-1zM316 176h1v1h-1zM321 176h1v1h-1zM326 176h1v1h-1zM331 176h1v1h-1zM336 176h1v1h-1zM341 176h1v1h-1zM346 176h1v1h-1zM351 176h1v1h-1zM356 176h1v1h-1zM361 176h1v1h-1zM366 176h1v1h-1zM371 176h1v1h-1zM376 176h1v1h-1zM381 176h1v1h-1zM386 176h1v1h-1zM391 176h1v1h-1zM396 176h1v1h-1zM401 176h1v1h-1zM406 176h1v1h-1zM411 176h1v1h-1zM416 176h1v1h-1zM421 176h1v1h-1zM426 176h1v1h-1zM431 176h1v1h-1zM436 176h1v1h-1zM441 176h1v1h-1zM446 176h1v1h-1zM451 176h1v1h-1zM456 176h1v1h-1zM461 176h1v1h-1zM466 176h1v1h-1zM471 176h1v1h-1zM476 176h1v1h-1zM481 176h1v1h-1zM486 176h1v1h-1zM491 176h1v1h-1zM496 176h1v1h-1zM501 176h1v1h-1zM506 176h1v1h-1zM511 176h1v1h-1zM516 176h1v1h-1zM521 176h1v1h-1zM526 176h1v1h-1zM531 176h1v1h-1zM536 176h1v1h-1zM541 176h1v1h-1zM546 176h1v1h-1zM551 176h1v1h-1zM556 176h1v1h-1zM561 176h1v1h-1zM566 176h1v1h-1zM571 176h1v1h-1zM576 176h1v1h-1zM581 176h1v1h-1zM586 176h1v1h-1zM591 176h1v1h-1zM596 176h1v1h-1zM601 176h1v1h-1zM606 176h1v1h-1zM611 176h1v1h-1zM616 176h1v1h-1zM621 176h1v1h-1zM626 176h1v1h-1zM631 176h1v1h-1zM636 176h1v1h-1zM641 176h1v1h-1zM646 176h1v1h-1zM651 176h1v1h-1zM656 176h1v1h-1zM661 176h1v1h-1zM666 176h1v1h-1zM671 176h1v1h-1zM676 176h1v1h-1zM681 176h1v1h-1zM686 176h1v1h-1zM691 176h1v1h-1zM696 176h1v1h-1zM701 176h1v1h-1zM706 176h1v1h-1zM711 176h1v1h-1zM716 176h1v1h-1zM721 176h1v1h-1zM726 176h1v1h-1zM731 176h1v1h-1zM736 176h1v1h-1zM741 176h1v1h-1zM746 176h1v1h-1zM751 176h1v1h-1zM756 176h1v1h-1zM761 176h1v1h-1zM766 176h1v1h-1zM771 176h1v1h-1zM776 176h1v1h-1zM781 176h1v1h-1zM786 176h1v1h-1zM791 176h1v1h-1zM796 176h1v1h-1zM801 176h1v1h-1zM806 176h1v1h-1zM811 176h1v1h-1zM816 176h1v1h-1zM821 176h1v1h-1zM826 176h1v1h-1zM831 176h1v1h-1zM836 176h1v1h-1zM841 176h1v1h-1zM846 176h1v1h-1zM851 176h1v1h-1zM856 176h1v1h-1zM861 176h1v1h-1zM866 176h1v1h-1zM871 176h1v1h-1zM26 201h1v1h-1zM31 201h1v1h-1zM36 201h1v1h-1zM41 201h1v1h-1zM46 201h1v1h-1zM51 201h1v1h-1zM56 201h1v1h-1zM61 201h1v1h-1zM66 201h1v1h-1zM71 201h1v1h-1zM76 201h1v1h-1zM81 201h1v1h-1zM86 201h1v1h-1zM91 201h1v1h-1zM96 201h1v1h-1zM101 201h1v1h-1zM106 201h1v1h-1zM111 201h1v1h-1zM116 201h1v1h-1zM121 201h1v1h-1zM126 201h1v1h-1zM131 201h1v1h-1zM136 201h1v1h-1zM141 201h1v1h-1zM146 201h1v1h-1zM151 201h1v1h-1zM156 201h1v1h-1zM161 201h1v1h-1zM166 201h1v1h-1zM171 201h1v1h-1zM176 201h1v1h-1zM181 201h1v1h-1zM186 201h1v1h-1zM191 201h1v1h-1zM196 201h1v1h-1zM201 201h1v1h-1zM206 201h1v1h-1zM211 201h1v1h-1zM216 201h1v1h-1zM221 201h1v1h-1zM226 201h1v1h-1zM231 201h1v1h-1zM236 201h1v1h-1zM241 201h1v1h-1zM246 201h1v1h-1zM251 201h1v1h-1zM256 201h1v1h-1zM261 201h1v1h-1zM266 201h1v1h-1zM271 201h1v1h-1zM276 201h1v1h-1zM281 201h1v1h-1zM286 201h1v1h-1zM291 201h1v1h-1zM296 201h1v1h-1zM301 201h1v1h-1zM306 201h1v1h-1zM311 201h1v1h-1zM316 201h1v1h-1zM321 201h1v1h-1zM326 201h1v1h-1zM331 201h1v1h-1zM336 201h1v1h-1zM341 201h1v1h-1zM346 201h1v1h-1zM351 201h1v1h-1zM356 201h1v1h-1zM361 201h1v1h-1zM366 201h1v1h-1zM371 201h1v1h-1zM376 201h1v1h-1zM381 201h1v1h-1zM386 201h1v1h-1zM391 201h1v1h-1zM396 201h1v1h-1zM401 201h1v1h-1zM406 201h1v1h-1zM411 201h1v1h-1zM416 201h1v1h-1zM421 201h1v1h-1zM426 201h1v1h-1zM431 201h1v1h-1zM436 201h1v1h-1zM441 201h1v1h-1zM446 201h1v1h-1zM451 201h1v1h-1zM456 201h1v1h-1zM461 201h1v1h-1zM466 201h1v1h-1zM471 201h1v1h-1zM476 201h1v1h-1zM481 201h1v1h-1zM486 201h1v1h-1zM491 201h1v1h-1zM496 201h1v1h-1zM501 201h1v1h-1zM506 201h1v1h-1zM511 201h1v1h-1zM516 201h1v1h-1zM521 201h1v1h-1zM526 201h1v1h-1zM531 201h1v1h-1zM536 201h1v1h-1zM541 201h1v1h-1zM546 201h1v1h-1zM551 201h1v1h-1zM556 201h1v1h-1zM561 201h1v1h-1zM566 201h1v1h-1zM571 201h1v1h-1zM576 201h1v1h-1zM581 201h1v1h-1zM586 201h1v1h-1zM591 201h1v1h-1zM596 201h1v1h-1zM601 201h1v1h-1zM606 201h1v1h-1zM611 201h1v1h-1zM616 201h1v1h-1zM621 201h1v1h-1zM626 201h1v1h-1zM631 201h1v1h-1zM636 201h1v1h-1zM641 201h1v1h-1zM646 201h1v1h-1zM651 201h1v1h-1zM656 201h1v1h-1zM661 201h1v1h-1zM666 201h1v1h-1zM671 201h1v1h-1zM676 201h1v1h-1zM681 201h1v1h-1zM686 201h1v1h-1zM691 201h1v1h-1zM696 201h1v1h-1zM701 201h1v1h-1zM706 201h1v1h-1zM711 201h1v1h-1zM716 201h1v1h-1zM721 201h1v1h-1zM726 201h1v1h-1zM731 201h1v1h-1zM736 201h1v1h-1zM741 201h1v1h-1zM746 201h1v1h-1zM751 201h1v1h-1zM756 201h1v1h-1zM761 201h1v1h-1zM766 201h1v1h-1zM771 201h1v1h-1zM776 201h1v1h-1zM781 201h1v1h-1zM786 201h1v1h-1zM791 201h1v1h-1zM796 201h1v1h-1zM801 201h1v1h-1zM806 201h1v1h-1zM811 201h1v1h-1zM816 201h1v1h-1zM821 201h1v1h-1zM826 201h1v1h-1zM831 201h1v1h-1zM836 201h1v1h-1zM841 201h1v1h-1zM846 201h1v1h-1zM851 201h1v1h-1zM856 201h1v1h-1zM861 201h1v1h-1zM866 201h1v1h-1zM871 201h1v1h-1zM26 226h1v1h-1zM31 226h1v1h-1zM36 226h1v1h-1zM41 226h1v1h-1zM46 226h1v1h-1zM51 226h1v1h-1zM56 226h1v1h-1zM61 226h1v1h-1zM66 226h1v1h-1zM71 226h1v1h-1zM76 226h1v1h-1zM81 226h1v1h-1zM86 226h1v1h-1zM91 226h1v1h-1zM96 226h1v1h-1zM101 226h1v1h-1zM106 226h1v1h-1zM111 226h1v1h-1zM116 226h1v1h-1zM121 226h1v1h-1zM126 226h1v1h-1zM131 226h1v1h-1zM136 226h1v1h-1zM141 226h1v1h-1zM146 226h1v1h-1zM151 226h1v1h-1zM156 226h1v1h-1zM161 226h1v1h-1zM166 226h1v1h-1zM171 226h1v1h-1zM176 226h1v1h-1zM181 226h1v1h-1zM186 226h1v1h-1zM191 226h1v1h-1zM196 226h1v1h-1zM201 226h1v1h-1zM206 226h1v1h-1zM211 226h1v1h-1zM216 226h1v1h-1zM221 226h1v1h-1zM226 226h1v1h-1zM231 226h1v1h-1zM236 226h1v1h-1zM241 226h1v1h-1zM246 226h1v1h-1zM251 226h1v1h-1zM256 226h1v1h-1zM261 226h1v1h-1zM266 226h1v1h-1zM271 226h1v1h-1zM276 226h1v1h-1zM281 226h1v1h-1zM286 226h1v1h-1zM291 226h1v1h-1zM296 226h1v1h-1zM301 226h1v1h-1zM306 226h1v1h-1zM311 226h1v1h-1zM316 226h1v1h-1zM321 226h1v1h-1zM326 226h1v1h-1zM331 226h1v1h-1zM336 226h1v1h-1zM341 226h1v1h-1zM346 226h1v1h-1zM351 226h1v1h-1zM356 226h1v1h-1zM361 226h1v1h-1zM366 226h1v1h-1zM371 226h1v1h-1zM376 226h1v1h-1zM381 226h1v1h-1zM386 226h1v1h-1zM391 226h1v1h-1zM396 226h1v1h-1zM401 226h1v1h-1zM406 226h1v1h-1zM411 226h1v1h-1zM416 226h1v1h-1zM421 226h1v1h-1zM426 226h1v1h-1zM431 226h1v1h-1zM436 226h1v1h-1zM441 226h1v1h-1zM446 226h1v1h-1zM451 226h1v1h-1zM456 226h1v1h-1zM461 226h1v1h-1zM466 226h1v1h-1zM471 226h1v1h-1zM476 226h1v1h-1zM481 226h1v1h-1zM486 226h1v1h-1zM491 226h1v1h-1zM496 226h1v1h-1zM501 226h1v1h-1zM506 226h1v1h-1zM511 226h1v1h-1zM516 226h1v1h-1zM521 226h1v1h-1zM526 226h1v1h-1zM531 226h1v1h-1zM536 226h1v1h-1zM541 226h1v1h-1zM546 226h1v1h-1zM551 226h1v1h-1zM556 226h1v1h-1zM561 226h1v1h-1zM566 226h1v1h-1zM571 226h1v1h-1zM576 226h1v1h-1zM581 226h1v1h-1zM586 226h1v1h-1zM591 226h1v1h-1zM596 226h1v1h-1zM601 226h1v1h-1zM606 226h1v1h-1zM611 226h1v1h-1zM616 226h1v1h-1zM621 226h1v1h-1zM626 226h1v1h-1zM631 226h1v1h-1zM636 226h1v1h-1zM641 226h1v1h-1zM646 226h1v1h-1zM651 226h1v1h-1zM656 226h1v1h-1zM661 226h1v1h-1zM666 226h1v1h-1zM671 226h1v1h-1zM676 226h1v1h-1zM681 226h1v1h-1zM686 226h1v1h-1zM691 226h1v1h-1zM696 226h1v1h-1zM701 226h1v1h-1zM706 226h1v1h-1zM711 226h1v1h-1zM716 226h1v1h-1zM721 226h1v1h-1zM726 226h1v1h-1zM731 226h1v1h-1zM736 226h1v1h-1zM741 226h1v1h-1zM746 226h1v1h-1zM751 226h1v1h-1zM756 226h1v1h-1zM761 226h1v1h-1zM766 226h1v1h-1zM771 226h1v1h-1zM776 226h1v1h-1zM781 226h1v1h-1zM786 226h1v1h-1zM791 226h1v1h-1zM796 226h1v1h-1zM801 226h1v1h-1zM806 226h1v1h-1zM811 226h1v1h-1zM816 226h1v1h-1zM821 226h1v1h-1zM826 226h1v1h-1zM831 226h1v1h-1zM836 226h1v1h-1zM841 226h1v1h-1zM846 226h1v1h-1zM851 226h1v1h-1zM856 226h1v1h-1zM861 226h1v1h-1zM866 226h1v1h-1zM871 226h1v1h-1zM26 251h1v1h-1zM31 251h1v1h-1zM36 251h1v1h-1zM41 251h1v1h-1zM46 251h1v1h-1zM51 251h1v1h-1zM56 251h1v1h-1zM61 251h1v1h-1zM66 251h1v1h-1zM71 251h1v1h-1zM76 251h1v1h-1zM81 251h1v1h-1zM86 251h1v1h-1zM91 251h1v1h-1zM96 251h1v1h-1zM101 251h1v1h-1zM106 251h1v1h-1zM111 251h1v1h-1zM116 251h1v1h-1zM121 251h1v1h-1zM126 251h1v1h-1zM131 251h1v1h-1zM136 251h1v1h-1zM141 251h1v1h-1zM146 251h1v1h-1zM151 251h1v1h-1zM156 251h1v1h-1zM161 251h1v1h-1zM166 251h1v1h-1zM171 251h1v1h-1zM176 251h1v1h-1zM181 251h1v1h-1zM186 251h1v1h-1zM191 251h1v1h-1zM196 251h1v1h-1zM201 251h1v1h-1zM206 251h1v1h-1zM211 251h1v1h-1zM216 251h1v1h-1zM221 251h1v1h-1zM226 251h1v1h-1zM231 251h1v1h-1zM236 251h1v1h-1zM241 251h1v1h-1zM246 251h1v1h-1zM251 251h1v1h-1zM256 251h1v1h-1zM261 251h1v1h-1zM266 251h1v1h-1zM271 251h1v1h-1zM276 251h1v1h-1zM281 251h1v1h-1zM286 251h1v1h-1zM291 251h1v1h-1zM296 251h1v1h-1zM301 251h1v1h-1zM306 251h1v1h-1zM311 251h1v1h-1zM316 251h1v1h-1zM321 251h1v1h-1zM326 251h1v1h-1zM331 251h1v1h-1zM336 251h1v1h-1zM341 251h1v1h-1zM346 251h1v1h-1zM351 251h1v1h-1zM356 251h1v1h-1zM361 251h1v1h-1zM366 251h1v1h-1zM371 251h1v1h-1zM376 251h1v1h-1zM381 251h1v1h-1zM386 251h1v1h-1zM391 251h1v1h-1zM396 251h1v1h-1zM401 251h1v1h-1zM406 251h1v1h-1zM411 251h1v1h-1zM416 251h1v1h-1zM421 251h1v1h-1zM426 251h1v1h-1zM431 251h1v1h-1zM436 251h1v1h-1zM441 251h1v1h-1zM446 251h1v1h-1zM451 251h1v1h-1zM456 251h1v1h-1zM461 251h1v1h-1zM466 251h1v1h-1zM471 251h1v1h-1zM476 251h1v1h-1zM481 251h1v1h-1zM486 251h1v1h-1zM491 251h1v1h-1zM496 251h1v1h-1zM501 251h1v1h-1zM506 251h1v1h-1zM511 251h1v1h-1zM516 251h1v1h-1zM521 251h1v1h-1zM526 251h1v1h-1zM531 251h1v1h-1zM536 251h1v1h-1zM541 251h1v1h-1zM546 251h1v1h-1zM551 251h1v1h-1zM556 251h1v1h-1zM561 251h1v1h-1zM566 251h1v1h-1zM571 251h1v1h-1zM576 251h1v1h-1zM581 251h1v1h-1zM586 251h1v1h-1zM591 251h1v1h-1zM596 251h1v1h-1zM601 251h1v1h-1zM606 251h1v1h-1zM611 251h1v1h-1zM616 251h1v1h-1zM621 251h1v1h-1zM626 251h1v1h-1zM631 251h1v1h-1zM636 251h1v1h-1zM641 251h1v1h-1zM646 251h1v1h-1zM651 251h1v1h-1zM656 251h1v1h-1zM661 251h1v1h-1zM666 251h1v1h-1zM671 251h1v1h-1zM676 251h1v1h-1zM681 251h1v1h-1zM686 251h1v1h-1zM691 251h1v1h-1zM696 251h1v1h-1zM701 251h1v1h-1zM706 251h1v1h-1zM711 251h1v1h-1zM716 251h1v1h-1zM721 251h1v1h-1zM726 251h1v1h-1zM731 251h1v1h-1zM736 251h1v1h-1zM741 251h1v1h-1zM746 251h1v1h-1zM751 251h1v1h-1zM756 251h1v1h-1zM761 251h1v1h-1zM766 251h1v1h-1zM771 251h1v1h-1zM776 251h1v1h-1zM781 251h1v1h-1zM786 251h1v1h-1zM791 251h1v1h-1zM796 251h1v1h-1zM801 251h1v1h-1zM806 251h1v1h-1zM811 251h1v1h-1zM816 251h1v1h-1zM821 251h1v1h-1zM826 251h1v1h-1zM831 251h1v1h-1zM836 251h1v1h-1zM841 251h1v1h-1zM846 251h1v1h-1zM851 251h1v1h-1zM856 251h1v1h-1zM861 251h1v1h-1zM866 251h1v1h-1zM871 251h1v1h-1zM26 276h1v1h-1zM31 276h1v1h-1zM36 276h1v1h-1zM41 276h1v1h-1zM46 276h1v1h-1zM51 276h1v1h-1zM56 276h1v1h-1zM61 276h1v1h-1zM66 276h1v1h-1zM71 276h1v1h-1zM76 276h1v1h-1zM81 276h1v1h-1zM86 276h1v1h-1zM91 276h1v1h-1zM96 276h1v1h-1zM101 276h1v1h-1zM106 276h1v1h-1zM111 276h1v1h-1zM116 276h1v1h-1zM121 276h1v1h-1zM126 276h1v1h-1zM131 276h1v1h-1zM136 276h1v1h-1zM141 276h1v1h-1zM146 276h1v1h-1zM151 276h1v1h-1zM156 276h1v1h-1zM161 276h1v1h-1zM166 276h1v1h-1zM171 276h1v1h-1zM176 276h1v1h-1zM181 276h1v1h-1zM186 276h1v1h-1zM191 276h1v1h-1zM196 276h1v1h-1zM201 276h1v1h-1zM206 276h1v1h-1zM211 276h1v1h-1zM216 276h1v1h-1zM221 276h1v1h-1zM226 276h1v1h-1zM231 276h1v1h-1zM236 276h1v1h-1zM241 276h1v1h-1zM246 276h1v1h-1zM251 276h1v1h-1zM256 276h1v1h-1zM261 276h1v1h-1zM266 276h1v1h-1zM271 276h1v1h-1zM276 276h1v1h-1zM281 276h1v1h-1zM286 276h1v1h-1zM291 276h1v1h-1zM296 276h1v1h-1zM301 276h1v1h-1zM306 276h1v1h-1zM311 276h1v1h-1zM316 276h1v1h-1zM321 276h1v1h-1zM326 276h1v1h-1zM331 276h1v1h-1zM336 276h1v1h-1zM341 276h1v1h-1zM346 276h1v1h-1zM351 276h1v1h-1zM356 276h1v1h-1zM361 276h1v1h-1zM366 276h1v1h-1zM371 276h1v1h-1zM376 276h1v1h-1zM381 276h1v1h-1zM386 276h1v1h-1zM391 276h1v1h-1zM396 276h1v1h-1zM401 276h1v1h-1zM406 276h1v1h-1zM411 276h1v1h-1zM416 276h1v1h-1zM421 276h1v1h-1zM426 276h1v1h-1zM431 276h1v1h-1zM436 276h1v1h-1zM441 276h1v1h-1zM446 276h1v1h-1zM451 276h1v1h-1zM456 276h1v1h-1zM461 276h1v1h-1zM466 276h1v1h-1zM471 276h1v1h-1zM476 276h1v1h-1zM481 276h1v1h-1zM486 276h1v1h-1zM491 276h1v1h-1zM496 276h1v1h-1zM501 276h1v1h-1zM506 276h1v1h-1zM511 276h1v1h-1zM516 276h1v1h-1zM521 276h1v1h-1zM526 276h1v1h-1zM531 276h1v1h-1zM536 276h1v1h-1zM541 276h1v1h-1zM546 276h1v1h-1zM551 276h1v1h-1zM556 276h1v1h-1zM561 276h1v1h-1zM566 276h1v1h-1zM571 276h1v1h-1zM576 276h1v1h-1zM581 276h1v1h-1zM586 276h1v1h-1zM591 276h1v1h-1zM596 276h1v1h-1zM601 276h1v1h-1zM606 276h1v1h-1zM611 276h1v1h-1zM616 276h1v1h-1zM621 276h1v1h-1zM626 276h1v1h-1zM631 276h1v1h-1zM636 276h1v1h-1zM641 276h1v1h-1zM646 276h1v1h-1zM651 276h1v1h-1zM656 276h1v1h-1zM661 276h1v1h-1zM666 276h1v1h-1zM671 276h1v1h-1zM676 276h1v1h-1zM681 276h1v1h-1zM686 276h1v1h-1zM691 276h1v1h-1zM696 276h1v1h-1zM701 276h1v1h-1zM706 276h1v1h-1zM711 276h1v1h-1zM716 276h1v1h-1zM721 276h1v1h-1zM726 276h1v1h-1zM731 276h1v1h-1zM736 276h1v1h-1zM741 276h1v1h-1zM746 276h1v1h-1zM751 276h1v1h-1zM756 276h1v1h-1zM761 276h1v1h-1zM766 276h1v1h-1zM771 276h1v1h-1zM776 276h1v1h-1zM781 276h1v1h-1zM786 276h1v1h-1zM791 276h1v1h-1zM796 276h1v1h-1zM801 276h1v1h-1zM806 276h1v1h-1zM811 276h1v1h-1zM816 276h1v1h-1zM821 276h1v1h-1zM826 276h1v1h-1zM831 276h1v1h-1zM836 276h1v1h-1zM841 276h1v1h-1zM846 276h1v1h-1zM851 276h1v1h-1zM856 276h1v1h-1zM861 276h1v1h-1zM866 276h1v1h-1zM871 276h1v1h-1zM26 301h1v1h-1zM31 301h1v1h-1zM36 301h1v1h-1zM41 301h1v1h-1zM46 301h1v1h-1zM51 301h1v1h-1zM56 301h1v1h-1zM61 301h1v1h-1zM66 301h1v1h-1zM71 301h1v1h-1zM76 301h1v1h-1zM81 301h1v1h-1zM86 301h1v1h-1zM91 301h1v1h-1zM96 301h1v1h-1zM101 301h1v1h-1zM106 301h1v1h-1zM111 301h1v1h-1zM116 301h1v1h-1zM121 301h1v1h-1zM126 301h1v1h-1zM131 301h1v1h-1zM136 301h1v1h-1zM141 301h1v1h-1zM146 301h1v1h-1zM151 301h1v1h-1zM156 301h1v1h-1zM161 301h1v1h-1zM166 301h1v1h-1zM171 301h1v1h-1zM176 301h1v1h-1zM181 301h1v1h-1zM186 301h1v1h-1zM191 301h1v1h-1zM196 301h1v1h-1zM201 301h1v1h-1zM206 301h1v1h-1zM211 301h1v1h-1zM216 301h1v1h-1zM221 301h1v1h-1zM226 301h1v1h-1zM231 301h1v1h-1zM236 301h1v1h-1zM241 301h1v1h-1zM246 301h1v1h-1zM251 301h1v1h-1zM256 301h1v1h-1zM261 301h1v1h-1zM266 301h1v1h-1zM271 301h1v1h-1zM276 301h1v1h-1zM281 301h1v1h-1zM286 301h1v1h-1zM291 301h1v1h-1zM296 301h1v1h-1zM301 301h1v1h-1zM306 301h1v1h-1zM311 301h1v1h-1zM316 301h1v1h-1zM321 301h1v1h-1zM326 301h1v1h-1zM331 301h1v1h-1zM336 301h1v1h-1zM341 301h1v1h-1zM346 301h1v1h-1zM351 301h1v1h-1zM356 301h1v1h-1zM361 301h1v1h-1zM366 301h1v1h-1zM371 301h1v1h-1zM376 301h1v1h-1zM381 301h1v1h-1zM386 301h1v1h-1zM391 301h1v1h-1zM396 301h1v1h-1zM401 301h1v1h-1zM406 301h1v1h-1zM411 301h1v1h-1zM416 301h1v1h-1zM421 301h1v1h-1zM426 301h1v1h-1zM431 301h1v1h-1zM436 301h1v1h-1zM441 301h1v1h-1zM446 301h1v1h-1zM451 301h1v1h-1zM456 301h1v1h-1zM461 301h1v1h-1zM466 301h1v1h-1zM471 301h1v1h-1zM476 301h1v1h-1zM481 301h1v1h-1zM486 301h1v1h-1zM491 301h1v1h-1zM496 301h1v1h-1zM501 301h1v1h-1zM506 301h1v1h-1zM511 301h1v1h-1zM516 301h1v1h-1zM521 301h1v1h-1zM526 301h1v1h-1zM531 301h1v1h-1zM536 301h1v1h-1zM541 301h1v1h-1zM546 301h1v1h-1zM551 301h1v1h-1zM556 301h1v1h-1zM561 301h1v1h-1zM566 301h1v1h-1zM571 301h1v1h-1zM576 301h1v1h-1zM581 301h1v1h-1zM586 301h1v1h-1zM591 301h1v1h-1zM596 301h1v1h-1zM601 301h1v1h-1zM606 301h1v1h-1zM611 301h1v1h-1zM616 301h1v1h-1zM621 301h1v1h-1zM626 301h1v1h-1zM631 301h1v1h-1zM636 301h1v1h-1zM641 301h1v1h-1zM646 301h1v1h-1zM651 301h1v1h-1zM656 301h1v1h-1zM661 301h1v1h-1zM666 301h1v1h-1zM671 301h1v1h-1zM676 301h1v1h-1zM681 301h1v1h-1zM686 301h1v1h-1zM691 301h1v1h-1zM696 301h1v1h-1zM701 301h1v1h-1zM706 301h1v1h-1zM711 301h1v1h-1zM716 301h1v1h-1zM721 301h1v1h-1zM726 301h1v1h-1zM731 301h1v1h-1zM736 301h1v1h-1zM741 301h1v1h-1zM746 301h1v1h-1zM751 301h1v1h-1zM756 301h1v1h-1zM761 301h1v1h-1zM766 301h1v1h-1zM771 301h1v1h-1zM776 301h1v1h-1zM781 301h1v1h-1zM786 301h1v1h-1zM791 301h1v1h-1zM796 301h1v1h-1zM801 301h1v1h-1zM806 301h1v1h-1zM811 301h1v1h-1zM816 301h1v1h-1zM821 301h1v1h-1zM826 301h1v1h-1zM831 301h1v1h-1zM836 301h1v1h-1zM841 301h1v1h-1zM846 301h1v1h-1zM851 301h1v1h-1zM856 301h1v1h-1zM861 301h1v1h-1zM866 301h1v1h-1zM871 301h1v1h-1zM26 326h1v1h-1zM31 326h1v1h-1zM36 326h1v1h-1zM41 326h1v1h-1zM46 326h1v1h-1zM51 326h1v1h-1zM56 326h1v1h-1zM61 326h1v1h-1zM66 326h1v1h-1zM71 326h1v1h-1zM76 326h1v1h-1zM81 326h1v1h-1zM86 326h1v1h-1zM91 326h1v1h-1zM96 326h1v1h-1zM101 326h1v1h-1zM106 326h1v1h-1zM111 326h1v1h-1zM116 326h1v1h-1zM121 326h1v1h-1zM126 326h1v1h-1zM131 326h1v1h-1zM136 326h1v1h-1zM141 326h1v1h-1zM146 326h1v1h-1zM151 326h1v1h-1zM156 326h1v1h-1zM161 326h1v1h-1zM166 326h1v1h-1zM171 326h1v1h-1zM176 326h1v1h-1zM181 326h1v1h-1zM186 326h1v1h-1zM191 326h1v1h-1zM196 326h1v1h-1zM201 326h1v1h-1zM206 326h1v1h-1zM211 326h1v1h-1zM216 326h1v1h-1zM221 326h1v1h-1zM226 326h1v1h-1zM231 326h1v1h-1zM236 326h1v1h-1zM241 326h1v1h-1zM246 326h1v1h-1zM251 326h1v1h-1zM256 326h1v1h-1zM261 326h1v1h-1zM266 326h1v1h-1zM271 326h1v1h-1zM276 326h1v1h-1zM281 326h1v1h-1zM286 326h1v1h-1zM291 326h1v1h-1zM296 326h1v1h-1zM301 326h1v1h-1zM306 326h1v1h-1zM311 326h1v1h-1zM316 326h1v1h-1zM321 326h1v1h-1zM326 326h1v1h-1zM331 326h1v1h-1zM336 326h1v1h-1zM341 326h1v1h-1zM346 326h1v1h-1zM351 326h1v1h-1zM356 326h1v1h-1zM361 326h1v1h-1zM366 326h1v1h-1zM371 326h1v1h-1zM376 326h1v1h-1zM381 326h1v1h-1zM386 326h1v1h-1zM391 326h1v1h-1zM396 326h1v1h-1zM401 326h1v1h-1zM406 326h1v1h-1zM411 326h1v1h-1zM416 326h1v1h-1zM421 326h1v1h-1zM426 326h1v1h-1zM431 326h1v1h-1zM436 326h1v1h-1zM441 326h1v1h-1zM446 326h1v1h-1zM451 326h1v1h-1zM456 326h1v1h-1zM461 326h1v1h-1zM466 326h1v1h-1zM471 326h1v1h-1zM476 326h1v1h-1zM481 326h1v1h-1zM486 326h1v1h-1zM491 326h1v1h-1zM496 326h1v1h-1zM501 326h1v1h-1zM506 326h1v1h-1zM511 326h1v1h-1zM516 326h1v1h-1zM521 326h1v1h-1zM526 326h1v1h-1zM531 326h1v1h-1zM536 326h1v1h-1zM541 326h1v1h-1zM546 326h1v1h-1zM551 326h1v1h-1zM556 326h1v1h-1zM561 326h1v1h-1zM566 326h1v1h-1zM571 326h1v1h-1zM576 326h1v1h-1zM581 326h1v1h-1zM586 326h1v1h-1zM591 326h1v1h-1zM596 326h1v1h-1zM601 326h1v1h-1zM606 326h1v1h-1zM611 326h1v1h-1zM616 326h1v1h-1zM621 326h1v1h-1zM626 326h1v1h-1zM631 326h1v1h-1zM636 326h1v1h-1zM641 326h1v1h-1zM646 326h1v1h-1zM651 326h1v1h-1zM656 326h1v1h-1zM661 326h1v1h-1zM666 326h1v1h-1zM671 326h1v1h-1zM676 326h1v1h-1zM681 326h1v1h-1zM686 326h1v1h-1zM691 326h1v1h-1zM696 326h1v1h-1zM701 326h1v1h-1zM706 326h1v1h-1zM711 326h1v1h-1zM716 326h1v1h-1zM721 326h1v1h-1zM726 326h1v1h-1zM731 326h1v1h-1zM736 326h1v1h-1zM741 326h1v1h-1zM746 326h1v1h-1zM751 326h1v1h-1zM756 326h1v1h-1zM761 326h1v1h-1zM766 326h1v1h-1zM771 326h1v1h-1zM776 326h1v1h-1zM781 326h1v1h-1zM786 326h1v1h-1zM791 326h1v1h-1zM796 326h1v1h-1zM801 326h1v1h-1zM806 326h1v1h-1zM811 326h1v1h-1zM816 326h1v1h-1zM821 326h1v1h-1zM826 326h1v1h-1zM831 326h1v1h-1zM836 326h1v1h-1zM841 326h1v1h-1zM846 326h1v1h-1zM851 326h1v1h-1zM856 326h1v1h-1zM861 326h1v1h-1zM866 326h1v1h-1zM871 326h1v1h-1zM26 351h1v1h-1zM31 351h1v1h-1zM36 351h1v1h-1zM41 351h1v1h-1zM46 351h1v1h-1zM51 351h1v1h-1zM56 351h1v1h-1zM61 351h1v1h-1zM66 351h1v1h-1zM71 351h1v1h-1zM76 351h1v1h-1zM81 351h1v1h-1zM86 351h1v1h-1zM91 351h1v1h-1zM96 351h1v1h-1zM101 351h1v1h-1zM106 351h1v1h-1zM111 351h1v1h-1zM116 351h1v1h-1zM121 351h1v1h-1zM126 351h1v1h-1zM131 351h1v1h-1zM136 351h1v1h-1zM141 351h1v1h-1zM146 351h1v1h-1zM151 351h1v1h-1zM156 351h1v1h-1zM161 351h1v1h-1zM166 351h1v1h-1zM171 351h1v1h-1zM176 351h1v1h-1zM181 351h1v1h-1zM186 351h1v1h-1zM191 351h1v1h-1zM196 351h1v1h-1zM201 351h1v1h-1zM206 351h1v1h-1zM211 351h1v1h-1zM216 351h1v1h-1zM221 351h1v1h-1zM226 351h1v1h-1zM231 351h1v1h-1zM236 351h1v1h-1zM241 351h1v1h-1zM246 351h1v1h-1zM251 351h1v1h-1zM256 351h1v1h-1zM261 351h1v1h-1zM266 351h1v1h-1zM271 351h1v1h-1zM276 351h1v1h-1zM281 351h1v1h-1zM286 351h1v1h-1zM291 351h1v1h-1zM296 351h1v1h-1zM301 351h1v1h-1zM306 351h1v1h-1zM311 351h1v1h-1zM316 351h1v1h-1zM321 351h1v1h-1zM326 351h1v1h-1zM331 351h1v1h-1zM336 351h1v1h-1zM341 351h1v1h-1zM346 351h1v1h-1zM351 351h1v1h-1zM356 351h1v1h-1zM361 351h1v1h-1zM366 351h1v1h-1zM371 351h1v1h-1zM376 351h1v1h-1zM381 351h1v1h-1zM386 351h1v1h-1zM391 351h1v1h-1zM396 351h1v1h-1zM401 351h1v1h-1zM406 351h1v1h-1zM411 351h1v1h-1zM416 351h1v1h-1zM421 351h1v1h-1zM426 351h1v1h-1zM431 351h1v1h-1zM436 351h1v1h-1zM441 351h1v1h-1zM446 351h1v1h-1zM451 351h1v1h-1zM456 351h1v1h-1zM461 351h1v1h-1zM466 351h1v1h-1zM471 351h1v1h-1zM476 351h1v1h-1zM481 351h1v1h-1zM486 351h1v1h-1zM491 351h1v1h-1zM496 351h1v1h-1zM501 351h1v1h-1zM506 351h1v1h-1zM511 351h1v1h-1zM516 351h1v1h-1zM521 351h1v1h-1zM526 351h1v1h-1zM531 351h1v1h-1zM536 351h1v1h-1zM541 351h1v1h-1zM546 351h1v1h-1zM551 351h1v1h-1zM556 351h1v1h-1zM561 351h1v1h-1zM566 351h1v1h-1zM571 351h1v1h-1zM576 351h1v1h-1zM581 351h1v1h-1zM586 351h1v1h-1zM591 351h1v1h-1zM596 351h1v1h-1zM601 351h1v1h-1zM606 351h1v1h-1zM611 351h1v1h-1zM616 351h1v1h-1zM621 351h1v1h-1zM626 351h1v1h-1zM631 351h1v1h-1zM636 351h1v1h-1zM641 351h1v1h-1zM646 351h1v1h-1zM651 351h1v1h-1zM656 351h1v1h-1zM661 351h1v1h-1zM666 351h1v1h-1zM671 351h1v1h-1zM676 351h1v1h-1zM681 351h1v1h-1zM686 351h1v1h-1zM691 351h1v1h-1zM696 351h1v1h-1zM701 351h1v1h-1zM706 351h1v1h-1zM711 351h1v1h-1zM716 351h1v1h-1zM721 351h1v1h-1zM726 351h1v1h-1zM731 351h1v1h-1zM736 351h1v1h-1zM741 351h1v1h-1zM746 351h1v1h-1zM751 351h1v1h-1zM756 351h1v1h-1zM761 351h1v1h-1zM766 351h1v1h-1zM771 351h1v1h-1zM776 351h1v1h-1zM781 351h1v1h-1zM786 351h1v1h-1zM791 351h1v1h-1zM796 351h1v1h-1zM801 351h1v1h-1zM806 351h1v1h-1zM811 351h1v1h-1zM816 351h1v1h-1zM821 351h1v1h-1zM826 351h1v1h-1zM831 351h1v1h-1zM836 351h1v1h-1zM841 351h1v1h-1zM846 351h1v1h-1zM851 351h1v1h-1zM856 351h1v1h-1zM861 351h1v1h-1zM866 351h1v1h-1zM871 351h1v1h-1zM26 376h1v1h-1zM31 376h1v1h-1zM36 376h1v1h-1zM41 376h1v1h-1zM46 376h1v1h-1zM51 376h1v1h-1zM56 376h1v1h-1zM61 376h1v1h-1zM66 376h1v1h-1zM71 376h1v1h-1zM76 376h1v1h-1zM81 376h1v1h-1zM86 376h1v1h-1zM91 376h1v1h-1zM96 376h1v1h-1zM101 376h1v1h-1zM106 376h1v1h-1zM111 376h1v1h-1zM116 376h1v1h-1zM121 376h1v1h-1zM126 376h1v1h-1zM131 376h1v1h-1zM136 376h1v1h-1zM141 376h1v1h-1zM146 376h1v1h-1zM151 376h1v1h-1zM156 376h1v1h-1zM161 376h1v1h-1zM166 376h1v1h-1zM171 376h1v1h-1zM176 376h1v1h-1zM181 376h1v1h-1zM186 376h1v1h-1zM191 376h1v1h-1zM196 376h1v1h-1zM201 376h1v1h-1zM206 376h1v1h-1zM211 376h1v1h-1zM216 376h1v1h-1zM221 376h1v1h-1zM226 376h1v1h-1zM231 376h1v1h-1zM236 376h1v1h-1zM241 376h1v1h-1zM246 376h1v1h-1zM251 376h1v1h-1zM256 376h1v1h-1zM261 376h1v1h-1zM266 376h1v1h-1zM271 376h1v1h-1zM276 376h1v1h-1zM281 376h1v1h-1zM286 376h1v1h-1zM291 376h1v1h-1zM296 376h1v1h-1zM301 376h1v1h-1zM306 376h1v1h-1zM311 376h1v1h-1zM316 376h1v1h-1zM321 376h1v1h-1zM326 376h1v1h-1zM331 376h1v1h-1zM336 376h1v1h-1zM341 376h1v1h-1zM346 376h1v1h-1zM351 376h1v1h-1zM356 376h1v1h-1zM361 376h1v1h-1zM366 376h1v1h-1zM371 376h1v1h-1zM376 376h1v1h-1zM381 376h1v1h-1zM386 376h1v1h-1zM391 376h1v1h-1zM396 376h1v1h-1zM401 376h1v1h-1zM406 376h1v1h-1zM411 376h1v1h-1zM416 376h1v1h-1zM421 376h1v1h-1zM426 376h1v1h-1zM431 376h1v1h-1zM436 376h1v1h-1zM441 376h1v1h-1zM446 376h1v1h-1zM451 376h1v1h-1zM456 376h1v1h-1zM461 376h1v1h-1zM466 376h1v1h-1zM471 376h1v1h-1zM476 376h1v1h-1zM481 376h1v1h-1zM486 376h1v1h-1zM491 376h1v1h-1zM496 376h1v1h-1zM501 376h1v1h-1zM506 376h1v1h-1zM511 376h1v1h-1zM516 376h1v1h-1zM521 376h1v1h-1zM526 376h1v1h-1zM531 376h1v1h-1zM536 376h1v1h-1zM541 376h1v1h-1zM546 376h1v1h-1zM551 376h1v1h-1zM556 376h1v1h-1zM561 376h1v1h-1zM566 376h1v1h-1zM571 376h1v1h-1zM576 376h1v1h-1zM581 376h1v1h-1zM586 376h1v1h-1zM591 376h1v1h-1zM596 376h1v1h-1zM601 376h1v1h-1zM606 376h1v1h-1zM611 376h1v1h-1zM616 376h1v1h-1zM621 376h1v1h-1zM626 376h1v1h-1zM631 376h1v1h-1zM636 376h1v1h-1zM641 376h1v1h-1zM646 376h1v1h-1zM651 376h1v1h-1zM656 376h1v1h-1zM661 376h1v1h-1zM666 376h1v1h-1zM671 376h1v1h-1zM676 376h1v1h-1zM681 376h1v1h-1zM686 376h1v1h-1zM691 376h1v1h-1zM696 376h1v1h-1zM701 376h1v1h-1zM706 376h1v1h-1zM711 376h1v1h-1zM716 376h1v1h-1zM721 376h1v1h-1zM726 376h1v1h-1zM731 376h1v1h-1zM736 376h1v1h-1zM741 376h1v1h-1zM746 376h1v1h-1zM751 376h1v1h-1zM756 376h1v1h-1zM761 376h1v1h-1zM766 376h1v1h-1zM771 376h1v1h-1zM776 376h1v1h-1zM781 376h1v1h-1zM786 376h1v1h-1zM791 376h1v1h-1zM796 376h1v1h-1zM801 376h1v1h-1zM806 376h1v1h-1zM811 376h1v1h-1zM816 376h1v1h-1zM821 376h1v1h-1zM826 376h1v1h-1zM831 376h1v1h-1zM836 376h1v1h-1zM841 376h1v1h-1zM846 376h1v1h-1zM851 376h1v1h-1zM856 376h1v1h-1zM861 376h1v1h-1zM866 376h1v1h-1zM871 376h1v1h-1zM26 401h1v1h-1zM31 401h1v1h-1zM36 401h1v1h-1zM41 401h1v1h-1zM46 401h1v1h-1zM51 401h1v1h-1zM56 401h1v1h-1zM61 401h1v1h-1zM66 401h1v1h-1zM71 401h1v1h-1zM76 401h1v1h-1zM81 401h1v1h-1zM86 401h1v1h-1zM91 401h1v1h-1zM96 401h1v1h-1zM101 401h1v1h-1zM106 401h1v1h-1zM111 401h1v1h-1zM116 401h1v1h-1zM121 401h1v1h-1zM126 401h1v1h-1zM131 401h1v1h-1zM136 401h1v1h-1zM141 401h1v1h-1zM146 401h1v1h-1zM151 401h1v1h-1zM156 401h1v1h-1zM161 401h1v1h-1zM166 401h1v1h-1zM171 401h1v1h-1zM176 401h1v1h-1zM181 401h1v1h-1zM186 401h1v1h-1zM191 401h1v1h-1zM196 401h1v1h-1zM201 401h1v1h-1zM206 401h1v1h-1zM211 401h1v1h-1zM216 401h1v1h-1zM221 401h1v1h-1zM226 401h1v1h-1zM231 401h1v1h-1zM236 401h1v1h-1zM241 401h1v1h-1zM246 401h1v1h-1zM251 401h1v1h-1zM256 401h1v1h-1zM261 401h1v1h-1zM266 401h1v1h-1zM271 401h1v1h-1zM276 401h1v1h-1zM281 401h1v1h-1zM286 401h1v1h-1zM291 401h1v1h-1zM296 401h1v1h-1zM301 401h1v1h-1zM306 401h1v1h-1zM311 401h1v1h-1zM316 401h1v1h-1zM321 401h1v1h-1zM326 401h1v1h-1zM331 401h1v1h-1zM336 401h1v1h-1zM341 401h1v1h-1zM346 401h1v1h-1zM351 401h1v1h-1zM356 401h1v1h-1zM361 401h1v1h-1zM366 401h1v1h-1zM371 401h1v1h-1zM376 401h1v1h-1zM381 401h1v1h-1zM386 401h1v1h-1zM391 401h1v1h-1zM396 401h1v1h-1zM401 401h1v1h-1zM406 401h1v1h-1zM411 401h1v1h-1zM416 401h1v1h-1zM421 401h1v1h-1zM426 401h1v1h-1zM431 401h1v1h-1zM436 401h1v1h-1zM441 401h1v1h-1zM446 401h1v1h-1zM451 401h1v1h-1zM456 401h1v1h-1zM461 401h1v1h-1zM466 401h1v1h-1zM471 401h1v1h-1zM476 401h1v1h-1zM481 401h1v1h-1zM486 401h1v1h-1zM491 401h1v1h-1zM496 401h1v1h-1zM501 401h1v1h-1zM506 401h1v1h-1zM511 401h1v1h-1zM516 401h1v1h-1zM521 401h1v1h-1zM526 401h1v1h-1zM531 401h1v1h-1zM536 401h1v1h-1zM541 401h1v1h-1zM546 401h1v1h-1zM551 401h1v1h-1zM556 401h1v1h-1zM561 401h1v1h-1zM566 401h1v1h-1zM571 401h1v1h-1zM576 401h1v1h-1zM581 401h1v1h-1zM586 401h1v1h-1zM591 401h1v1h-1zM596 401h1v1h-1zM601 401h1v1h-1zM606 401h1v1h-1zM611 401h1v1h-1zM616 401h1v1h-1zM621 401h1v1h-1zM626 401h1v1h-1zM631 401h1v1h-1zM636 401h1v1h-1zM641 401h1v1h-1zM646 401h1v1h-1zM651 401h1v1h-1zM656 401h1v1h-1zM661 401h1v1h-1zM666 401h1v1h-1zM671 401h1v1h-1zM676 401h1v1h-1zM681 401h1v1h-1zM686 401h1v1h-1zM691 401h1v1h-1zM696 401h1v1h-1zM701 401h1v1h-1zM706 401h1v1h-1zM711 401h1v1h-1zM716 401h1v1h-1zM721 401h1v1h-1zM726 401h1v1h-1zM731 401h1v1h-1zM736 401h1v1h-1zM741 401h1v1h-1zM746 401h1v1h-1zM751 401h1v1h-1zM756 401h1v1h-1zM761 401h1v1h-1zM766 401h1v1h-1zM771 401h1v1h-1zM776 401h1v1h-1zM781 401h1v1h-1zM786 401h1v1h-1zM791 401h1v1h-1zM796 401h1v1h-1zM801 401h1v1h-1zM806 401h1v1h-1zM811 401h1v1h-1zM816 401h1v1h-1zM821 401h1v1h-1zM826 401h1v1h-1zM831 401h1v1h-1zM836 401h1v1h-1zM841 401h1v1h-1zM846 401h1v1h-1zM851 401h1v1h-1zM856 401h1v1h-1zM861 401h1v1h-1zM866 401h1v1h-1zM871 401h1v1h-1zM26 426h1v1h-1zM31 426h1v1h-1zM36 426h1v1h-1zM41 426h1v1h-1zM46 426h1v1h-1zM51 426h1v1h-1zM56 426h1v1h-1zM61 426h1v1h-1zM66 426h1v1h-1zM71 426h1v1h-1zM76 426h1v1h-1zM81 426h1v1h-1zM86 426h1v1h-1zM91 426h1v1h-1zM96 426h1v1h-1zM101 426h1v1h-1zM106 426h1v1h-1zM111 426h1v1h-1zM116 426h1v1h-1zM121 426h1v1h-1zM126 426h1v1h-1zM131 426h1v1h-1zM136 426h1v1h-1zM141 426h1v1h-1zM146 426h1v1h-1zM151 426h1v1h-1zM156 426h1v1h-1zM161 426h1v1h-1zM166 426h1v1h-1zM171 426h1v1h-1zM176 426h1v1h-1zM181 426h1v1h-1zM186 426h1v1h-1zM191 426h1v1h-1zM196 426h1v1h-1zM201 426h1v1h-1zM206 426h1v1h-1zM211 426h1v1h-1zM216 426h1v1h-1zM221 426h1v1h-1zM226 426h1v1h-1zM231 426h1v1h-1zM236 426h1v1h-1zM241 426h1v1h-1zM246 426h1v1h-1zM251 426h1v1h-1zM256 426h1v1h-1zM261 426h1v1h-1zM266 426h1v1h-1zM271 426h1v1h-1zM276 426h1v1h-1zM281 426h1v1h-1zM286 426h1v1h-1zM291 426h1v1h-1zM296 426h1v1h-1zM301 426h1v1h-1zM306 426h1v1h-1zM311 426h1v1h-1zM316 426h1v1h-1zM321 426h1v1h-1zM326 426h1v1h-1zM331 426h1v1h-1zM336 426h1v1h-1zM341 426h1v1h-1zM346 426h1v1h-1zM351 426h1v1h-1zM356 426h1v1h-1zM361 426h1v1h-1zM366 426h1v1h-1zM371 426h1v1h-1zM376 426h1v1h-1zM381 426h1v1h-1zM386 426h1v1h-1zM391 426h1v1h-1zM396 426h1v1h-1zM401 426h1v1h-1zM406 426h1v1h-1zM411 426h1v1h-1zM416 426h1v1h-1zM421 426h1v1h-1zM426 426h1v1h-1zM431 426h1v1h-1zM436 426h1v1h-1zM441 426h1v1h-1zM446 426h1v1h-1zM451 426h1v1h-1zM456 426h1v1h-1zM461 426h1v1h-1zM466 426h1v1h-1zM471 426h1v1h-1zM476 426h1v1h-1zM481 426h1v1h-1zM486 426h1v1h-1zM491 426h1v1h-1zM496 426h1v1h-1zM501 426h1v1h-1zM506 426h1v1h-1zM511 426h1v1h-1zM516 426h1v1h-1zM521 426h1v1h-1zM526 426h1v1h-1zM531 426h1v1h-1zM536 426h1v1h-1zM541 426h1v1h-1zM546 426h1v1h-1zM551 426h1v1h-1zM556 426h1v1h-1zM561 426h1v1h-1zM566 426h1v1h-1zM571 426h1v1h-1zM576 426h1v1h-1zM581 426h1v1h-1zM586 426h1v1h-1zM591 426h1v1h-1zM596 426h1v1h-1zM601 426h1v1h-1zM606 426h1v1h-1zM611 426h1v1h-1zM616 426h1v1h-1zM621 426h1v1h-1zM626 426h1v1h-1zM631 426h1v1h-1zM636 426h1v1h-1zM641 426h1v1h-1zM646 426h1v1h-1zM651 426h1v1h-1zM656 426h1v1h-1zM661 426h1v1h-1zM666 426h1v1h-1zM671 426h1v1h-1zM676 426h1v1h-1zM681 426h1v1h-1zM686 426h1v1h-1zM691 426h1v1h-1zM696 426h1v1h-1zM701 426h1v1h-1zM706 426h1v1h-1zM711 426h1v1h-1zM716 426h1v1h-1zM721 426h1v1h-1zM726 426h1v1h-1zM731 426h1v1h-1zM736 426h1v1h-1zM741 426h1v1h-1zM746 426h1v1h-1zM751 426h1v1h-1zM756 426h1v1h-1zM761 426h1v1h-1zM766 426h1v1h-1zM771 426h1v1h-1zM776 426h1v1h-1zM781 426h1v1h-1zM786 426h1v1h-1zM791 426h1v1h-1zM796 426h1v1h-1zM801 426h1v1h-1zM806 426h1v1h-1zM811 426h1v1h-1zM816 426h1v1h-1zM821 426h1v1h-1zM826 426h1v1h-1zM831 426h1v1h-1zM836 426h1v1h-1zM841 426h1v1h-1zM846 426h1v1h-1zM851 426h1v1h-1zM856 426h1v1h-1zM861 426h1v1h-1zM866 426h1v1h-1zM871 426h1v1h-1zM26 451h1v1h-1zM31 451h1v1h-1zM36 451h1v1h-1zM41 451h1v1h-1zM46 451h1v1h-1zM51 451h1v1h-1zM56 451h1v1h-1zM61 451h1v1h-1zM66 451h1v1h-1zM71 451h1v1h-1zM76 451h1v1h-1zM81 451h1v1h-1zM86 451h1v1h-1zM91 451h1v1h-1zM96 451h1v1h-1zM101 451h1v1h-1zM106 451h1v1h-1zM111 451h1v1h-1zM116 451h1v1h-1zM121 451h1v1h-1zM126 451h1v1h-1zM131 451h1v1h-1zM136 451h1v1h-1zM141 451h1v1h-1zM146 451h1v1h-1zM151 451h1v1h-1zM156 451h1v1h-1zM161 451h1v1h-1zM166 451h1v1h-1zM171 451h1v1h-1zM176 451h1v1h-1zM181 451h1v1h-1zM186 451h1v1h-1zM191 451h1v1h-1zM196 451h1v1h-1zM201 451h1v1h-1zM206 451h1v1h-1zM211 451h1v1h-1zM216 451h1v1h-1zM221 451h1v1h-1zM226 451h1v1h-1zM231 451h1v1h-1zM236 451h1v1h-1zM241 451h1v1h-1zM246 451h1v1h-1zM251 451h1v1h-1zM256 451h1v1h-1zM261 451h1v1h-1zM266 451h1v1h-1zM271 451h1v1h-1zM276 451h1v1h-1zM281 451h1v1h-1zM286 451h1v1h-1zM291 451h1v1h-1zM296 451h1v1h-1zM301 451h1v1h-1zM306 451h1v1h-1zM311 451h1v1h-1zM316 451h1v1h-1zM321 451h1v1h-1zM326 451h1v1h-1zM331 451h1v1h-1zM336 451h1v1h-1zM341 451h1v1h-1zM346 451h1v1h-1zM351 451h1v1h-1zM356 451h1v1h-1zM361 451h1v1h-1zM366 451h1v1h-1zM371 451h1v1h-1zM376 451h1v1h-1zM381 451h1v1h-1zM386 451h1v1h-1zM391 451h1v1h-1zM396 451h1v1h-1zM401 451h1v1h-1zM406 451h1v1h-1zM411 451h1v1h-1zM416 451h1v1h-1zM421 451h1v1h-1zM426 451h1v1h-1zM431 451h1v1h-1zM436 451h1v1h-1zM441 451h1v1h-1zM446 451h1v1h-1zM451 451h1v1h-1zM456 451h1v1h-1zM461 451h1v1h-1zM466 451h1v1h-1zM471 451h1v1h-1zM476 451h1v1h-1zM481 451h1v1h-1zM486 451h1v1h-1zM491 451h1v1h-1zM496 451h1v1h-1zM501 451h1v1h-1zM506 451h1v1h-1zM511 451h1v1h-1zM516 451h1v1h-1zM521 451h1v1h-1zM526 451h1v1h-1zM531 451h1v1h-1zM536 451h1v1h-1zM541 451h1v1h-1zM546 451h1v1h-1zM551 451h1v1h-1zM556 451h1v1h-1zM561 451h1v1h-1zM566 451h1v1h-1zM571 451h1v1h-1zM576 451h1v1h-1zM581 451h1v1h-1zM586 451h1v1h-1zM591 451h1v1h-1zM596 451h1v1h-1zM601 451h1v1h-1zM606 451h1v1h-1zM611 451h1v1h-1zM616 451h1v1h-1zM621 451h1v1h-1zM626 451h1v1h-1zM631 451h1v1h-1zM636 451h1v1h-1zM641 451h1v1h-1zM646 451h1v1h-1zM651 451h1v1h-1zM656 451h1v1h-1zM661 451h1v1h-1zM666 451h1v1h-1zM671 451h1v1h-1zM676 451h1v1h-1zM681 451h1v1h-1zM686 451h1v1h-1zM691 451h1v1h-1zM696 451h1v1h-1zM701 451h1v1h-1zM706 451h1v1h-1zM711 451h1v1h-1zM716 451h1v1h-1zM721 451h1v1h-1zM726 451h1v1h-1zM731 451h1v1h-1zM736 451h1v1h-1zM741 451h1v1h-1zM746 451h1v1h-1zM751 451h1v1h-1zM756 451h1v1h-1zM761 451h1v1h-1zM766 451h1v1h-1zM771 451h1v1h-1zM776 451h1v1h-1zM781 451h1v1h-1zM786 451h1v1h-1zM791 451h1v1h-1zM796 451h1v1h-1zM801 451h1v1h-1zM806 451h1v1h-1zM811 451h1v1h-1zM816 451h1v1h-1zM821 451h1v1h-1zM826 451h1v1h-1zM831 451h1v1h-1zM836 451h1v1h-1zM841 451h1v1h-1zM846 451h1v1h-1zM851 451h1v1h-1zM856 451h1v1h-1zM861 451h1v1h-1zM866 451h1v1h-1zM871 451h1v1h-1zM26 476h1v1h-1zM31 476h1v1h-1zM36 476h1v1h-1zM41 476h1v1h-1zM46 476h1v1h-1zM51 476h1v1h-1zM56 476h1v1h-1zM61 476h1v1h-1zM66 476h1v1h-1zM71 476h1v1h-1zM76 476h1v1h-1zM81 476h1v1h-1zM86 476h1v1h-1zM91 476h1v1h-1zM96 476h1v1h-1zM101 476h1v1h-1zM106 476h1v1h-1zM111 476h1v1h-1zM116 476h1v1h-1zM121 476h1v1h-1zM126 476h1v1h-1zM131 476h1v1h-1zM136 476h1v1h-1zM141 476h1v1h-1zM146 476h1v1h-1zM151 476h1v1h-1zM156 476h1v1h-1zM161 476h1v1h-1zM166 476h1v1h-1zM171 476h1v1h-1zM176 476h1v1h-1zM181 476h1v1h-1zM186 476h1v1h-1zM191 476h1v1h-1zM196 476h1v1h-1zM201 476h1v1h-1zM206 476h1v1h-1zM211 476h1v1h-1zM216 476h1v1h-1zM221 476h1v1h-1zM226 476h1v1h-1zM231 476h1v1h-1zM236 476h1v1h-1zM241 476h1v1h-1zM246 476h1v1h-1zM251 476h1v1h-1zM256 476h1v1h-1zM261 476h1v1h-1zM266 476h1v1h-1zM271 476h1v1h-1zM276 476h1v1h-1zM281 476h1v1h-1zM286 476h1v1h-1zM291 476h1v1h-1zM296 476h1v1h-1zM301 476h1v1h-1zM306 476h1v1h-1zM311 476h1v1h-1zM316 476h1v1h-1zM321 476h1v1h-1zM326 476h1v1h-1zM331 476h1v1h-1zM336 476h1v1h-1zM341 476h1v1h-1zM346 476h1v1h-1zM351 476h1v1h-1zM356 476h1v1h-1zM361 476h1v1h-1zM366 476h1v1h-1zM371 476h1v1h-1zM376 476h1v1h-1zM381 476h1v1h-1zM386 476h1v1h-1zM391 476h1v1h-1zM396 476h1v1h-1zM401 476h1v1h-1zM406 476h1v1h-1zM411 476h1v1h-1zM416 476h1v1h-1zM421 476h1v1h-1zM426 476h1v1h-1zM431 476h1v1h-1zM436 476h1v1h-1zM441 476h1v1h-1zM446 476h1v1h-1zM451 476h1v1h-1zM456 476h1v1h-1zM461 476h1v1h-1zM466 476h1v1h-1zM471 476h1v1h-1zM476 476h1v1h-1zM481 476h1v1h-1zM486 476h1v1h-1zM491 476h1v1h-1zM496 476h1v1h-1zM501 476h1v1h-1zM506 476h1v1h-1zM511 476h1v1h-1zM516 476h1v1h-1zM521 476h1v1h-1zM526 476h1v1h-1zM531 476h1v1h-1zM536 476h1v1h-1zM541 476h1v1h-1zM546 476h1v1h-1zM551 476h1v1h-1zM556 476h1v1h-1zM561 476h1v1h-1zM566 476h1v1h-1zM571 476h1v1h-1zM576 476h1v1h-1zM581 476h1v1h-1zM586 476h1v1h-1zM591 476h1v1h-1zM596 476h1v1h-1zM601 476h1v1h-1zM606 476h1v1h-1zM611 476h1v1h-1zM616 476h1v1h-1zM621 476h1v1h-1zM626 476h1v1h-1zM631 476h1v1h-1zM636 476h1v1h-1zM641 476h1v1h-1zM646 476h1v1h-1zM651 476h1v1h-1zM656 476h1v1h-1zM661 476h1v1h-1zM666 476h1v1h-1zM671 476h1v1h-1zM676 476h1v1h-1zM681 476h1v1h-1zM686 476h1v1h-1zM691 476h1v1h-1zM696 476h1v1h-1zM701 476h1v1h-1zM706 476h1v1h-1zM711 476h1v1h-1zM716 476h1v1h-1zM721 476h1v1h-1zM726 476h1v1h-1zM731 476h1v1h-1zM736 476h1v1h-1zM741 476h1v1h-1zM746 476h1v1h-1zM751 476h1v1h-1zM756 476h1v1h-1zM761 476h1v1h-1zM766 476h1v1h-1zM771 476h1v1h-1zM776 476h1v1h-1zM781 476h1v1h-1zM786 476h1v1h-1zM791 476h1v1h-1zM796 476h1v1h-1zM801 476h1v1h-1zM806 476h1v1h-1zM811 476h1v1h-1zM816 476h1v1h-1zM821 476h1v1h-1zM826 476h1v1h-1zM831 476h1v1h-1zM836 476h1v1h-1zM841 476h1v1h-1zM846 476h1v1h-1zM851 476h1v1h-1zM856 476h1v1h-1zM861 476h1v1h-1zM866 476h1v1h-1zM871 476h1v1h-1zM26 501h1v1h-1zM31 501h1v1h-1zM36 501h1v1h-1zM41 501h1v1h-1zM46 501h1v1h-1zM51 501h1v1h-1zM56 501h1v1h-1zM61 501h1v1h-1zM66 501h1v1h-1zM71 501h1v1h-1zM76 501h1v1h-1zM81 501h1v1h-1zM86 501h1v1h-1zM91 501h1v1h-1zM96 501h1v1h-1zM101 501h1v1h-1zM106 501h1v1h-1zM111 501h1v1h-1zM116 501h1v1h-1zM121 501h1v1h-1zM126 501h1v1h-1zM131 501h1v1h-1zM136 501h1v1h-1zM141 501h1v1h-1zM146 501h1v1h-1zM151 501h1v1h-1zM156 501h1v1h-1zM161 501h1v1h-1zM166 501h1v1h-1zM171 501h1v1h-1zM176 501h1v1h-1zM181 501h1v1h-1zM186 501h1v1h-1zM191 501h1v1h-1zM196 501h1v1h-1zM201 501h1v1h-1zM206 501h1v1h-1zM211 501h1v1h-1zM216 501h1v1h-1zM221 501h1v1h-1zM226 501h1v1h-1zM231 501h1v1h-1zM236 501h1v1h-1zM241 501h1v1h-1zM246 501h1v1h-1zM251 501h1v1h-1zM256 501h1v1h-1zM261 501h1v1h-1zM266 501h1v1h-1zM271 501h1v1h-1zM276 501h1v1h-1zM281 501h1v1h-1zM286 501h1v1h-1zM291 501h1v1h-1zM296 501h1v1h-1zM301 501h1v1h-1zM306 501h1v1h-1zM311 501h1v1h-1zM316 501h1v1h-1zM321 501h1v1h-1zM326 501h1v1h-1zM331 501h1v1h-1zM336 501h1v1h-1zM341 501h1v1h-1zM346 501h1v1h-1zM351 501h1v1h-1zM356 501h1v1h-1zM361 501h1v1h-1zM366 501h1v1h-1zM371 501h1v1h-1zM376 501h1v1h-1zM381 501h1v1h-1zM386 501h1v1h-1zM391 501h1v1h-1zM396 501h1v1h-1zM401 501h1v1h-1zM406 501h1v1h-1zM411 501h1v1h-1zM416 501h1v1h-1zM421 501h1v1h-1zM426 501h1v1h-1zM431 501h1v1h-1zM436 501h1v1h-1zM441 501h1v1h-1zM446 501h1v1h-1zM451 501h1v1h-1zM456 501h1v1h-1zM461 501h1v1h-1zM466 501h1v1h-1zM471 501h1v1h-1zM476 501h1v1h-1zM481 501h1v1h-1zM486 501h1v1h-1zM491 501h1v1h-1zM496 501h1v1h-1zM501 501h1v1h-1zM506 501h1v1h-1zM511 501h1v1h-1zM516 501h1v1h-1zM521 501h1v1h-1zM526 501h1v1h-1zM531 501h1v1h-1zM536 501h1v1h-1zM541 501h1v1h-1zM546 501h1v1h-1zM551 501h1v1h-1zM556 501h1v1h-1zM561 501h1v1h-1zM566 501h1v1h-1zM571 501h1v1h-1zM576 501h1v1h-1zM581 501h1v1h-1zM586 501h1v1h-1zM591 501h1v1h-1zM596 501h1v1h-1zM601 501h1v1h-1zM606 501h1v1h-1zM611 501h1v1h-1zM616 501h1v1h-1zM621 501h1v1h-1zM626 501h1v1h-1zM631 501h1v1h-1zM636 501h1v1h-1zM641 501h1v1h-1zM646 501h1v1h-1zM651 501h1v1h-1zM656 501h1v1h-1zM661 501h1v1h-1zM666 501h1v1h-1zM671 501h1v1h-1zM676 501h1v1h-1zM681 501h1v1h-1zM686 501h1v1h-1zM691 501h1v1h-1zM696 501h1v1h-1zM701 501h1v1h-1zM706 501h1v1h-1zM711 501h1v1h-1zM716 501h1v1h-1zM721 501h1v1h-1zM726 501h1v1h-1zM731 501h1v1h-1zM736 501h1v1h-1zM741 501h1v1h-1zM746 501h1v1h-1zM751 501h1v1h-1zM756 501h1v1h-1zM761 501h1v1h-1zM766 501h1v1h-1zM771 501h1v1h-1zM776 501h1v1h-1zM781 501h1v1h-1zM786 501h1v1h-1zM791 501h1v1h-1zM796 501h1v1h-1zM801 501h1v1h-1zM806 501h1v1h-1zM811 501h1v1h-1zM816 501h1v1h-1zM821 501h1v1h-1zM826 501h1v1h-1zM831 501h1v1h-1zM836 501h1v1h-1zM841 501h1v1h-1zM846 501h1v1h-1zM851 501h1v1h-1zM856 501h1v1h-1zM861 501h1v1h-1zM866 501h1v1h-1zM871 501h1v1h-1zM2 5h1v1h-1zM2 10h1v1h-1zM2 15h1v1h-1zM2 20h1v1h-1zM2 30h1v1h-1zM2 35h1v1h-1zM2 40h1v1h-1zM2 45h1v1h-1zM2 55h1v1h-1zM2 60h1v1h-1zM2 65h1v1h-1zM2 70h1v1h-1zM2 80h1v1h-1zM2 85h1v1h-1zM2 90h1v1h-1zM2 95h1v1h-1zM2 105h1v1h-1zM2 110h1v1h-1zM2 115h1v1h-1zM2 120h1v1h-1zM2 130h1v1h-1zM2 135h1v1h-1zM2 140h1v1h-1zM2 145h1v1h-1zM2 155h1v1h-1zM2 160h1v1h-1zM2 165h1v1h-1zM2 170h1v1h-1zM2 180h1v1h-1zM2 185h1v1h-1zM2 190h1v1h-1zM2 195h1v1h-1zM2 205h1v1h-1zM2 210h1v1h-1zM2 215h1v1h-1zM2 220h1v1h-1zM2 230h1v1h-1zM2 235h1v1h-1zM2 240h1v1h-1zM2 245h1v1h-1zM2 255h1v1h-1zM2 260h1v1h-1zM2 265h1v1h-1zM2 270h1v1h-1zM2 280h1v1h-1zM2 285h1v1h-1zM2 290h1v1h-1zM2 295h1v1h-1zM2 305h1v1h-1zM2 310h1v1h-1zM2 315h1v1h-1zM2 320h1v1h-1zM2 330h1v1h-1zM2 335h1v1h-1zM2 340h1v1h-1zM2 345h1v1h-1zM2 355h1v1h-1zM2 360h1v1h-1zM2 365h1v1h-1zM2 370h1v1h-1zM2 380h1v1h-1zM2 385h1v1h-1zM2 390h1v1h-1zM2 395h1v1h-1zM2 405h1v1h-1zM2 410h1v1h-1zM2 415h1v1h-1zM2 420h1v1h-1zM2 430h1v1h-1zM2 435h1v1h-1zM2 440h1v1h-1zM2 445h1v1h-1zM2 455h1v1h-1zM2 460h1v1h-1zM2 465h1v1h-1zM2 470h1v1h-1zM2 480h1v1h-1zM2 485h1v1h-1zM2 490h1v1h-1zM2 495h1v1h-1z" fill="#A0A0A0"/>
<rect x="26" y="76" width="846" height="1" fill="#B4FFFF"/>
<rect x="26" y="227" width="846" height="1" fill="#808000"/>
<rect x="26" y="376" width="846" height="1" fill="#FF0000"/>
<rect x="26" y="477" width="846" height="1" fill="#408000"/>
<rect x="295" y="2" width="1" height="500" fill="#C0C000"/>
<rect x="440" y="2" width="1" height="500" fill="#C0C000"/>
<rect x="586" y="2" width="1" height="500" fill="#C0C000"/>
<polyline points="25.5,472.4 26.5,487.6 27.5,487.1 28.5,472.8 29.5,465.3 30.5,475.5 31.5,489.5 32.5,486.3 33.5,470.5 34.5,464.9 35.5,477.6 36.5,490.5 37.5,484.4 38.5,467.7 39.5,464.5 40.5,479.4 41.5,490.6 42.5,482.9 43.5,468.2 44.5,467.8 45.5,477.9 46.5,486.5 47.5,494.5 48.5,489.4 49.5,483.4 50.5,480.5 51.5,479.6 52.5,478.7 53.5,477.9 54.5,477.0 55.5,475.3 56.5,473.7 57.5,465.0 58.5,459.8 59.5,465.4 60.5,477.1 61.5,487.8 62.5,473.7 63.5,464.7 64.5,473.7 65.5,487.8 66.5,486.5 67.5,471.1 68.5,463.9 69.5,475.3 70.5,490.9 71.5,486.9 72.5,470.8 73.5,465.8 74.5,479.2 75.5,490.1 76.5,484.2 77.5,469.7 78.5,467.6 79.5,481.0 80.5,487.7 81.5,480.3 82.5,467.4 83.5,467.8 84.5,480.8 85.5,489.0 86.5,479.2 87.5,466.5 88.5,469.3 89.5,483.5 90.5,490.1 91.5,476.9 92.5,463.7 93.5,469.5 94.5,485.1 95.5,487.9 96.5,475.5 97.5,465.8 98.5,472.9 99.5,486.6 100.5,487.1 101.5,472.9 102.5,464.6 103.5,474.2 104.5,489.5 105.5,487.3 106.5,470.9 107.5,464.0 108.5,476.7 109.5,488.9 110.5,485.0 111.5,471.7 112.5,468.3 113.5,479.7 114.5,489.8 115.5,482.8 116.5,467.7 117.5,466.3 118.5,480.7 119.5,491.7 120.5,481.8 121.5,466.2 122.5,467.5 123.5,483.8 124.5,489.3 125.5,479.1 126.5,467.0 127.5,470.4 128.5,484.4 129.5,490.1 130.5,477.5 131.5,465.8 132.5,471.9 133.5,486.1 134.5,488.5 135.5,473.5 136.5,462.7 137.5,471.8 138.5,487.3 139.5,487.1 140.5,473.8 141.5,466.7 142.5,476.1 143.5,489.8 144.5,487.0 145.5,472.0 146.5,466.5 147.5,478.4 148.5,490.4 149.5,484.9 150.5,469.0 151.5,465.8 152.5,479.8 153.5,489.9 154.5,482.1 155.5,466.9 156.5,466.3 157.5,481.2 158.5,490.3 159.5,480.8 160.5,467.1 161.5,469.0 162.5,483.8 163.5,489.4 164.5,478.8 165.5,467.1 166.5,471.2 167.5,485.5 168.5,489.5 169.5,476.6 170.5,465.6 171.5,472.3 172.5,485.6 173.5,487.0 174.5,473.4 175.5,464.5 176.5,473.1 177.5,489.1 178.5,488.0 179.5,473.4 180.5,466.4 181.5,477.1 182.5,489.7 183.5,486.3 184.5,471.7 185.5,467.1 186.5,479.1 187.5,490.4 188.5,484.0 189.5,467.9 190.5,465.4 191.5,480.1 192.5,491.0 193.5,482.3 194.5,467.0 195.5,467.2 196.5,482.6 197.5,488.3 198.5,478.6 199.5,465.7 200.5,468.3 201.5,482.6 202.5,490.9 203.5,478.9 204.5,466.5 205.5,471.7 206.5,486.0 207.5,489.0 208.5,476.5 209.5,466.5 210.5,473.6 211.5,487.4 212.5,488.0 213.5,473.9 214.5,465.5 215.5,474.9 216.5,488.6 217.5,486.8 218.5,472.5 219.5,466.3 220.5,477.2 221.5,488.9 222.5,484.5 223.5,468.9 224.5,464.7 225.5,478.0 226.5,488.9 227.5,482.5 228.5,468.2 229.5,466.7 230.5,480.2 231.5,489.3 232.5,480.5 233.5,466.5 234.5,467.5 235.5,482.0 236.5,490.7 237.5,479.5 238.5,465.7 239.5,469.3 240.5,485.1 241.5,488.2 242.5,476.1 243.5,464.6 244.5,470.4 245.5,487.9 246.5,490.6 247.5,475.7 248.5,464.8 249.5,473.6 250.5,486.7 251.5,486.6 252.5,473.2 253.5,465.9 254.5,475.2 255.5,489.2 256.5,486.4 257.5,470.6 258.5,464.6 259.5,477.1 260.5,488.3 261.5,483.3 262.5,468.6 263.5,465.4 264.5,478.3 265.5,490.1 266.5,482.9 267.5,468.5 268.5,467.8 269.5,481.7 270.5,491.2 271.5,481.4 272.5,467.1 273.5,468.9 274.5,484.2 275.5,490.1 276.5,478.8 277.5,466.1 278.5,470.3 279.5,484.3 280.5,488.3 281.5,475.8 282.5,464.9 283.5,471.3 284.5,486.2 285.5,487.6 286.5,475.4 287.5,467.2 288.5,474.9 289.5,486.0 290.5,485.3 291.5,472.0 292.5,465.5 293.5,475.1 294.5,490.3 295.5,486.7 296.5,471.0 297.5,465.8 298.5,478.7 299.5,489.9 300.5,484.1 301.5,469.1 302.5,466.5 303.5,480.2 304.5,490.0 305.5,481.7 306.5,466.5 307.5,466.5 308.5,481.7 309.5,491.3 310.5,480.2 311.5,465.2 312.5,468.0 313.5,484.6 314.5,490.4 315.5,478.2 316.5,465.4 317.5,470.5 318.5,484.1 319.5,487.1 320.5,475.4 321.5,465.9 322.5,472.3 323.5,487.4 324.5,488.3 325.5,474.7 326.5,466.4 327.5,475.3 328.5,488.3 329.5,486.6 330.5,471.5 331.5,464.8 332.5,476.2 333.5,489.4 334.5,477.9 335.5,486.5 336.5,494.5 337.5,489.4 338.5,483.4 339.5,480.5 340.5,479.6 341.5,478.7 342.5,477.9 343.5,477.0 344.5,475.3 345.5,473.7 346.5,465.0 347.5,459.8 348.5,465.4 349.5,477.1 350.5,465.5 351.5,469.1 352.5,485.3 353.5,488.9 354.5,476.8 355.5,465.0 356.5,470.7 357.5,487.3 358.5,490.2 359.5,475.6 360.5,464.6 361.5,473.2 362.5,486.7 363.5,486.8 364.5,473.6 365.5,466.2 366.5,475.3 367.5,488.0 368.5,485.7 369.5,471.4 370.5,465.8 371.5,477.0 372.5,490.2 373.5,485.4 374.5,470.5 375.5,467.1 376.5,480.1 377.5,489.5 378.5,481.9 379.5,466.4 380.5,465.4 381.5,480.3 382.5,490.1 383.5,480.9 384.5,467.0 385.5,468.5 386.5,483.3 387.5,488.3 388.5,478.2 389.5,466.5 390.5,470.1 391.5,483.5 392.5,487.7 393.5,475.5 394.5,464.6 395.5,470.8 396.5,486.7 397.5,488.5 398.5,475.2 399.5,466.1 400.5,474.3 401.5,487.5 402.5,486.8 403.5,472.9 404.5,465.8 405.5,475.9 406.5,488.9 407.5,486.0 408.5,472.2 409.5,467.5 410.5,478.6 411.5,489.6 412.5,484.1 413.5,469.4 414.5,466.8 415.5,480.0 416.5,489.4 417.5,481.7 418.5,467.3 419.5,467.2 420.5,481.4 421.5,492.0 422.5,481.4 423.5,466.9 424.5,469.4 425.5,485.3 426.5,489.6 427.5,477.1 428.5,463.9 429.5,469.0 430.5,484.4 431.5,488.0 432.5,474.8 433.5,464.0 434.5,471.1 435.5,487.4 436.5,488.5 437.5,474.5 438.5,465.7 439.5,474.8 440.5,488.6 441.5,487.0 442.5,471.3 443.5,464.1 444.5,475.9 445.5,489.9 446.5,485.6 447.5,469.1 448.5,464.3 449.5,478.1 450.5,491.1 451.5,484.6 452.5,469.1 453.5,467.1 454.5,481.4 455.5,490.5 456.5,481.4 457.5,466.1 458.5,466.7 459.5,482.3 460.5,492.1 461.5,480.6 462.5,465.9 463.5,469.3 464.5,485.9 465.5,488.5 466.5,477.7 467.5,467.1 468.5,472.0 469.5,486.3 470.5,489.3 471.5,474.7 472.5,463.5 473.5,472.0 474.5,485.8 475.5,486.0 476.5,472.4 477.5,464.6 478.5,473.9 479.5,487.8 480.5,485.6 481.5,470.8 482.5,464.8 483.5,476.3 484.5,491.3 485.5,486.3 486.5,470.2 487.5,466.3 488.5,480.2 489.5,490.3 490.5,482.9 491.5,467.4 492.5,466.2 493.5,481.0 494.5,488.1 495.5,479.8 496.5,467.0 497.5,468.2 498.5,481.7 499.5,489.8 500.5,478.4 501.5,465.0 502.5,469.0 503.5,485.0 504.5,489.0 505.5,477.8 506.5,467.5 507.5,473.1 508.5,485.3 509.5,487.2 510.5,474.0 511.5,464.6 512.5,472.8 513.5,489.2 514.5,488.6 515.5,473.0 516.5,464.8 517.5,476.0 518.5,487.7 519.5,484.8 520.5,470.1 521.5,464.8 522.5,476.7 523.5,490.9 524.5,485.4 525.5,470.1 526.5,467.1 527.5,480.8 528.5,490.7 529.5,482.6 530.5,467.2 531.5,466.8 532.5,482.0 533.5,489.8 534.5,479.4 535.5,464.6 536.5,466.9 537.5,482.9 538.5,491.5 539.5,479.3 540.5,466.0 541.5,470.9 542.5,484.0 543.5,487.3 544.5,475.9 545.5,466.3 546.5,472.4 547.5,487.2 548.5,488.4 549.5,474.7 550.5,465.8 551.5,474.7 552.5,488.0 553.5,486.8 554.5,472.2 555.5,465.3 556.5,476.2 557.5,486.8 558.5,483.5 559.5,470.1 560.5,466.0 561.5,477.1 562.5,488.9 563.5,482.7 564.5,467.6 565.5,465.5 566.5,479.3 567.5,489.5 568.5,480.9 569.5,466.2 570.5,466.6 571.5,481.5 572.5,490.1 573.5,479.0 574.5,464.6 575.5,467.7 576.5,483.8 577.5,489.7 578.5,476.5 579.5,463.2 580.5,469.0 581.5,484.0 582.5,486.7 583.5,474.5 584.5,465.1 585.5,472.0 586.5,487.7 587.5,488.1 588.5,474.8 589.5,466.9 590.5,475.9 591.5,487.8 592.5,485.7 593.5,470.3 594.5,463.9 595.5,475.7 596.5,488.3 597.5,484.2 598.5,470.5 599.5,467.0 600.5,478.7 601.5,488.1 602.5,481.7 603.5,467.9 604.5,466.7 605.5,479.7 606.5,489.5 607.5,480.4 608.5,466.1 609.5,467.3 610.5,482.3 611.5,489.5 612.5,479.5 613.5,467.5 614.5,470.9 615.5,484.7 616.5,491.2 617.5,477.9 618.5,465.6 619.5,472.0 620.5,486.9 621.5,489.4 622.5,474.5 623.5,463.9 624.5,472.8 625.5,485.3 626.5,485.1 627.5,472.2 628.5,481.3 629.5,490.0 630.5,492.5 631.5,487.0 632.5,481.0 633.5,480.1 634.5,479.3 635.5,478.4 636.5,477.5 637.5,476.3 638.5,474.7 639.5,473.0 640.5,462.3 641.5,462.8 642.5,465.9 643.5,486.0 644.5,481.7 645.5,489.4 646.5,480.4 647.5,467.3 648.5,469.1 649.5,483.2 650.5,489.7 651.5,479.2 652.5,467.6 653.5,471.7 654.5,486.6 655.5,490.9 656.5,476.9 657.5,464.9 658.5,472.2 659.5,487.9 660.5,489.5 661.5,474.1 662.5,464.0 663.5,473.8 664.5,487.0 665.5,486.0 666.5,472.4 667.5,465.8 668.5,475.8 669.5,489.6 670.5,486.1 671.5,471.3 672.5,466.6 673.5,478.8 674.5,491.2 675.5,484.9 676.5,469.2 677.5,466.8 678.5,481.1 679.5,491.9 680.5,483.1 681.5,467.5 682.5,467.7 683.5,483.4 684.5,489.5 685.5,480.1 686.5,467.7 687.5,470.2 688.5,484.0 689.5,489.1 690.5,476.7 691.5,464.1 692.5,469.4 693.5,485.8 694.5,489.2 695.5,475.0 696.5,463.7 697.5,471.7 698.5,487.2 699.5,487.9 700.5,473.5 701.5,464.8 702.5,474.4 703.5,487.5 704.5,485.8 705.5,472.1 706.5,466.3 707.5,476.7 708.5,488.7 709.5,484.9 710.5,471.5 711.5,468.0 712.5,479.3 713.5,488.5 714.5,482.2 715.5,468.2 716.5,466.7 717.5,479.9 718.5,491.3 719.5,481.9 720.5,466.7 721.5,467.7 722.5,483.5 723.5,488.2 724.5,478.7 725.5,467.0 726.5,470.1 727.5,483.5 728.5,488.6 729.5,477.8 730.5,467.5 731.5,472.6 732.5,485.1 733.5,487.5 734.5,474.3 735.5,464.7 736.5,472.5 737.5,486.4 738.5,486.3 739.5,473.4 740.5,466.3 741.5,475.3 742.5,486.8 743.5,484.4 744.5,470.7 745.5,465.5 746.5,476.3 747.5,487.4 748.5,482.9 749.5,469.6 750.5,466.7 751.5,478.4 752.5,491.0 753.5,483.6 754.5,468.9 755.5,468.1 756.5,482.4 757.5,490.1 758.5,480.3 759.5,465.8 760.5,467.6 761.5,483.1 762.5,490.5 763.5,479.4 764.5,467.0 765.5,471.1 766.5,484.4 767.5,488.2 768.5,476.6 769.5,466.4 770.5,472.4 771.5,485.1 772.5,486.7 773.5,473.4 774.5,464.4 775.5,472.8 776.5,488.8 777.5,487.9 778.5,473.0 779.5,465.6 780.5,476.4 781.5,489.0 782.5,485.3 783.5,468.7 784.5,463.3 785.5,476.8 786.5,491.8 787.5,485.4 788.5,468.7 789.5,465.9 790.5,481.0 791.5,488.0 792.5,480.5 793.5,467.0 794.5,467.0 795.5,480.5 796.5,488.9 797.5,480.1 798.5,468.1 799.5,470.3 800.5,483.5 801.5,489.8 802.5,477.1 803.5,463.8 804.5,469.2 805.5,486.0 806.5,489.7 807.5,475.2 808.5,463.5 809.5,471.5 810.5,488.0 811.5,488.9 812.5,474.9 813.5,466.2 814.5,475.5 815.5,488.9 816.5,487.2 817.5,471.4 818.5,464.4 819.5,476.3 820.5,490.6 821.5,486.1 822.5,469.7 823.5,465.2 824.5,479.0 825.5,490.7 826.5,484.0 827.5,468.8 828.5,467.0 829.5,481.2 830.5,490.2 831.5,480.8 832.5,465.3 833.5,466.1 834.5,482.1 835.5,489.3 836.5,479.9 837.5,468.2 838.5,471.1 839.5,484.4 840.5,489.8 841.5,478.2 842.5,467.1 843.5,472.4 844.5,484.8 845.5,487.2 846.5,474.4 847.5,464.9 848.5,472.4 849.5,486.6 850.5,486.7 851.5,473.6 852.5,466.3 853.5,475.3 854.5,489.1 855.5,486.5 856.5,470.1 857.5,463.7 858.5,476.5 859.5,488.6 860.5,484.3 861.5,471.0 862.5,467.9 863.5,479.5 864.5,489.2 865.5,481.8 866.5,466.5 867.5,465.5 868.5,480.2 869.5,488.7 870.5,480.4 871.5,467.9" fill="none" stroke="#80FF00" stroke-width="1"/>
<polyline points="26.0,172.4 26.5,170.9 27.0,169.6 27.5,168.5 28.0,167.5 28.5,166.8 29.0,166.3 29.5,166.0 30.0,166.0 30.5,166.4 31.0,167.0 31.5,167.9 32.0,169.0 32.5,170.2 33.0,171.6 33.5,173.1 34.0,174.6 34.5,176.2 35.0,177.7 35.5,179.1 36.0,180.4 36.5,181.5 37.0,182.5 37.5,183.5 38.0,184.4 38.5,185.3 39.0,186.1 39.5,186.9 40.0,187.7 40.5,188.5 41.0,189.3 41.5,190.1 42.0,191.0 42.5,191.8 43.0,192.7 43.5,193.7 44.0,194.7 44.5,195.8 45.0,197.0 45.5,198.4 46.0,200.1 46.5,202.0 47.0,204.2 47.5,206.5 48.0,208.9 48.5,211.3 49.0,213.8 49.5,216.2 50.0,218.5 50.5,220.6 51.0,222.5 51.5,224.1 52.0,225.4 52.5,226.4 53.0,226.9 53.5,227.0 54.0,226.7 54.5,226.0 55.0,225.1 55.5,223.9 56.0,222.6 56.5,221.1 57.0,219.5 57.5,217.7 58.0,216.0 58.5,214.3 59.0,212.5 59.5,210.9 60.0,209.4 60.5,208.1 61.0,206.9 61.5,206.0 62.0,205.3 62.5,205.0 63.0,205.1 63.5,205.6 64.0,206.6 64.5,207.9 65.0,209.5 65.5,211.5 66.0,213.6 66.5,215.8 67.0,218.2 67.5,220.6 68.0,223.0 68.5,225.4 69.0,227.6 69.5,230.0 70.0,232.9 70.5,236.1 71.0,239.6 71.5,243.1 72.0,246.7 72.5,250.2 73.0,253.5 73.5,256.5 74.0,259.0 74.5,261.0 75.0,262.4 75.5,263.0 76.0,262.9 76.5,262.7 77.0,262.4 77.5,262.0 78.0,261.5 78.5,260.9 79.0,260.2 79.5,259.6 80.0,258.9 80.5,258.3 81.0,257.7 81.5,257.1 82.0,256.7 82.5,256.3 83.0,256.1 83.5,256.0 84.0,256.1 84.5,256.5 85.0,257.0 85.5,257.7 86.0,258.5 86.5,259.5 87.0,260.4 87.5,261.5 88.0,262.5 88.5,263.6 89.0,264.5 89.5,265.4 90.0,266.2 90.5,266.8 91.0,267.3 91.5,267.6 92.0,267.6 92.5,267.3 93.0,266.9 93.5,266.2 94.0,265.4 94.5,264.5 95.0,263.5 95.5,262.4 96.0,261.3 96.5,260.2 97.0,259.2 97.5,258.3 98.0,257.4 98.5,256.8 99.0,256.3 99.5,256.0 100.0,256.0 100.5,256.4 101.0,257.0 101.5,258.0 102.0,259.1 102.5,260.5 103.0,262.1 103.5,263.8 104.0,265.6 104.5,267.5 105.0,269.5 105.5,271.5 106.0,273.5 106.5,275.4 107.0,277.3 107.5,279.1 108.0,280.7 108.5,282.2 109.0,283.5 109.5,284.5 110.0,285.3 110.5,285.8 111.0,286.0 111.5,285.9 112.0,285.5 112.5,284.9 113.0,284.1 113.5,283.1 114.0,282.0 114.5,280.8 115.0,279.5 115.5,278.2 116.0,276.8 116.5,275.4 117.0,274.1 117.5,272.8 118.0,271.6 118.5,270.5 119.0,269.5 119.5,268.7 120.0,268.1 120.5,267.7 121.0,267.6 121.5,267.6 122.0,267.8 122.5,268.0 123.0,268.2 123.5,268.5 124.0,268.9 124.5,269.2 125.0,269.5 125.5,269.9 126.0,270.2 126.5,270.5 127.0,270.7 127.5,270.9 128.0,271.0 128.5,271.0 129.0,270.8 129.5,270.5 130.0,270.0 130.5,269.3 131.0,268.5 131.5,267.5 132.0,266.4 132.5,265.2 133.0,263.8 133.5,262.3 134.0,260.8 134.5,259.1 135.0,257.3 135.5,255.4 136.0,253.5 136.5,251.5 137.0,249.4 137.5,247.3 138.0,245.1 138.5,242.8 139.0,240.6 139.5,238.3 140.0,236.0 140.5,233.6 141.0,231.3 141.5,229.0 142.0,226.6 142.5,223.9 143.0,220.7 143.5,217.2 144.0,213.4 144.5,209.4 145.0,205.3 145.5,201.1 146.0,196.9 146.5,192.7 147.0,188.7 147.5,184.9 148.0,181.4 148.5,178.3 149.0,175.5 149.5,172.9 150.0,170.3 150.5,167.6 151.0,165.0 151.5,162.4 152.0,159.9 152.5,157.5 153.0,155.4 153.5,153.4 154.0,151.7 154.5,150.3 155.0,149.3 155.5,148.6 156.0,148.4 156.5,148.7 157.0,149.5 157.5,150.7 158.0,152.4 158.5,154.4 159.0,156.7 159.5,159.2 160.0,161.9 160.5,164.7 161.0,167.6 161.5,170.5 162.0,173.4 162.5,176.1 163.0,178.8 163.5,181.1 164.0,183.3 164.5,185.1 165.0,186.5 165.5,187.5 166.0,188.0 166.5,187.9 167.0,187.6 167.5,186.9 168.0,185.9 168.5,184.7 169.0,183.3 169.5,181.7 170.0,180.0 170.5,178.3 171.0,176.4 171.5,174.6 172.0,172.8 172.5,171.0 173.0,169.3 173.5,167.8 174.0,166.4 174.5,165.3 175.0,164.4 175.5,163.7 176.0,163.4 176.5,163.4 177.0,163.7 177.5,164.1 178.0,164.8 178.5,165.6 179.0,166.5 179.5,167.6 180.0,168.7 180.5,169.9 181.0,171.2 181.5,172.5 182.0,173.8 182.5,175.1 183.0,176.4 183.5,177.6 184.0,178.8 184.5,180.1 185.0,181.4 185.5,182.7 186.0,184.1 186.5,185.6 187.0,187.1 187.5,188.6 188.0,190.2 188.5,191.8 189.0,193.5 189.5,195.1 190.0,196.9 190.5,199.0 191.0,201.4 191.5,203.9 192.0,206.7 192.5,209.5 193.0,212.3 193.5,215.1 194.0,217.7 194.5,220.1 195.0,222.2 195.5,224.0 196.0,225.3 196.5,226.2 197.0,226.5 197.5,226.3 198.0,225.8 198.5,225.0 199.0,223.9 199.5,222.5 200.0,221.0 200.5,219.4 201.0,217.6 201.5,215.7 202.0,213.9 202.5,212.0 203.0,210.2 203.5,208.5 204.0,206.9 204.5,205.4 205.0,204.2 205.5,203.2 206.0,202.5 206.5,202.1 207.0,202.0 207.5,202.5 208.0,203.3 208.5,204.6 209.0,206.1 209.5,208.0 210.0,210.1 210.5,212.3 211.0,214.7 211.5,217.2 212.0,219.6 212.5,222.1 213.0,224.5 213.5,226.7 214.0,228.9 214.5,231.4 215.0,234.3 215.5,237.3 216.0,240.5 216.5,243.7 217.0,246.9 217.5,250.1 218.0,253.0 218.5,255.8 219.0,258.2 219.5,260.2 220.0,261.7 220.5,262.7 221.0,263.0 221.5,263.0 222.0,262.9 222.5,262.7 223.0,262.5 223.5,262.2 224.0,262.0 224.5,261.8 225.0,261.5 225.5,261.3 226.0,261.1 226.5,261.0 227.0,261.0 227.5,261.1 228.0,261.2 228.5,261.5 229.0,261.9 229.5,262.3 230.0,262.8 230.5,263.3 231.0,263.7 231.5,264.2 232.0,264.7 232.5,265.1 233.0,265.5 233.5,265.8 234.0,265.9 234.5,266.0 235.0,265.9 235.5,265.6 236.0,265.2 236.5,264.7 237.0,264.0 237.5,263.3 238.0,262.5 238.5,261.6 239.0,260.7 239.5,259.8 240.0,258.9 240.5,258.1 241.0,257.3 241.5,256.5 242.0,255.9 242.5,255.4 243.0,255.0 243.5,254.8 244.0,254.7 244.5,254.9 245.0,255.5 245.5,256.3 246.0,257.4 246.5,258.7 247.0,260.2 247.5,261.9 248.0,263.7 248.5,265.5 249.0,267.5 249.5,269.5 250.0,271.5 250.5,273.5 251.0,275.4 251.5,277.3 252.0,279.0 252.5,280.6 253.0,282.0 253.5,283.3 254.0,284.2 254.5,285.0 255.0,285.4 255.5,285.5 256.0,285.4 256.5,285.0 257.0,284.5 257.5,283.9 258.0,283.1 258.5,282.3 259.0,281.3 259.5,280.3 260.0,279.2 260.5,278.1 261.0,277.0 261.5,275.9 262.0,274.9 262.5,273.9 263.0,273.0 263.5,272.2 264.0,271.5 264.5,271.0 265.0,270.6 265.5,270.3 266.0,270.3 266.5,270.3 267.0,270.3 267.5,270.3 268.0,270.3 268.5,270.3 269.0,270.3 269.5,270.3 270.0,270.3 270.5,270.3 271.0,270.3 271.5,270.3 272.0,270.3 272.5,270.3 273.0,270.3 273.5,270.2 274.0,270.0 274.5,269.5 275.0,268.9 275.5,268.2 276.0,267.3 276.5,266.3 277.0,265.2 277.5,263.9 278.0,262.5 278.5,261.1 279.0,259.5 279.5,257.8 280.0,256.0 280.5,254.2 281.0,252.2 281.5,250.2 282.0,248.2 282.5,246.1 283.0,243.9 283.5,241.7 284.0,239.5 284.5,237.2 285.0,234.9 285.5,232.6 286.0,230.4 286.5,228.1 287.0,225.6 287.5,222.7 288.0,219.3 288.5,215.6 289.0,211.7 289.5,207.5 290.0,203.2 290.5,198.9 291.0,194.6 291.5,190.4 292.0,186.4 292.5,182.6 293.0,179.1 293.5,176.0 294.0,173.4 294.5,171.0 295.0,168.6 295.5,166.1 296.0,163.7 296.5,161.4 297.0,159.2 297.5,157.2 298.0,155.4 298.5,153.9 299.0,152.8 299.5,151.9 300.0,151.5 300.5,151.6 301.0,152.2 301.5,153.4 302.0,155.0 302.5,157.0 303.0,159.3 303.5,161.9 304.0,164.8 304.5,167.8 305.0,170.9 305.5,174.0 306.0,177.2 306.5,180.2 307.0,183.2 307.5,185.9 308.0,188.5 308.5,190.7 309.0,192.5 309.5,193.9 310.0,194.9 310.5,195.3 311.0,195.1 311.5,194.5 312.0,193.5 312.5,192.1 313.0,190.3 313.5,188.4 314.0,186.2 314.5,183.9 315.0,181.5 315.5,179.0 316.0,176.6 316.5,174.3 317.0,172.1 317.5,170.0 318.0,168.3 318.5,166.8 319.0,165.7 319.5,165.0 320.0,164.7 320.5,164.9 321.0,165.5 321.5,166.5 322.0,167.8 322.5,169.3 323.0,171.0 323.5,172.8 324.0,174.8 324.5,176.8 325.0,178.7 325.5,180.6 326.0,182.4 326.5,184.0 327.0,185.4 327.5,186.5 328.0,187.6 328.5,188.6 329.0,189.5 329.5,190.4 330.0,191.2 330.5,192.0 331.0,192.8 331.5,193.6 332.0,194.3 332.5,195.1 333.0,195.9 333.5,196.7 334.0,197.5 334.5,198.4 335.0,199.3 335.5,200.3 336.0,201.3 336.5,202.4 337.0,203.6 337.5,205.1 338.0,206.9 338.5,208.8 339.0,210.8 339.5,213.0 340.0,215.1 340.5,217.2 341.0,219.3 341.5,221.2 342.0,222.9 342.5,224.4 343.0,225.6 343.5,226.4 344.0,226.9 344.5,227.0 345.0,226.6 345.5,225.9 346.0,224.9 346.5,223.6 347.0,222.1 347.5,220.5 348.0,218.8 348.5,217.0 349.0,215.2 349.5,213.5 350.0,211.9 350.5,210.4 351.0,209.1 351.5,208.1 352.0,207.4 352.5,207.0 353.0,207.1 353.5,207.7 354.0,208.7 354.5,210.1 355.0,211.9 355.5,213.9 356.0,216.1 356.5,218.4 357.0,220.8 357.5,223.2 358.0,225.4 358.5,227.6 359.0,229.9 359.5,232.5 360.0,235.5 360.5,238.6 361.0,241.9 361.5,245.3 362.0,248.6 362.5,251.8 363.0,254.8 363.5,257.5 364.0,259.8 364.5,261.7 365.0,263.1 365.5,263.9 366.0,264.0 366.5,263.8 367.0,263.5 367.5,263.0 368.0,262.4 368.5,261.6 369.0,260.9 369.5,260.0 370.0,259.2 370.5,258.3 371.0,257.5 371.5,256.8 372.0,256.1 372.5,255.5 373.0,255.1 373.5,254.8 374.0,254.7 374.5,254.8 375.0,255.2 375.5,255.9 376.0,256.7 376.5,257.7 377.0,258.8 377.5,260.0 378.0,261.2 378.5,262.5 379.0,263.7 379.5,264.9 380.0,266.0 380.5,267.0 381.0,267.8 381.5,268.5 382.0,268.9 382.5,269.0 383.0,268.9 383.5,268.4 384.0,267.8 384.5,266.9 385.0,266.0 385.5,264.9 386.0,263.7 386.5,262.5 387.0,261.3 387.5,260.2 388.0,259.2 388.5,258.3 389.0,257.5 389.5,257.0 390.0,256.8 390.5,256.8 391.0,257.2 391.5,257.8 392.0,258.7 392.5,259.8 393.0,261.2 393.5,262.7 394.0,264.4 394.5,266.1 395.0,268.0 395.5,269.9 396.0,271.9 396.5,273.8 397.0,275.7 397.5,277.6 398.0,279.4 398.5,281.0 399.0,282.6 399.5,283.9 400.0,285.0 400.5,285.9 401.0,286.6 401.5,286.9 402.0,287.0 402.5,286.7 403.0,286.1 403.5,285.2 404.0,284.2 404.5,282.9 405.0,281.5 405.5,280.0 406.0,278.3 406.5,276.7 407.0,275.0 407.5,273.3 408.0,271.7 408.5,270.2 409.0,268.8 409.5,267.6 410.0,266.6 410.5,265.8 411.0,265.2 411.5,265.0 412.0,265.1 412.5,265.3 413.0,265.8 413.5,266.4 414.0,267.0 414.5,267.8 415.0,268.5 415.5,269.3 416.0,269.9 416.5,270.5 417.0,271.0 417.5,271.2 418.0,271.3 418.5,271.1 419.0,270.8 419.5,270.2 420.0,269.5 420.5,268.6 421.0,267.5 421.5,266.2 422.0,264.8 422.5,263.3 423.0,261.6 423.5,259.8 424.0,257.9 424.5,255.9 425.0,253.8 425.5,251.6 426.0,249.3 426.5,247.0 427.0,244.6 427.5,242.2 428.0,239.7 428.5,237.2 429.0,234.7 429.5,232.1 430.0,229.6 430.5,227.1 431.0,224.1 431.5,220.7 432.0,216.8 432.5,212.6 433.0,208.1 433.5,203.6 434.0,199.1 434.5,194.7 435.0,190.5 435.5,186.6 436.0,183.1 436.5,180.2 437.0,177.7 437.5,175.2 438.0,172.6 438.5,170.1 439.0,167.6 439.5,165.3 440.0,163.0 440.5,160.9 441.0,159.0 441.5,157.3 442.0,155.8 442.5,154.6 443.0,153.7 443.5,153.2 444.0,153.0 444.5,153.2 445.0,153.9 445.5,155.1 446.0,156.5 446.5,158.3 447.0,160.4 447.5,162.7 448.0,165.3 448.5,167.9 449.0,170.7 449.5,173.5 450.0,176.4 450.5,179.2 451.0,181.9 451.5,184.6 452.0,187.0 452.5,189.3 453.0,191.4 453.5,193.1 454.0,194.5 454.5,195.5 455.0,196.1 455.5,196.3 456.0,196.0 456.5,195.3 457.0,194.2 457.5,192.9 458.0,191.2 458.5,189.4 459.0,187.4 459.5,185.3 460.0,183.1 460.5,180.9 461.0,178.7 461.5,176.5 462.0,174.5 462.5,172.6 463.0,170.9 463.5,169.5 464.0,168.4 464.5,167.6 465.0,167.2 465.5,167.3 466.0,167.6 466.5,168.3 467.0,169.2 467.5,170.2 468.0,171.5 468.5,172.8 469.0,174.2 469.5,175.7 470.0,177.1 470.5,178.5 471.0,179.7 471.5,180.9 472.0,182.1 472.5,183.3 473.0,184.6 473.5,185.8 474.0,187.1 474.5,188.4 475.0,189.7 475.5,191.0 476.0,192.4 476.5,193.7 477.0,195.1 477.5,196.5 478.0,197.9 478.5,199.3 479.0,200.7 479.5,202.1 480.0,203.5 480.5,205.0 481.0,206.6 481.5,208.4 482.0,210.3 482.5,212.4 483.0,214.5 483.5,216.5 484.0,218.6 484.5,220.5 485.0,222.3 485.5,224.0 486.0,225.3 486.5,226.4 487.0,227.2 487.5,227.6 488.0,227.5 488.5,227.1 489.0,226.3 489.5,225.3 490.0,223.9 490.5,222.4 491.0,220.7 491.5,218.9 492.0,217.0 492.5,215.0 493.0,213.1 493.5,211.2 494.0,209.5 494.5,207.9 495.0,206.5 495.5,205.3 496.0,204.4 496.5,203.8 497.0,203.6 497.5,204.0 498.0,205.0 498.5,206.7 499.0,208.7 499.5,211.2 500.0,213.8 500.5,216.6 501.0,219.3 501.5,222.0 502.0,224.4 502.5,226.6 503.0,228.9 503.5,231.4 504.0,234.0 504.5,236.7 505.0,239.5 505.5,242.3 506.0,245.1 506.5,247.9 507.0,250.5 507.5,253.1 508.0,255.5 508.5,257.7 509.0,259.7 509.5,261.5 510.0,262.9 510.5,264.0 511.0,264.7 511.5,265.0 512.0,264.9 512.5,264.6 513.0,264.2 513.5,263.6 514.0,262.9 514.5,262.0 515.0,261.2 515.5,260.3 516.0,259.4 516.5,258.5 517.0,257.7 517.5,257.0 518.0,256.4 518.5,256.0 519.0,255.7 519.5,255.7 520.0,255.9 520.5,256.1 521.0,256.6 521.5,257.1 522.0,257.7 522.5,258.3 523.0,259.0 523.5,259.7 524.0,260.3 524.5,261.0 525.0,261.6 525.5,262.1 526.0,262.5 526.5,262.8 527.0,263.0 527.5,263.0 528.0,262.8 528.5,262.5 529.0,262.1 529.5,261.6 530.0,261.0 530.5,260.4 531.0,259.7 531.5,259.1 532.0,258.5 532.5,257.9 533.0,257.4 533.5,257.1 534.0,256.8 534.5,256.8 535.0,256.9 535.5,257.3 536.0,258.0 536.5,258.9 537.0,260.0 537.5,261.3 538.0,262.7 538.5,264.3 539.0,266.0 539.5,267.7 540.0,269.5 540.5,271.3 541.0,273.1 541.5,274.9 542.0,276.6 542.5,278.3 543.0,279.8 543.5,281.2 544.0,282.5 544.5,283.5 545.0,284.4 545.5,285.0 546.0,285.4 546.5,285.5 547.0,285.3 547.5,284.8 548.0,284.1 548.5,283.2 549.0,282.2 549.5,281.0 550.0,279.7 550.5,278.3 551.0,276.9 551.5,275.5 552.0,274.2 552.5,272.8 553.0,271.6 553.5,270.5 554.0,269.6 554.5,268.8 555.0,268.3 555.5,268.0 556.0,267.8 556.5,267.6 557.0,267.5 557.5,267.3 558.0,267.2 558.5,267.2 559.0,267.1 559.5,267.0 560.0,266.9 560.5,266.8 561.0,266.8 561.5,266.7 562.0,266.5 562.5,266.4 563.0,266.3 563.5,266.1 564.0,265.9 564.5,265.5 565.0,265.1 565.5,264.5 566.0,263.9 566.5,263.2 567.0,262.4 567.5,261.5 568.0,260.5 568.5,259.5 569.0,258.4 569.5,257.2 570.0,256.0 570.5,254.8 571.0,253.5 571.5,252.2 572.0,250.8 572.5,249.5 573.0,248.1 573.5,246.7 574.0,245.3 574.5,243.9 575.0,242.5 575.5,241.2 576.0,239.8 576.5,238.3 577.0,236.7 577.5,235.0 578.0,233.1 578.5,231.1 579.0,229.0 579.5,226.6 580.0,223.6 580.5,220.1 581.0,216.2 581.5,211.9 582.0,207.3 582.5,202.7 583.0,198.0 583.5,193.4 584.0,189.0 584.5,185.0 585.0,181.3 585.5,178.2 586.0,175.4 586.5,172.6 587.0,169.7 587.5,166.9 588.0,164.2 588.5,161.6 589.0,159.2 589.5,157.0 590.0,155.2 590.5,153.7 591.0,152.7 591.5,152.1 592.0,152.0 592.5,152.5 593.0,153.6 593.5,155.0 594.0,156.8 594.5,159.0 595.0,161.4 595.5,164.1 596.0,166.9 596.5,169.7 597.0,172.7 597.5,175.6 598.0,178.4 598.5,181.1 599.0,183.5 599.5,185.8 600.0,187.7 600.5,189.2 601.0,190.3 601.5,190.9 602.0,191.0 602.5,190.6 603.0,189.9 603.5,188.9 604.0,187.6 604.5,186.1 605.0,184.4 605.5,182.6 606.0,180.6 606.5,178.7 607.0,176.6 607.5,174.7 608.0,172.7 608.5,170.9 609.0,169.3 609.5,167.8 610.0,166.6 610.5,165.6 611.0,165.0 611.5,164.7 612.0,164.8 612.5,165.2 613.0,165.9 613.5,166.8 614.0,167.9 614.5,169.2 615.0,170.5 615.5,172.0 616.0,173.5 616.5,175.1 617.0,176.6 617.5,178.1 618.0,179.4 618.5,180.7 619.0,181.8 619.5,182.7 620.0,183.6 620.5,184.4 621.0,185.2 621.5,185.9 622.0,186.7 622.5,187.4 623.0,188.2 623.5,188.9 624.0,189.8 624.5,190.6 625.0,191.5 625.5,192.5 626.0,193.5 626.5,194.8 627.0,196.3 627.5,198.1 628.0,200.1 628.5,202.3 629.0,204.7 629.5,207.1 630.0,209.6 630.5,212.0 631.0,214.3 631.5,216.5 632.0,218.5 632.5,220.3 633.0,221.7 633.5,222.8 634.0,223.6 634.5,223.8 635.0,223.6 635.5,223.1 636.0,222.4 636.5,221.4 637.0,220.2 637.5,218.8 638.0,217.3 638.5,215.7 639.0,214.0 639.5,212.4 640.0,210.7 640.5,209.1 641.0,207.6 641.5,206.2 642.0,205.0 642.5,204.0 643.0,203.3 643.5,202.8 644.0,202.6 644.5,202.9 645.0,203.8 645.5,205.1 646.0,206.9 646.5,209.0 647.0,211.3 647.5,213.9 648.0,216.5 648.5,219.2 649.0,221.9 649.5,224.4 650.0,226.7 650.5,228.9 651.0,231.4 651.5,234.0 652.0,236.9 652.5,239.8 653.0,242.7 653.5,245.7 654.0,248.5 654.5,251.1 655.0,253.6 655.5,255.7 656.0,257.5 656.5,258.8 657.0,259.7 657.5,260.0 658.0,259.9 658.5,259.6 659.0,259.1 659.5,258.5 660.0,257.7 660.5,256.9 661.0,256.1 661.5,255.3 662.0,254.6 662.5,253.9 663.0,253.3 663.5,252.9 664.0,252.6 664.5,252.6 665.0,252.8 665.5,253.2 666.0,253.7 666.5,254.4 667.0,255.2 667.5,256.1 668.0,257.0 668.5,258.0 669.0,259.0 669.5,259.9 670.0,260.9 670.5,261.7 671.0,262.5 671.5,263.1 672.0,263.6 672.5,263.9 673.0,264.0 673.5,263.9 674.0,263.6 674.5,263.1 675.0,262.5 675.5,261.8 676.0,261.1 676.5,260.2 677.0,259.3 677.5,258.5 678.0,257.6 678.5,256.9 679.0,256.2 679.5,255.6 680.0,255.1 680.5,254.8 681.0,254.7 681.5,254.9 682.0,255.4 682.5,256.2 683.0,257.2 683.5,258.5 684.0,260.0 684.5,261.7 685.0,263.5 685.5,265.4 686.0,267.3 686.5,269.3 687.0,271.4 687.5,273.4 688.0,275.3 688.5,277.1 689.0,278.9 689.5,280.5 690.0,281.8 690.5,283.0 691.0,284.0 691.5,284.6 692.0,285.0 692.5,285.0 693.0,284.7 693.5,284.1 694.0,283.4 694.5,282.4 695.0,281.3 695.5,280.1 696.0,278.8 696.5,277.4 697.0,275.9 697.5,274.5 698.0,273.1 698.5,271.8 699.0,270.5 699.5,269.4 700.0,268.5 700.5,267.7 701.0,267.1 701.5,266.8 702.0,266.8 702.5,266.9 703.0,267.0 703.5,267.3 704.0,267.7 704.5,268.0 705.0,268.5 705.5,268.9 706.0,269.3 706.5,269.8 707.0,270.2 707.5,270.5 708.0,270.8 708.5,271.1 709.0,271.2 709.5,271.3 710.0,271.1 710.5,270.5 711.0,269.6 711.5,268.4 712.0,267.0 712.5,265.4 713.0,263.6 713.5,261.7 714.0,259.8 714.5,257.9 715.0,256.1 715.5,254.3 716.0,252.7 716.5,251.3 717.0,250.0 717.5,249.0 718.0,248.0 718.5,247.0 719.0,246.1 719.5,245.3 720.0,244.4 720.5,243.5 721.0,242.6 721.5,241.6 722.0,240.5 722.5,239.3 723.0,238.0 723.5,236.5 724.0,234.9 724.5,233.1 725.0,231.1 725.5,228.9 726.0,226.5 726.5,223.8 727.0,220.2 727.5,215.9 728.0,211.2 728.5,206.1 729.0,200.9 729.5,195.7 730.0,190.8 730.5,186.3 731.0,182.3 731.5,179.1 732.0,176.2 732.5,173.2 733.0,170.2 733.5,167.3 734.0,164.4 734.5,161.8 735.0,159.3 735.5,157.1 736.0,155.2 736.5,153.7 737.0,152.5 737.5,151.8 738.0,151.5 738.5,151.8 739.0,152.5 739.5,153.6 740.0,155.1 740.5,156.9 741.0,159.0 741.5,161.3 742.0,163.7 742.5,166.3 743.0,168.9 743.5,171.5 744.0,174.1 744.5,176.5 745.0,178.8 745.5,180.9 746.0,182.7 746.5,184.2 747.0,185.3 747.5,186.0 748.0,186.3 748.5,186.1 749.0,185.7 749.5,184.9 750.0,183.9 750.5,182.7 751.0,181.4 751.5,179.8 752.0,178.2 752.5,176.6 753.0,174.8 753.5,173.1 754.0,171.5 754.5,169.9 755.0,168.3 755.5,167.0 756.0,165.8 756.5,164.8 757.0,164.0 757.5,163.6 758.0,163.4 758.5,163.5 759.0,163.6 759.5,163.9 760.0,164.3 760.5,164.7 761.0,165.3 761.5,165.9 762.0,166.6 762.5,167.4 763.0,168.2 763.5,169.2 764.0,170.1 764.5,171.1 765.0,172.2 765.5,173.3 766.0,174.4 766.5,175.6 767.0,176.8 767.5,178.0 768.0,179.3 768.5,180.5 769.0,181.8 769.5,183.2 770.0,184.9 770.5,187.0 771.0,189.3 771.5,191.8 772.0,194.5 772.5,197.2 773.0,200.0 773.5,202.8 774.0,205.5 774.5,208.2 775.0,210.7 775.5,213.0 776.0,215.1 776.5,216.9 777.0,218.4 777.5,219.6 778.0,220.7 778.5,221.7 779.0,222.6 779.5,223.2 780.0,223.4 780.5,223.2 781.0,222.7 781.5,221.8 782.0,220.7 782.5,219.3 783.0,217.8 783.5,216.1 784.0,214.3 784.5,212.4 785.0,210.6 785.5,208.7 786.0,207.0 786.5,205.3 787.0,203.8 787.5,202.5 788.0,201.4 788.5,200.6 789.0,200.1 789.5,200.0 790.0,200.5 790.5,201.6 791.0,203.2 791.5,205.3 792.0,207.7 792.5,210.4 793.0,213.2 793.5,216.2 794.0,219.1 794.5,222.0 795.0,224.7 795.5,227.1 796.0,229.5 796.5,232.0 797.0,234.8 797.5,237.7 798.0,240.6 798.5,243.6 799.0,246.5 799.5,249.3 800.0,251.9 800.5,254.3 801.0,256.3 801.5,258.1 802.0,259.4 802.5,260.2 803.0,260.5 803.5,260.5 804.0,260.4 804.5,260.2 805.0,260.0 805.5,259.7 806.0,259.5 806.5,259.2 807.0,258.9 807.5,258.7 808.0,258.4 808.5,258.2 809.0,258.0 809.5,257.9 810.0,257.8 810.5,257.8 811.0,258.0 811.5,258.3 812.0,258.6 812.5,259.1 813.0,259.6 813.5,260.2 814.0,260.8 814.5,261.4 815.0,262.0 815.5,262.5 816.0,263.0 816.5,263.4 817.0,263.7 817.5,263.9 818.0,264.0 818.5,263.9 819.0,263.6 819.5,263.1 820.0,262.5 820.5,261.7 821.0,260.9 821.5,260.1 822.0,259.2 822.5,258.3 823.0,257.4 823.5,256.6 824.0,256.0 824.5,255.4 825.0,255.0 825.5,254.7 826.0,254.7 826.5,255.0 827.0,255.5 827.5,256.4 828.0,257.4 828.5,258.6 829.0,260.0 829.5,261.6 830.0,263.3 830.5,265.0 831.0,266.9 831.5,268.8 832.0,270.7 832.5,272.6 833.0,274.4 833.5,276.2 834.0,278.0 834.5,279.6 835.0,281.0 835.5,282.3 836.0,283.5 836.5,284.4 837.0,285.0 837.5,285.4 838.0,285.5 838.5,285.3 839.0,285.0 839.5,284.4 840.0,283.7 840.5,282.9 841.0,281.9 841.5,280.9 842.0,279.7 842.5,278.6 843.0,277.4 843.5,276.3 844.0,275.2 844.5,274.1 845.0,273.1 845.5,272.3 846.0,271.5 846.5,270.9 847.0,270.5 847.5,270.3 848.0,270.3 848.5,270.3 849.0,270.4 849.5,270.4 850.0,270.5 850.5,270.6 851.0,270.6 851.5,270.7 852.0,270.8 852.5,270.8 853.0,270.9 853.5,271.0 854.0,271.0 854.5,271.0 855.0,270.9 855.5,270.4 856.0,269.6 856.5,268.6 857.0,267.3 857.5,265.9 858.0,264.3 858.5,262.6 859.0,260.9 859.5,259.2 860.0,257.5 860.5,255.9 861.0,254.4 861.5,253.1 862.0,252.0 862.5,251.2 863.0,250.5 863.5,249.9 864.0,249.4 864.5,248.9 865.0,248.5 865.5,248.0 866.0,247.6 866.5,247.1 867.0,246.5 867.5,245.9 868.0,245.1 868.5,244.2 869.0,243.1 869.5,241.5 870.0,239.6 870.5,237.4 871.0,235.1 871.5,232.7" fill="none" stroke="#FFFF00" stroke-width="1"/>
<path d="M146 349h1v28h-1zM147 322h1v28h-1zM148 328h1v27h-1zM149 354h1v22h-1zM729 373h1v4h-1zM730 339h1v35h-1zM731 309h1v31h-1zM732 332h1v33h-1zM733 364h1v12h-1zM734 375h1v1h-1zM735 375h1v1h-1z" fill="#FF0000"/>
<rect x="128" y="2" width="1" height="524" fill="#00F0FF"/>
<rect x="156" y="2" width="1" height="524" fill="#00F0FF"/>
<rect x="273" y="2" width="1" height="524" fill="#00F0FF"/>
<rect x="301" y="2" width="1" height="524" fill="#00F0FF"/>
<rect x="417" y="2" width="1" height="524" fill="#00F0FF"/>
<rect x="446" y="2" width="1" height="524" fill="#00F0FF"/>
<rect x="563" y="2" width="1" height="524" fill="#00F0FF"/>
<rect x="592" y="2" width="1" height="524" fill="#00F0FF"/>
<rect x="150" y="2" width="1" height="500" fill="#0000C0"/>
<rect x="150" y="502" width="1" height="24" fill="#C0C0C0"/>
<rect x="733" y="2" width="1" height="500" fill="#0000C0"/>
<rect x="733" y="502" width="1" height="23" fill="#C0C0C0"/>
<text x="4.5" y="81.5" font-family="Liberation Sans" font-size="14" font-weight="bold" fill="#A0FFFF" text-anchor="start">1</text>
<rect x="12" y="76" width="11" height="1" fill="#A0FFFF"/><path d="M15 73h2l4 3v1l-4 3h-2z" fill="#A0FFFF"/>
<text x="4.5" y="231.5" font-family="Liberation Sans" font-size="14" font-weight="bold" fill="#FFFF00" text-anchor="start">2</text>
<rect x="12" y="226" width="11" height="1" fill="#FFFF00"/><path d="M15 223h2l4 3v1l-4 3h-2z" fill="#FFFF00"/>
<text x="4.5" y="381.5" font-family="Liberation Sans" font-size="14" font-weight="bold" fill="#FF0000" text-anchor="start">3</text>
<rect x="12" y="376" width="11" height="1" fill="#FF0000"/><path d="M15 373h2l4 3v1l-4 3h-2z" fill="#FF0000"/>
<text x="4.5" y="481.5" font-family="Liberation Sans" font-size="14" font-weight="bold" fill="#80FF00" text-anchor="start">4</text>
<rect x="12" y="476" width="11" height="1" fill="#80FF00"/><path d="M15 473h2l4 3v1l-4 3h-2z" fill="#80FF00"/>
<rect x="121.5" y="526.5" width="13" height="13" rx="1.5" fill="none" stroke="#00F0FF" stroke-width="1" shape-rendering="auto"/>
<text x="128.5" y="537" font-family="Liberation Sans" font-size="12" font-weight="bold" fill="#00F0FF" text-anchor="middle">0</text>
<rect x="149.5" y="526.5" width="13" height="13" rx="1.5" fill="none" stroke="#00F0FF" stroke-width="1" shape-rendering="auto"/>
<text x="156.5" y="537" font-family="Liberation Sans" font-size="12" font-weight="bold" fill="#00F0FF" text-anchor="middle">1</text>
<rect x="266.5" y="526.5" width="13" height="13" rx="1.5" fill="none" stroke="#00F0FF" stroke-width="1" shape-rendering="auto"/>
<text x="273.5" y="537" font-family="Liberation Sans" font-size="12" font-weight="bold" fill="#00F0FF" text-anchor="middle">2</text>
<rect x="294.5" y="526.5" width="13" height="13" rx="1.5" fill="none" stroke="#00F0FF" stroke-width="1" shape-rendering="auto"/>
<text x="301.5" y="537" font-family="Liberation Sans" font-size="12" font-weight="bold" fill="#00F0FF" text-anchor="middle">3</text>
<rect x="410.5" y="526.5" width="13" height="13" rx="1.5" fill="none" stroke="#00F0FF" stroke-width="1" shape-rendering="auto"/>
<text x="417.5" y="537" font-family="Liberation Sans" font-size="12" font-weight="bold" fill="#00F0FF" text-anchor="middle">4</text>
<rect x="439.5" y="526.5" width="13" height="13" rx="1.5" fill="none" stroke="#00F0FF" stroke-width="1" shape-rendering="auto"/>
<text x="446.5" y="537" font-family="Liberation Sans" font-size="12" font-weight="bold" fill="#00F0FF" text-anchor="middle">5</text>
<rect x="557.5" y="526.5" width="13" height="13" rx="1.5" fill="none" stroke="#00F0FF" stroke-width="1" shape-rendering="auto"/>
<text x="564.5" y="537" font-family="Liberation Sans" font-size="12" font-weight="bold" fill="#00F0FF" text-anchor="middle">6</text>
<rect x="585.5" y="526.5" width="13" height="13" rx="1.5" fill="none" stroke="#00F0FF" stroke-width="1" shape-rendering="auto"/>
<text x="592.5" y="537" font-family="Liberation Sans" font-size="12" font-weight="bold" fill="#00F0FF" text-anchor="middle">7</text>
<rect x="145.5" y="537.5" width="11" height="11" rx="1.5" fill="none" stroke="#C0C0C0" stroke-width="1" shape-rendering="auto"/>
<text x="151" y="547" font-family="Liberation Sans" font-size="11" font-weight="normal" fill="#C0C0C0" text-anchor="middle">A</text>
<text x="138" y="547" font-family="Liberation Sans" font-size="13" font-weight="normal" fill="#C0C000" text-anchor="start" textLength="6" lengthAdjust="spacingAndGlyphs">0</text>
<rect x="728.5" y="525.5" width="11" height="11" rx="1.5" fill="none" stroke="#C0C0C0" stroke-width="1" shape-rendering="auto"/>
<text x="734" y="535" font-family="Liberation Sans" font-size="11" font-weight="bold" fill="#D0D0D0" text-anchor="middle">B</text>
<text x="280" y="547" font-family="Liberation Sans" font-size="13.5" font-weight="normal" fill="#C0C000" text-anchor="start" textLength="34" lengthAdjust="spacingAndGlyphs">178.8°</text>
<text x="422" y="547" font-family="Liberation Sans" font-size="13.5" font-weight="normal" fill="#C0C000" text-anchor="start" textLength="37" lengthAdjust="spacingAndGlyphs">357.5°</text>
<text x="568" y="547" font-family="Liberation Sans" font-size="13.5" font-weight="normal" fill="#C0C000" text-anchor="start" textLength="37" lengthAdjust="spacingAndGlyphs">538.8°</text>
<text x="720" y="547" font-family="Liberation Sans" font-size="13.5" font-weight="normal" fill="#C0C000" text-anchor="start" textLength="26" lengthAdjust="spacingAndGlyphs">720°</text>
</svg>
</body></html>
